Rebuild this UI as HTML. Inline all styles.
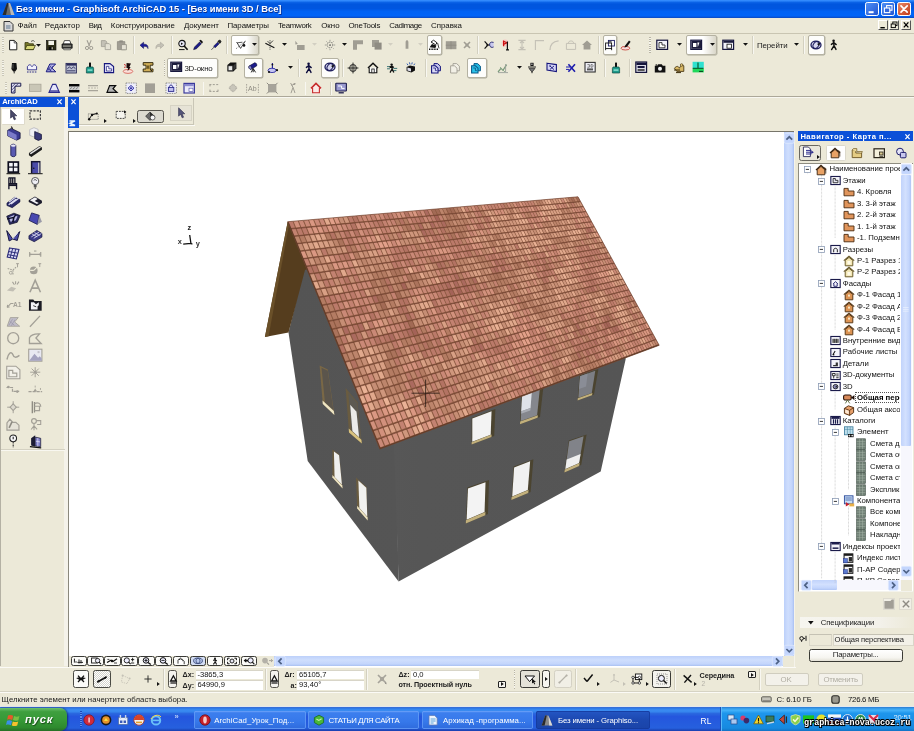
<!DOCTYPE html>
<html lang="ru"><head><meta charset="utf-8"><title>Без имени - Graphisoft ArchiCAD 15</title>
<style>
html,body{margin:0;padding:0;background:#ece9d8;overflow:hidden}
#w{position:absolute;left:0;top:0;width:914px;height:731px;overflow:hidden}
#s{position:absolute;left:-4px;top:-4px;width:922px;height:739px;overflow:hidden;background:#ece9d8;font-family:"Liberation Sans",sans-serif;filter:blur(0.45px)}
#o{position:absolute;left:4px;top:4px;width:914px;height:731px}
#o div,#o span,#o svg{position:absolute;box-sizing:border-box}
#o span{white-space:nowrap}
#o svg{overflow:visible}
#s>i{position:absolute;display:block}
</style></head><body><div id="w"><div id="s"><i style="left:0;top:0;width:922px;height:24px;background:#0a5ae6"></i><i style="left:0;top:708px;width:922px;height:31px;background:#1c4cc0"></i><i style="left:725px;top:708px;width:197px;height:31px;background:#1480d8"></i><i style="left:0;top:708px;width:60px;height:31px;background:#2a7a2a"></i><div id="o">
<div style="left:0px;top:0px;width:914px;height:18.8px;background:linear-gradient(#3a90ff 0%,#2a84fa 5%,#0a62e6 13%,#0056de 22%,#0056e0 45%,#0062f4 60%,#0064f8 84%,#0a4cc8 93%,#0a3ea8 100%)"></div>
<div style="left:0px;top:18.8px;width:914px;height:1.1px;background:#f3f5f0"></div>
<svg style="left:2px;top:2px" width="13" height="14" viewBox="0 0 13 14" ><path d="M0.5 13 L5 1 L8 1 L12.5 13 Z" fill="#6c6c6c"/><path d="M5 1 L6.5 1 L4 13 L0.5 13Z" fill="#2b2b2b"/><path d="M6.5 1 L8 1 L12.5 13 L9 13Z" fill="#b9b9b9"/></svg>
<span class="t" style="left:16px;top:3.2px;font-size:9.4px;line-height:11.4px;font-weight:bold;letter-spacing:-0.02px;color:#fff;text-shadow:0.6px 0.6px 0 #0a2a8a;">Без имени - Graphisoft ArchiCAD 15 - [Без имени 3D / Все]</span>
<div style="left:864.5px;top:2.2px;width:14.2px;height:14px;border-radius:2.2px;border:0.8px solid #fff;background:linear-gradient(135deg,#4f8ff5,#2256d2)"></div>
<svg style="left:864.5px;top:2.2px" width="14.2" height="14" viewBox="0 0 14.2 14" ><rect x="3.6" y="9.2" width="5" height="2" fill="#fff"/></svg>
<div style="left:880.8px;top:2.2px;width:14.2px;height:14px;border-radius:2.2px;border:0.8px solid #fff;background:linear-gradient(135deg,#4f8ff5,#2256d2)"></div>
<svg style="left:880.8px;top:2.2px" width="14.2" height="14" viewBox="0 0 14.2 14" ><rect x="5.6" y="3.6" width="5.4" height="4.6" fill="none" stroke="#fff" stroke-width="1.1"/><rect x="3.4" y="6" width="5.4" height="4.6" fill="#3268dc" stroke="#fff" stroke-width="1.1"/></svg>
<div style="left:897.2px;top:2.2px;width:14.2px;height:14px;border-radius:2.2px;border:0.8px solid #fff;background:linear-gradient(135deg,#e88a68,#c03a18)"></div>
<svg style="left:897.2px;top:2.2px" width="14.2" height="14" viewBox="0 0 14.2 14" ><path d="M4 3.8 L10.2 10.2 M10.2 3.8 L4 10.2" stroke="#fff" stroke-width="1.7" stroke-linecap="round"/></svg>
<div style="left:0px;top:18.3px;width:914px;height:15px;background:#ece9d8"></div>
<div style="left:0px;top:32.6px;width:914px;height:0.9px;background:#c9c5b2"></div>
<div style="left:0px;top:33.5px;width:914px;height:0.7px;background:#fbfaf5"></div>
<svg style="left:2.5px;top:19.5px" width="11" height="12" viewBox="0 0 11 12" ><path d="M1 1.5 L7 1.5 L10 4.5 L10 11 L1 11Z" fill="#d8d8d8" stroke="#333" stroke-width="1"/><path d="M3 5 L7.5 5 L7.5 9 L3 9Z" fill="#9aa7b5"/></svg>
<span class="t" style="left:17.6px;top:21px;font-size:7.9px;line-height:9.9px;letter-spacing:-0.01px;color:#111;">Файл</span>
<span class="t" style="left:44.8px;top:21px;font-size:7.9px;line-height:9.9px;letter-spacing:0.17px;color:#111;">Редактор</span>
<span class="t" style="left:88.7px;top:21px;font-size:7.9px;line-height:9.9px;letter-spacing:-0.5px;color:#111;">Вид</span>
<span class="t" style="left:110.8px;top:21px;font-size:7.9px;line-height:9.9px;letter-spacing:0.01px;color:#111;">Конструирование</span>
<span class="t" style="left:183.9px;top:21px;font-size:7.9px;line-height:9.9px;letter-spacing:0.01px;color:#111;">Документ</span>
<span class="t" style="left:227.4px;top:21px;font-size:7.9px;line-height:9.9px;letter-spacing:-0.06px;color:#111;">Параметры</span>
<span class="t" style="left:277.9px;top:21px;font-size:7.9px;line-height:9.9px;letter-spacing:-0.29px;color:#111;">Teamwork</span>
<span class="t" style="left:321.2px;top:21px;font-size:7.9px;line-height:9.9px;letter-spacing:0.01px;color:#111;">Окно</span>
<span class="t" style="left:348.4px;top:21px;font-size:7.9px;line-height:9.9px;letter-spacing:-0.2px;color:#111;">OneTools</span>
<span class="t" style="left:389.2px;top:21px;font-size:7.9px;line-height:9.9px;letter-spacing:-0.43px;color:#111;">Cadimage</span>
<span class="t" style="left:431px;top:21px;font-size:7.9px;line-height:9.9px;letter-spacing:0px;color:#111;">Справка</span>
<div style="left:877.6px;top:20.3px;width:10.4px;height:10px;background:#ece9d8;border-top:0.7px solid #fff;border-left:0.7px solid #fff;border-right:0.8px solid #555;border-bottom:0.8px solid #555"></div>
<svg style="left:877.6px;top:20.3px" width="10.4" height="10" viewBox="0 0 10.4 10" ><rect x="2.4" y="7" width="4.4" height="1.4" fill="#000"/></svg>
<div style="left:888.6px;top:20.3px;width:10.4px;height:10px;background:#ece9d8;border-top:0.7px solid #fff;border-left:0.7px solid #fff;border-right:0.8px solid #555;border-bottom:0.8px solid #555"></div>
<svg style="left:888.6px;top:20.3px" width="10.4" height="10" viewBox="0 0 10.4 10" ><rect x="3.8" y="2" width="4.2" height="3.6" fill="none" stroke="#000" stroke-width="0.9"/><rect x="2.2" y="4" width="4.2" height="3.6" fill="#ece9d8" stroke="#000" stroke-width="0.9"/></svg>
<div style="left:901px;top:20.3px;width:10.4px;height:10px;background:#ece9d8;border-top:0.7px solid #fff;border-left:0.7px solid #fff;border-right:0.8px solid #555;border-bottom:0.8px solid #555"></div>
<svg style="left:901px;top:20.3px" width="10.4" height="10" viewBox="0 0 10.4 10" ><path d="M2.8 2.4 L7.4 7.4 M7.4 2.4 L2.8 7.4" stroke="#000" stroke-width="1.3"/></svg>
<div style="left:67.9px;top:130.9px;width:726px;height:535.9px;background:#fff;border-top:1.1px solid #77756a;border-left:1.1px solid #8a887d"></div>
<div style="left:784px;top:132px;width:9.9px;height:523.6px;background:linear-gradient(90deg,#bcd0fa,#cfdefd 40%,#c3d5fc 80%,#a9c0f2)"></div>
<div style="left:793.9px;top:130.9px;width:4.3px;height:536px;background:#f5f3ea"></div>
<svg style="left:783.6px;top:132.8px" width="10.6" height="10.6" viewBox="0 0 10.6 10.6" ><rect x="0.3" y="0.3" width="10" height="10" rx="1.4" fill="#c3d5fd" stroke="#e6eefe" stroke-width="0.6"/><path d="M2.4 6.6 L5.3 3.8 L8.2 6.6" fill="none" stroke="#4d6185" stroke-width="1.7"/></svg>
<svg style="left:783.6px;top:644.6px" width="10.6" height="10.6" viewBox="0 0 10.6 10.6" ><rect x="0.3" y="0.3" width="10" height="10" rx="1.4" fill="#c3d5fd" stroke="#e6eefe" stroke-width="0.6"/><path d="M2.4 4 L5.3 6.8 L8.2 4" fill="none" stroke="#4d6185" stroke-width="1.7"/></svg>
<div style="left:273.6px;top:656.2px;width:509.4px;height:10.2px;background:linear-gradient(#bdd0fa,#cfdefd 40%,#c3d5fc 80%,#a9c0f2)"></div>
<svg style="left:274.6px;top:656px" width="10.6" height="10.6" viewBox="0 0 10.6 10.6" ><rect x="0.3" y="0.3" width="10" height="10" rx="1.4" fill="#c3d5fd" stroke="#e6eefe" stroke-width="0.6"/><path d="M6.6 2.4 L3.8 5.3 L6.6 8.2" fill="none" stroke="#4d6185" stroke-width="1.7"/></svg>
<svg style="left:771.8px;top:656px" width="10.6" height="10.6" viewBox="0 0 10.6 10.6" ><rect x="0.3" y="0.3" width="10" height="10" rx="1.4" fill="#c3d5fd" stroke="#e6eefe" stroke-width="0.6"/><path d="M4 2.4 L6.8 5.3 L4 8.2" fill="none" stroke="#4d6185" stroke-width="1.7"/></svg>
<div style="left:783px;top:655.8px;width:11px;height:11px;background:#ece9d8"></div>
<div style="left:68.6px;top:655.6px;width:205px;height:11.2px;background:#ece9d8"></div>
<svg style="left:0px;top:0px" width="914" height="731" viewBox="0 0 914 731" ><defs><linearGradient id="gw" x1="0" y1="0" x2="1" y2="0"><stop offset="0" stop-color="#545454"/><stop offset="1" stop-color="#555555"/></linearGradient><linearGradient id="fw" x1="0" y1="0" x2="1" y2="0"><stop offset="0" stop-color="#575757"/><stop offset="0.12" stop-color="#565656"/><stop offset="1" stop-color="#555"/></linearGradient></defs><polygon points="305,264 288.5,332.4 307.7,461 398.6,581.5 396,455 395,436 340,330" fill="url(#gw)"/><polygon points="393,436 625.8,350 625.6,359.5 600.7,471.5 398.6,581.5 394.4,455" fill="url(#fw)"/><polygon points="287.7,221.7 264.9,337 288.5,332.4 305,270 310,268 295,224" fill="#553d1e"/><polygon points="287.7,221.7 264.9,337 268.6,336.2 288.8,226" fill="#6a5029"/><polygon points="471.6,418 495.4,409 494.2,436 471.6,444.6" fill="#4b4430"/><polygon points="472.31,418.53 491.56,411.25 490.68,434.68 472.28,441.68" fill="#f3f3f3"/><polygon points="471.6,442.21 491.58,434.61 491.49,437.03 471.6,444.6" fill="#c2b07c"/><polygon points="521.5,394.5 543.4,387 540,417 520,424.2" fill="#4b4430"/><polygon points="522.11,395.17 539.8,389.1 537.11,415.16 520.76,421.01" fill="#85878d"/><polygon points="522.11,395.17 531.84,391.83 530.54,407.93 521.27,411.19" fill="#dfe2e8"/><polygon points="521.27,411.19 530.54,407.93 530.34,410.52 521.13,413.78" fill="#a9acb3"/><polygon points="520.13,421.53 537.89,415.17 537.6,417.86 520,424.2" fill="#c2b07c"/><polygon points="579.6,375.6 598.4,369 594,394.6 577.6,400.4" fill="#4b4430"/><polygon points="580.1,376.15 595.27,370.82 591.78,392.98 578.3,397.74" fill="#7c7e84"/><polygon points="580.1,376.15 587.69,373.48 586.1,386.61 579.02,389.1" fill="#8a8d96"/><polygon points="577.78,398.17 592.4,393 592.03,395.3 577.6,400.4" fill="#c2b07c"/><polygon points="467.4,487.6 489,480 488,514 465.8,523.6" fill="#4b4430"/><polygon points="468,488.45 485.51,482.25 484.56,512.1 466.62,519.72" fill="#f3f3f3"/><polygon points="465.94,520.36 485.43,512.07 485.34,515.15 465.8,523.6" fill="#c2b07c"/><polygon points="513.6,466.6 533.4,459.2 530.6,492 511.4,500" fill="#4b4430"/><polygon points="514.13,467.38 530.15,461.37 527.8,489.99 512.2,496.42" fill="#f1f1f1"/><polygon points="511.6,496.99 528.54,490 528.3,492.96 511.4,500" fill="#c2b07c"/><polygon points="568.8,440.6 586.6,434.4 581.2,465 564.4,472.4" fill="#4b4430"/><polygon points="569.2,441.37 583.59,436.32 579.04,463.1 565.35,469" fill="#818389"/><polygon points="566.66,459.61 580.59,454 579.04,463.1 565.35,469" fill="#efefef"/><polygon points="564.8,469.54 579.66,463.12 579.18,465.89 564.4,472.4" fill="#c2b07c"/><polygon points="319.6,365.6 327.8,369.4 334.4,415 322.8,404" fill="#7a6846"/><polygon points="321.52,367.64 327.75,370.65 333.4,410.13 324.96,402.42" fill="#5b554c"/><polygon points="322.51,400.54 333.81,410.9 334.4,415 322.8,404" fill="#efe6c4"/><polygon points="345.6,388 357.4,402.2 361.8,443.4 349,432.4" fill="#6a5c40"/><polygon points="348.3,392.43 357.18,403.01 360.98,438.94 351.45,430.45" fill="#5d5a52"/><polygon points="350.16,404.83 356.5,411.8 359.07,437.24 352.41,431.3" fill="#ebebe8"/><polygon points="348.69,428.4 361.4,439.69 361.8,443.4 349,432.4" fill="#d8c27e"/><polygon points="332.4,449.6 339.2,454.3 342.6,488.6 332.4,477.6" fill="#6a5c40"/><polygon points="333.92,451.52 339.09,455.18 341.96,484.86 334.57,477.08" fill="#f0f0ee"/><polygon points="332.4,475.08 342.29,485.51 342.6,488.6 332.4,477.6" fill="#efe6c4"/><polygon points="356,477.6 366.6,487 367.7,520.4 357.2,508.4" fill="#6a5c40"/><polygon points="358.37,480.61 366.32,487.72 367.27,516.71 359.39,507.9" fill="#f1f1ef"/><polygon points="357.09,505.63 367.6,517.39 367.7,520.4 357.2,508.4" fill="#efe6c4"/><defs><filter id="bl" x="-5%" y="-5%" width="110%" height="110%"><feGaussianBlur stdDeviation="0.45"/></filter><clipPath id="rc"><polygon points="287.7,221.7 578,196.8 659.2,345.3 379.8,449"/></clipPath></defs><polygon points="287.7,221.7 578,196.8 659.2,345.3 379.8,449" fill="#8a5840"/><g clip-path="url(#rc)"><g filter="url(#bl)"><path d="M288.2 221.7L292.5 221.3 295 227.6 290.8 228ZM347.8 216.5L351.5 216.2 354 222.1 350.3 222.4ZM383.3 213.5L386.7 213.2 389.3 218.8 385.9 219.1ZM387.6 213.1L390.9 212.8 393.5 218.4 390.1 218.8ZM416 210.7L419.2 210.4 421.7 215.8 418.6 216.1ZM474.3 205.7L476.9 205.5 479.4 210.5 476.7 210.7ZM500.2 203.5L502.7 203.3 505.2 208.1 502.7 208.3ZM515.6 202.2L518 202 520.4 206.6 518 206.9ZM296.5 228.5L300.7 228.1 303.3 234.4 299.1 234.9ZM301.7 228L305.8 227.6 308.4 233.9 304.3 234.3ZM373.3 221.3L376.8 221 379.4 226.7 375.9 227.1ZM411.1 217.7L414.3 217.4 416.8 222.9 413.6 223.2ZM415 217.4L418.2 217.1 420.8 222.5 417.6 222.8ZM430.6 215.9L433.6 215.6 436.2 221 433.1 221.3ZM477.1 211.5L479.8 211.3 482.3 216.3 479.6 216.5ZM533 206.3L535.3 206 537.7 210.7 535.5 210.9ZM570.9 202.7L573 202.5 575.3 206.8 573.3 207.1ZM433.5 222.1L436.6 221.8 439.1 227.2 436.1 227.5ZM486.7 216.7L489.3 216.4 491.8 221.4 489.2 221.7ZM396.5 232.9L399.9 232.5 402.5 238.2 399.1 238.6ZM479.6 223.6L482.3 223.3 484.8 228.4 482.1 228.7ZM321 248.9L325.1 248.4 327.7 254.8 323.7 255.3ZM424 236.6L427.1 236.2 429.7 241.8 426.6 242.2ZM435.7 235.2L438.7 234.8 441.3 240.3 438.3 240.7ZM586.7 217.1L588.7 216.8 591.1 221.2 589.1 221.4ZM339 254.4L342.9 253.9 345.6 260.1 341.7 260.7ZM394.1 247.3L397.5 246.9 400.1 252.7 396.7 253.2ZM398.3 246.8L401.7 246.3 404.3 252.1 401 252.6ZM427 243.1L430.2 242.7 432.8 248.2 429.6 248.7ZM450 240.1L453 239.7 455.6 245.1 452.6 245.5ZM453.7 239.6L456.7 239.3 459.2 244.6 456.3 245ZM457.4 239.2L460.3 238.8 462.9 244.1 460 244.5ZM392.8 254.7L396.3 254.2 398.9 260.1 395.5 260.6ZM397.1 254.1L400.5 253.6 403.2 259.5 399.8 260ZM405.6 252.9L409 252.5 411.6 258.3 408.3 258.8ZM456.7 245.9L459.7 245.5 462.3 250.9 459.3 251.4ZM464 244.9L466.9 244.5 469.5 249.9 466.6 250.3ZM467.6 244.4L470.5 244 473 249.4 470.2 249.8ZM314.8 273.5L319 272.9 321.7 279.4 317.5 280.1ZM335.3 270.5L339.3 269.9 342 276.3 338 276.9ZM391.5 262.2L395 261.7 397.7 267.7 394.2 268.2ZM395.9 261.6L399.4 261.1 402 267 398.6 267.6ZM404.5 260.3L407.9 259.9 410.5 265.7 407.1 266.2ZM408.7 259.7L412 259.2 414.7 265.1 411.4 265.6ZM440.9 255L444 254.6 446.6 260.1 443.5 260.6ZM452.3 253.3L455.3 252.9 457.9 258.4 455 258.9ZM456.1 252.8L459 252.3 461.6 257.8 458.7 258.3ZM463.4 251.7L466.3 251.3 468.9 256.7 466 257.1ZM474.2 250.1L477 249.7 479.6 255 476.8 255.5ZM514.3 244.2L516.8 243.9 519.3 248.9 516.8 249.3ZM323.2 280.4L327.3 279.7 330 286.3 325.9 287ZM353.2 275.7L357.1 275.1 359.8 281.4 355.9 282ZM447.8 260.9L450.9 260.5 453.5 266.1 450.5 266.6ZM487.6 254.7L490.4 254.3 493 259.6 490.2 260ZM497.8 253.2L500.4 252.7 503 257.9 500.4 258.4ZM544.5 245.9L546.8 245.5 549.3 250.4 547 250.7ZM443.2 268.7L446.3 268.2 449 273.9 445.9 274.5ZM497.4 259.8L500.1 259.3 502.7 264.6 500.1 265.1ZM577.8 246.5L579.9 246.2 582.4 250.8 580.3 251.2ZM580.5 246.1L582.6 245.7 585 250.3 582.9 250.7ZM324.3 296.7L328.5 296 331.2 302.7 327.1 303.4ZM329.5 295.8L333.6 295.1 336.4 301.7 332.3 302.5ZM339.8 294L343.8 293.3 346.5 299.9 342.5 300.6ZM349.8 292.2L353.7 291.6 356.5 298.1 352.5 298.8ZM359.6 290.5L363.4 289.9 366.1 296.3 362.3 297ZM450.2 274.7L453.2 274.2 455.9 279.9 452.8 280.4ZM507.1 264.8L509.8 264.3 512.4 269.6 509.7 270ZM532.5 260.3L534.9 259.9 537.5 265 535.1 265.4ZM535.5 259.8L538 259.4 540.5 264.4 538.1 264.8ZM547.4 257.7L549.8 257.3 552.3 262.2 550 262.7ZM578.1 252.4L580.2 252 582.7 256.7 580.6 257.1ZM588.5 250.6L590.6 250.2 593.1 254.8 591 255.2ZM591.1 250.1L593.1 249.8 595.6 254.3 593.6 254.7ZM593.6 249.7L595.6 249.3 598.1 253.9 596.1 254.2ZM596.1 249.2L598.1 248.9 600.6 253.4 598.6 253.8ZM332.7 303.6L336.8 302.8 339.6 309.5 335.5 310.3ZM433.5 285L436.8 284.4 439.5 290.3 436.3 290.9ZM457.1 280.7L460.1 280.1 462.8 285.8 459.8 286.4ZM464.7 279.3L467.6 278.7 470.3 284.4 467.3 284.9ZM535.5 266.2L537.9 265.8 540.5 270.8 538.1 271.3ZM547.5 264L549.8 263.6 552.4 268.6 550.1 269ZM361.1 306.5L365 305.8 367.8 312.3 363.9 313.1ZM436.7 291.9L439.9 291.3 442.7 297.2 439.4 297.8ZM440.7 291.1L443.9 290.5 446.6 296.4 443.5 297ZM452.6 288.8L455.7 288.2 458.4 294 455.3 294.6ZM460.2 287.3L463.3 286.7 466 292.5 463 293.1ZM471.5 285.1L474.4 284.6 477.1 290.2 474.2 290.8ZM482.4 283L485.2 282.5 487.9 288 485.1 288.6ZM535.5 272.7L537.9 272.3 540.5 277.4 538.1 277.9ZM544.6 271L546.9 270.5 549.5 275.5 547.2 276ZM547.5 270.4L549.9 269.9 552.5 275 550.1 275.4ZM581.3 263.8L583.4 263.4 585.9 268.2 583.8 268.6ZM596.9 260.8L598.9 260.4 601.4 265.1 599.4 265.5ZM609.3 258.4L611.2 258 613.7 262.6 611.8 263ZM443.9 298L447.1 297.3 449.8 303.3 446.7 303.9ZM478.3 291L481.2 290.4 483.9 296 481 296.6ZM506.3 285.3L509 284.7 511.7 290.1 509 290.7ZM544.6 277.5L547 277 549.6 282.1 547.2 282.6ZM586.9 268.9L589 268.4 591.5 273.2 589.4 273.6ZM612.2 263.7L614.1 263.3 616.6 267.8 614.7 268.3ZM367.6 321.9L371.5 321.1 374.3 327.7 370.4 328.6ZM409.3 313L412.8 312.2 415.6 318.5 412.1 319.3ZM434.9 307.5L438.2 306.8 441 312.9 437.7 313.6ZM587.2 275L589.3 274.5 591.8 279.3 589.7 279.8ZM589.8 274.4L591.9 273.9 594.5 278.7 592.4 279.2ZM340.5 336.5L344.7 335.5 347.6 342.5 343.4 343.4ZM366 330.8L369.9 329.9 372.7 336.6 368.8 337.5ZM462.1 309.2L465.2 308.5 468 314.4 464.9 315.2ZM473.5 306.7L476.5 306 479.3 311.8 476.3 312.5ZM515.9 297.2L518.6 296.6 521.3 302 518.6 302.6ZM587.5 281.2L589.6 280.7 592.2 285.5 590.1 286ZM592.8 280L594.9 279.5 597.4 284.3 595.4 284.8ZM379 336.3L382.9 335.4 385.7 342.1 381.9 343.1ZM397.9 331.9L401.5 331.1 404.4 337.6 400.7 338.5ZM415.9 327.7L419.4 326.9 422.2 333.3 418.7 334.1ZM453.6 318.9L456.7 318.1 459.5 324.2 456.4 325ZM461.4 317L464.6 316.3 467.3 322.3 464.2 323ZM391.9 341.8L395.6 340.9 398.5 347.6 394.7 348.5ZM423.5 334.1L427 333.2 429.8 339.6 426.4 340.5ZM432.1 332L435.5 331.2 438.3 337.5 435 338.3ZM606.5 289.3L608.5 288.8 611.1 293.6 609.1 294.1ZM409.1 346.1L412.7 345.1 415.6 351.7 412 352.7ZM413.6 344.9L417.2 344 420 350.5 416.5 351.5ZM443.8 337.2L447.1 336.4 450 342.6 446.7 343.5ZM574.5 303.8L576.8 303.2 579.5 308.4 577.2 309ZM626.8 290.5L628.7 290 631.2 294.7 629.3 295.2ZM393.8 358.7L397.6 357.7 400.5 364.5 396.8 365.5ZM430.2 349L433.6 348.1 436.5 354.6 433.1 355.5ZM434.5 347.9L437.9 347 440.8 353.4 437.4 354.3ZM455.4 342.3L458.6 341.5 461.4 347.7 458.2 348.6ZM610 301.2L612 300.6 614.6 305.5 612.6 306.1ZM624.9 297.2L626.9 296.7 629.4 301.4 627.5 301.9ZM489.8 341L492.7 340.2 495.6 346.2 492.6 347ZM493.5 340L496.4 339.2 499.2 345.1 496.3 345.9ZM577.9 316.6L580.2 315.9 582.9 321.1 580.6 321.8ZM580.7 315.8L583 315.2 585.7 320.3 583.4 321ZM589.1 313.5L591.3 312.9 594 317.9 591.8 318.6ZM405.4 373.3L409.1 372.2 412.1 379 408.3 380.1ZM414.6 370.6L418.3 369.5 421.2 376.3 417.6 377.4ZM485.6 350.1L488.6 349.3 491.5 355.4 488.4 356.3ZM507.6 343.8L510.5 343 513.3 348.9 510.5 349.7ZM538.3 334.9L540.9 334.2 543.7 339.8 541.1 340.6ZM503.7 352.8L506.6 351.9 509.5 357.9 506.6 358.8ZM563.6 334.9L566 334.2 568.8 339.6 566.4 340.4ZM589.8 327L592.1 326.4 594.8 331.6 592.5 332.2ZM600.8 323.7L603 323.1 605.7 328.2 603.5 328.9ZM631.5 314.5L633.5 314 636.1 318.8 634.2 319.4ZM638.7 312.4L640.6 311.8 643.2 316.6 641.3 317.2ZM541.6 349.1L544.2 348.3 547 354 544.4 354.8ZM544.8 348.1L547.4 347.3 550.2 352.9 547.7 353.8ZM551.3 346.1L553.8 345.3 556.6 350.9 554.1 351.7ZM575.8 338.5L578.1 337.7 580.9 343.1 578.5 343.9ZM593 333.1L595.2 332.4 597.9 337.6 595.7 338.3ZM601.2 330.5L603.4 329.9 606.1 335 604 335.7ZM438.5 390.1L442 388.9 445 395.7 441.5 396.9ZM451.5 385.9L454.9 384.8 457.9 391.4 454.5 392.5ZM534.9 359L537.6 358.1 540.5 363.9 537.8 364.8ZM579 344.7L581.3 344 584.1 349.4 581.8 350.2ZM581.9 343.8L584.2 343 587 348.4 584.7 349.2ZM584.8 342.9L587.1 342.1 589.9 347.5 587.6 348.2ZM590.5 341L592.8 340.3 595.6 345.6 593.3 346.3ZM604.4 336.5L606.6 335.8 609.3 341 607.1 341.7ZM620.2 331.4L622.3 330.8 624.9 335.8 622.9 336.5ZM446.3 396.5L449.8 395.3 452.8 402.1 449.3 403.3ZM487.5 382.7L490.6 381.7 493.6 388 490.5 389.1ZM528 369.2L530.8 368.3 533.6 374.2 530.9 375.2ZM538.2 365.8L540.9 364.9 543.8 370.7 541.1 371.7ZM554.6 360.3L557.2 359.4 560 365.1 557.5 366ZM604.9 343.5L607 342.8 609.8 348 607.6 348.7ZM607.6 342.6L609.7 341.9 612.5 347.1 610.3 347.8ZM630.9 334.8L632.9 334.1 635.6 339.1 633.6 339.8ZM647.9 329.1L649.7 328.5 652.4 333.3 650.5 333.9ZM520.8 379.8L523.7 378.8 526.6 384.9 523.7 385.9ZM531.4 376.2L534.1 375.2 537 381.2 534.3 382.2ZM573.5 361.5L576 360.7 578.8 366.3 576.4 367.2ZM605.3 350.5L607.5 349.8 610.3 355.1 608.1 355.8ZM616.1 346.8L618.2 346.1 620.9 351.3 618.8 352ZM648.6 335.5L650.5 334.9 653.1 339.8 651.2 340.4ZM482.6 401.9L485.8 400.7 488.8 407.3 485.6 408.5ZM486.6 400.4L489.8 399.3 492.8 405.8 489.6 407ZM498.3 396.2L501.4 395.1 504.4 401.5 501.3 402.7ZM517 389.5L519.9 388.5 522.9 394.7 520 395.8Z" fill="#bb7a6a"/><path d="M293.5 221.2L297.7 220.8 300.2 227.1 296.1 227.5ZM374.7 214.2L378.2 213.9 380.7 219.6 377.3 219.9ZM395.9 212.4L399.2 212.1 401.7 217.7 398.5 218ZM400 212.1L403.3 211.8 405.8 217.3 402.6 217.6ZM408.1 211.4L411.3 211.1 413.8 216.5 410.7 216.8ZM470.9 206L473.6 205.8 476.1 210.8 473.4 211ZM512.6 202.4L515 202.2 517.4 206.9 515 207.1ZM306.9 227.5L310.9 227.2 313.5 233.4 309.4 233.8ZM336.6 224.7L340.4 224.4 343 230.4 339.2 230.8ZM355.4 223L359 222.6 361.6 228.5 357.9 228.9ZM364.4 222.1L368 221.8 370.6 227.6 367 228ZM496.8 209.7L499.3 209.4 501.8 214.3 499.2 214.6ZM500 209.4L502.5 209.1 504.9 214 502.4 214.2ZM518.4 207.6L520.8 207.4 523.2 212.1 520.8 212.4ZM527.3 206.8L529.6 206.6 532 211.2 529.7 211.5ZM535.9 206L538.2 205.8 540.6 210.4 538.3 210.6ZM358.3 229.8L362 229.5 364.6 235.4 360.9 235.8ZM376.3 228L379.8 227.6 382.4 233.4 378.9 233.8ZM571.1 208L573.2 207.8 575.5 212.2 573.5 212.4ZM370.4 235.8L374 235.4 376.6 241.2 373 241.7ZM472.7 224.4L475.5 224.1 478 229.2 475.3 229.5ZM530 218L532.3 217.8 534.8 222.5 532.5 222.8ZM535.8 217.4L538.1 217.1 540.6 221.8 538.3 222.1ZM538.7 217.1L541 216.8 543.4 221.5 541.1 221.7ZM571.3 213.4L573.4 213.2 575.8 217.6 573.7 217.9ZM576.4 212.9L578.5 212.6 580.8 217 578.8 217.3ZM579 212.6L581 212.4 583.3 216.7 581.3 217ZM584 212L585.9 211.8 588.3 216.1 586.3 216.4ZM373.5 242.6L377 242.2 379.7 248.1 376.1 248.6ZM427.9 236.1L431 235.7 433.6 241.3 430.5 241.7ZM472.2 230.8L475 230.5 477.5 235.7 474.8 236ZM538.7 222.8L541 222.6 543.4 227.3 541.1 227.6ZM579.2 218L581.2 217.7 583.6 222.1 581.6 222.4ZM584.2 217.4L586.2 217.1 588.6 221.5 586.6 221.8ZM329.1 255.7L333.1 255.1 335.8 261.5 331.8 262ZM348.7 253.1L352.5 252.6 355.2 258.8 351.4 259.3ZM376.5 249.6L380.1 249.1 382.7 255.1 379.2 255.6ZM385.4 248.4L388.9 248 391.5 253.9 388 254.3ZM423 243.6L426.2 243.2 428.8 248.8 425.7 249.2ZM430.9 242.6L434.1 242.2 436.7 247.7 433.6 248.1ZM584.5 222.8L586.5 222.5 588.9 227 586.9 227.2ZM587 222.5L589 222.2 591.4 226.6 589.4 226.9ZM337.2 262.4L341.2 261.8 343.8 268.1 339.9 268.7ZM445.5 247.5L448.5 247 451.2 252.5 448.1 253ZM474.7 243.4L477.5 243.1 480.1 248.3 477.3 248.7ZM478.2 243L480.9 242.6 483.5 247.8 480.8 248.2ZM448.6 253.9L451.6 253.4 454.2 259 451.2 259.4ZM477.7 249.6L480.5 249.2 483.1 254.5 480.3 254.9ZM526.7 242.4L529.1 242.1 531.6 247 529.2 247.4ZM411.8 266.6L415.1 266 417.8 271.9 414.5 272.5ZM351.5 283.9L355.4 283.2 358.1 289.7 354.2 290.3ZM550.3 251.1L552.6 250.7 555.1 255.5 552.8 255.9ZM556 250.1L558.2 249.7 560.8 254.5 558.5 254.9ZM590.8 244.4L592.8 244 595.2 248.6 593.2 248.9ZM430.4 278.2L433.6 277.6 436.3 283.5 433.1 284ZM343 301.7L347 300.9 349.8 307.6 345.7 308.3ZM353 299.8L356.9 299.1 359.7 305.7 355.7 306.4ZM412.7 288.8L416.1 288.2 418.9 294.3 415.5 294.9ZM417 288.1L420.3 287.4 423.1 293.5 419.7 294.1ZM529.3 267.4L531.8 266.9 534.4 272 532 272.5ZM570.2 259.8L572.4 259.4 574.9 264.2 572.8 264.6ZM601.5 254.1L603.5 253.7 605.9 258.2 604 258.6ZM424.4 294.3L427.7 293.6 430.4 299.7 427.1 300.3ZM578.6 264.4L580.7 264 583.3 268.7 581.1 269.2ZM599.4 260.3L601.4 259.9 603.9 264.5 601.9 265ZM364.3 314.2L368.2 313.4 371 320 367.1 320.8ZM470.9 292.5L473.9 291.9 476.6 297.6 473.6 298.2ZM481.9 290.2L484.8 289.6 487.5 295.3 484.6 295.9ZM485.5 289.5L488.4 288.9 491.1 294.5 488.2 295.1ZM489.1 288.8L491.9 288.2 494.6 293.8 491.8 294.4ZM526 281.3L528.5 280.7 531.2 286 528.6 286.5ZM532.3 280L534.8 279.5 537.4 284.7 534.9 285.2ZM578.8 270.5L581 270 583.6 274.9 581.4 275.3ZM594.7 267.3L596.7 266.8 599.2 271.5 597.2 272ZM599.8 266.2L601.8 265.8 604.3 270.5 602.3 270.9ZM607.3 264.7L609.2 264.3 611.7 268.9 609.8 269.3ZM451.1 304.1L454.2 303.4 457 309.3 453.8 310ZM576.4 277.3L578.6 276.8 581.1 281.7 579 282.2ZM385.3 326.4L389 325.6 391.8 332.2 388.1 333ZM434 315.5L437.3 314.8 440.1 320.9 436.8 321.7ZM442.2 313.7L445.5 313 448.3 319 445 319.8ZM450.3 311.9L453.5 311.2 456.3 317.2 453.1 317.9ZM582.1 282.4L584.3 281.9 586.9 286.8 584.7 287.3ZM605.6 277.1L607.6 276.6 610.2 281.3 608.2 281.8ZM465.3 316.1L468.4 315.4 471.2 321.3 468.1 322.1ZM515.7 304.3L518.4 303.7 521.1 309.2 518.5 309.8ZM601 284.4L603 283.9 605.6 288.7 603.5 289.2ZM440.5 329.9L443.8 329.1 446.7 335.3 443.4 336.2ZM456.8 325.9L460 325.2 462.8 331.2 459.6 332ZM565.7 299.3L568 298.7 570.7 303.9 568.4 304.4ZM579.9 295.8L582.1 295.3 584.8 300.3 582.5 300.8ZM611.6 288.1L613.6 287.6 616.1 292.3 614.1 292.8ZM623.8 285.1L625.7 284.6 628.3 289.2 626.4 289.7ZM464 332L467.2 331.2 470 337.3 466.9 338.1ZM479.5 328.1L482.5 327.3 485.3 333.3 482.3 334.1ZM515.3 318.9L518 318.2 520.8 323.9 518.1 324.6ZM571.7 304.6L574 304 576.6 309.1 574.3 309.7ZM583 301.7L585.2 301.1 587.8 306.1 585.6 306.7ZM585.7 301L587.9 300.4 590.6 305.4 588.4 306ZM617 293L619 292.5 621.6 297.2 619.6 297.7ZM451.3 343.4L454.5 342.5 457.4 348.8 454.1 349.7ZM482.7 335L485.7 334.2 488.6 340.2 485.6 341ZM531.9 322L534.5 321.3 537.3 326.8 534.7 327.5ZM569 312.1L571.3 311.5 574 316.7 571.7 317.3ZM583.3 308.3L585.5 307.7 588.2 312.8 585.9 313.4ZM586 307.5L588.3 307 590.9 312 588.7 312.6ZM402 365.3L405.7 364.3 408.6 371.1 404.9 372.1ZM406.6 364L410.3 363 413.2 369.7 409.6 370.8ZM411.2 362.8L414.9 361.7 417.8 368.4 414.2 369.5ZM437.8 355.4L441.3 354.4 444.2 360.9 440.7 361.9ZM466.7 347.4L469.9 346.5 472.7 352.7 469.6 353.6ZM511.4 335L514.2 334.2 517 340 514.2 340.8ZM583.6 315L585.8 314.4 588.5 319.5 586.3 320.2ZM610.5 307.6L612.5 307 615.1 311.9 613.1 312.5ZM613 306.8L615 306.3 617.7 311.2 615.6 311.7ZM453.8 359.3L457.1 358.3 460 364.7 456.8 365.7ZM477.9 352.4L481 351.5 483.9 357.6 480.8 358.5ZM583.9 321.8L586.1 321.2 588.8 326.4 586.6 327ZM444.6 370.5L448 369.5 451 376 447.6 377.1ZM496.4 355L499.4 354.1 502.2 360.2 499.3 361.1ZM507.4 351.7L510.2 350.9 513.1 356.8 510.2 357.7ZM510.9 350.7L513.8 349.8 516.6 355.7 513.8 356.6ZM514.5 349.6L517.3 348.8 520.1 354.6 517.3 355.5ZM521.5 347.5L524.2 346.7 527.1 352.5 524.3 353.4ZM524.9 346.5L527.6 345.7 530.5 351.5 527.7 352.3ZM538.3 342.5L540.9 341.7 543.7 347.3 541.1 348.2ZM544.8 340.5L547.4 339.7 550.2 345.4 547.6 346.1ZM554.3 337.7L556.8 336.9 559.6 342.4 557.1 343.2ZM587 327.9L589.3 327.2 592 332.4 589.7 333.1ZM378.1 399.9L382.1 398.7 385.1 405.9 381.1 407.2ZM503.4 360.9L506.4 360 509.2 366.1 506.3 367ZM560.7 343.1L563.1 342.4 565.9 347.9 563.5 348.7ZM595.8 332.2L598 331.6 600.7 336.7 598.5 337.5ZM606.6 328.9L608.8 328.2 611.4 333.3 609.3 334ZM619.7 324.8L621.7 324.2 624.4 329.1 622.3 329.8ZM637 319.4L638.9 318.8 641.5 323.6 639.6 324.3ZM506.8 368L509.7 367.1 512.6 373.2 509.7 374.2ZM517.6 364.5L520.4 363.6 523.3 369.6 520.5 370.6ZM521.1 363.4L523.9 362.5 526.8 368.5 524 369.4ZM524.6 362.3L527.4 361.4 530.3 367.3 527.5 368.2ZM528.1 361.2L530.8 360.3 533.7 366.2 531 367.1ZM538.3 357.9L540.9 357 543.8 362.8 541.1 363.7ZM612.4 334L614.5 333.3 617.2 338.4 615.1 339.1ZM622.8 330.6L624.8 330 627.5 335 625.5 335.6ZM637.6 325.8L639.6 325.2 642.2 330.1 640.3 330.7ZM369.5 422.2L373.7 420.8 376.8 428.3 372.6 429.8ZM380 418.7L384.1 417.3 387.1 424.7 383 426.2ZM400.1 412L404 410.7 407 417.9 403.1 419.2ZM521 371.5L523.8 370.6 526.7 376.6 523.9 377.6ZM524.5 370.4L527.3 369.4 530.2 375.4 527.4 376.4ZM534.9 366.9L537.6 366 540.4 371.9 537.7 372.8ZM615.6 339.9L617.7 339.2 620.4 344.3 618.3 345.1ZM620.8 338.2L622.8 337.5 625.5 342.6 623.5 343.3ZM640.7 331.5L642.6 330.9 645.3 335.7 643.4 336.4ZM378.4 429.2L382.5 427.7 385.6 435.3 381.4 436.7ZM466.9 398.5L470.2 397.4 473.2 404 469.9 405.2ZM471 397.1L474.3 395.9 477.3 402.5 474 403.7ZM498.7 387.5L501.7 386.4 504.7 392.8 501.6 393.8ZM561.1 365.8L563.7 365 566.5 370.7 564 371.6ZM623.9 344.1L626 343.4 628.7 348.5 626.6 349.2ZM629 342.3L631 341.6 633.7 346.7 631.7 347.4ZM643.8 337.2L645.7 336.5 648.4 341.4 646.5 342.1ZM392.2 434.3L396.3 432.8 399.4 440.3 395.4 441.8ZM421.6 423.7L425.4 422.4 428.5 429.6 424.7 431ZM509.7 392.2L512.6 391.1 515.6 397.4 512.6 398.5ZM534.7 383.2L537.5 382.2 540.4 388.2 537.7 389.2ZM605.8 357.7L608 356.9 610.8 362.2 608.6 363ZM632.2 348.2L634.2 347.5 636.9 352.6 634.9 353.3Z" fill="#d2917d"/><path d="M298.7 220.8L302.8 220.4 305.4 226.6 301.3 227ZM303.9 220.3L308 220 310.5 226.1 306.4 226.5ZM314 219.4L318 219.1 320.6 225.2 316.6 225.6ZM319 219L322.9 218.7 325.5 224.8 321.6 225.1ZM361.4 215.4L365 215.1 367.6 220.8 364 221.2ZM365.9 215L369.5 214.7 372 220.4 368.5 220.8ZM379 213.9L382.5 213.6 385 219.2 381.6 219.5ZM391.8 212.8L395.1 212.5 397.6 218.1 394.3 218.4ZM420 210.4L423.1 210.1 425.6 215.5 422.5 215.7ZM484.2 204.8L486.8 204.6 489.3 209.5 486.7 209.8ZM497.1 203.7L499.6 203.5 502.1 208.3 499.5 208.6ZM506.5 202.9L508.9 202.7 511.3 207.5 508.9 207.7ZM521.5 201.6L523.9 201.4 526.3 206.1 523.9 206.3ZM560.4 198.3L562.5 198.1 564.9 202.5 562.8 202.7ZM322 226.1L325.9 225.7 328.5 231.9 324.6 232.3ZM341.4 224.3L345.1 223.9 347.7 229.9 343.9 230.3ZM359.9 222.5L363.5 222.2 366.1 228.1 362.5 228.4ZM386.3 220.1L389.7 219.7 392.2 225.4 388.9 225.7ZM407 218.1L410.3 217.8 412.8 223.3 409.6 223.6ZM422.9 216.6L426 216.3 428.5 221.7 425.4 222ZM521.4 207.4L523.7 207.1 526.2 211.8 523.8 212.1ZM560.5 203.7L562.6 203.5 565 207.9 562.9 208.1ZM349.1 230.8L352.8 230.4 355.4 236.4 351.7 236.8ZM397.7 225.8L401 225.5 403.6 231.1 400.3 231.5ZM469.8 218.4L472.6 218.1 475.1 223.2 472.3 223.5ZM521.2 213.1L523.6 212.9 526.1 217.6 523.7 217.9ZM573.7 207.8L575.7 207.6 578.1 211.9 576 212.1ZM576.2 207.5L578.2 207.3 580.6 211.6 578.6 211.9ZM578.7 207.2L580.7 207 583.1 211.4 581.1 211.6ZM352.1 237.8L355.8 237.4 358.4 243.4 354.7 243.8ZM356.8 237.3L360.4 236.9 363.1 242.9 359.4 243.3ZM379.3 234.8L382.8 234.4 385.4 240.2 381.9 240.6ZM544.4 216.4L546.6 216.2 549 220.8 546.8 221.1ZM581.5 212.3L583.5 212.1 585.8 216.4 583.8 216.7ZM355.1 244.8L358.9 244.4 361.5 250.4 357.8 250.9ZM391 240.5L394.4 240.1 397.1 245.9 393.6 246.4ZM485.9 229.2L488.6 228.8 491.1 233.9 488.4 234.3ZM581.7 217.7L583.7 217.4 586.1 221.8 584.1 222.1ZM434.8 242.1L437.9 241.7 440.5 247.2 437.4 247.6ZM442.5 241.1L445.5 240.7 448.1 246.1 445.1 246.6ZM464.6 238.2L467.5 237.9 470 243.2 467.2 243.6ZM347 261L350.9 260.5 353.5 266.7 349.7 267.3ZM388.5 255.3L391.9 254.8 394.6 260.8 391.1 261.3ZM409.8 252.4L413.1 251.9 415.7 257.7 412.4 258.2ZM422.1 250.7L425.3 250.2 427.9 255.9 424.7 256.4ZM426.1 250.1L429.3 249.7 431.9 255.3 428.7 255.8ZM430 249.6L433.2 249.2 435.8 254.8 432.7 255.2ZM453 246.4L456 246 458.6 251.5 455.6 251.9ZM460.4 245.4L463.3 245 465.9 250.4 463 250.8ZM345.2 269L349.1 268.5 351.8 274.8 347.9 275.4ZM350.1 268.3L354 267.8 356.6 274 352.8 274.6ZM400.2 261L403.6 260.5 406.3 266.4 402.9 266.9ZM417 258.5L420.3 258 422.9 263.8 419.7 264.3ZM421.1 257.9L424.3 257.4 427 263.2 423.7 263.7ZM444.8 254.4L447.8 254 450.4 259.6 447.4 260ZM459.8 252.2L462.7 251.8 465.3 257.3 462.4 257.7ZM403.3 267.9L406.7 267.3 409.4 273.3 406 273.8ZM420.1 265.3L423.4 264.7 426 270.6 422.8 271.1ZM494.4 253.7L497.1 253.3 499.7 258.5 497 258.9ZM504.4 252.1L507 251.7 509.6 256.9 507 257.3ZM550.2 245L552.5 244.6 555 249.4 552.7 249.8ZM580.2 240.3L582.3 240 584.7 244.6 582.7 244.9ZM341.6 285.5L345.6 284.9 348.3 291.4 344.4 292ZM361.2 282.3L365 281.7 367.7 288 363.9 288.7ZM365.9 281.5L369.7 280.9 372.4 287.2 368.7 287.8ZM402.1 275.5L405.6 275 408.3 281 404.8 281.6ZM435.3 270L438.5 269.5 441.2 275.3 438 275.8ZM447.1 268.1L450.1 267.6 452.8 273.3 449.7 273.8ZM490.7 260.9L493.4 260.5 496 265.8 493.3 266.2ZM547.4 251.5L549.7 251.2 552.3 256 549.9 256.4ZM575.2 246.9L577.3 246.6 579.8 251.3 577.7 251.6ZM583.1 245.6L585.1 245.3 587.6 249.9 585.5 250.3ZM344.8 293.1L348.8 292.4 351.5 299 347.5 299.7ZM354.7 291.4L358.6 290.7 361.3 297.2 357.4 297.9ZM465.3 272.1L468.2 271.6 470.9 277.1 467.9 277.7ZM529.4 260.9L531.9 260.4 534.5 265.5 532 266ZM538.6 259.3L541 258.9 543.5 263.9 541.1 264.3ZM553.2 256.7L555.5 256.3 558.1 261.2 555.8 261.6ZM362.7 298L366.6 297.3 369.3 303.8 365.5 304.5ZM421.2 287.3L424.5 286.7 427.2 292.7 423.9 293.3ZM425.3 286.5L428.6 285.9 431.4 291.9 428.1 292.5ZM538.5 265.7L541 265.2 543.5 270.3 541.1 270.7ZM550.4 263.5L552.7 263 555.3 268 553 268.4ZM599 254.5L601 254.2 603.5 258.7 601.5 259.1ZM341.1 310.4L345.2 309.6 348 316.3 343.9 317.2ZM351.2 308.5L355.2 307.7 358 314.3 354 315.1ZM366 305.6L369.8 304.9 372.6 311.4 368.7 312.1ZM407.3 297.6L410.8 296.9 413.5 303.1 410 303.8ZM428.5 293.5L431.8 292.8 434.6 298.8 431.3 299.5ZM432.6 292.7L435.9 292 438.6 298 435.4 298.7ZM478.8 283.7L481.7 283.2 484.4 288.7 481.5 289.3ZM538.5 272.1L541 271.7 543.6 276.8 541.1 277.2ZM586.6 262.8L588.6 262.4 591.2 267.1 589.1 267.5ZM589.2 262.3L591.2 261.9 593.8 266.6 591.7 267ZM594.3 261.3L596.4 260.9 598.9 265.6 596.8 266ZM604.4 259.4L606.3 259 608.8 263.5 606.9 263.9ZM344.3 318.3L348.4 317.4 351.2 324.2 347.1 325.1ZM354.4 316.2L358.4 315.4 361.2 322.1 357.3 322.9ZM359.4 315.2L363.4 314.4 366.2 321 362.2 321.9ZM435.8 299.6L439.1 299 441.8 305 438.6 305.7ZM459.6 294.8L462.6 294.2 465.4 300 462.3 300.6ZM513 283.9L515.7 283.4 518.3 288.7 515.7 289.3ZM570.6 272.2L572.8 271.7 575.4 276.6 573.2 277.1ZM581.5 269.9L583.7 269.5 586.2 274.3 584.1 274.7ZM602.3 265.7L604.3 265.3 606.8 269.9 604.8 270.3ZM604.8 265.2L606.8 264.8 609.3 269.4 607.3 269.8ZM609.7 264.2L611.7 263.8 614.2 268.4 612.2 268.8ZM426.6 309.3L429.9 308.6 432.7 314.7 429.4 315.5ZM443.1 305.8L446.3 305.1 449.1 311.1 445.9 311.8ZM525.9 288.1L528.4 287.5 531.1 292.8 528.6 293.4ZM592.4 273.8L594.5 273.4 597.1 278.1 595 278.6ZM612.6 269.5L614.6 269.1 617.1 273.7 615.1 274.1ZM370.9 329.7L374.8 328.8 377.6 335.5 373.7 336.4ZM389.9 325.4L393.6 324.6 396.5 331.1 392.8 331.9ZM446.3 312.8L449.5 312.1 452.3 318.1 449.1 318.8ZM458.2 310.1L461.3 309.4 464.1 315.3 461 316.1ZM509.2 298.7L511.9 298.1 514.6 303.6 511.9 304.2ZM595.4 279.4L597.5 278.9 600 283.7 598 284.2ZM598 278.8L600.1 278.3 602.6 283.1 600.6 283.6ZM600.6 278.2L602.6 277.8 605.2 282.5 603.1 283ZM359.3 341L363.3 340 366.2 346.9 362.1 347.9ZM364.3 339.8L368.3 338.9 371.1 345.7 367.2 346.6ZM437.3 322.7L440.6 321.9 443.4 328.1 440.1 328.9ZM445.5 320.8L448.7 320 451.5 326.1 448.3 326.9ZM484.2 311.7L487.1 311 489.8 316.8 486.9 317.5ZM579.6 289.4L581.8 288.8 584.4 293.8 582.3 294.3ZM608.6 282.6L610.6 282.1 613.1 286.8 611.1 287.3ZM396.5 340.7L400.3 339.8 403.1 346.4 399.4 347.3ZM436.3 331L439.7 330.1 442.5 336.4 439.2 337.2ZM476.2 321.2L479.2 320.5 482 326.4 479 327.1ZM480 320.3L482.9 319.5 485.7 325.4 482.8 326.2ZM512.1 312.4L514.9 311.7 517.6 317.3 514.9 318ZM515.5 311.6L518.2 310.9 521 316.5 518.3 317.2ZM522.2 309.9L524.9 309.3 527.6 314.8 525 315.5ZM525.5 309.1L528.1 308.5 530.9 314 528.3 314.6ZM604 289.9L606 289.4 608.6 294.2 606.5 294.8ZM609.1 288.7L611.1 288.2 613.6 293 611.6 293.5ZM621.4 285.7L623.3 285.2 625.9 289.8 624 290.3ZM471.8 330L474.9 329.3 477.7 335.3 474.7 336.1ZM518.7 318.1L521.4 317.4 524.2 323 521.5 323.7ZM557 308.3L559.4 307.7 562.1 313 559.7 313.6ZM621.9 291.7L623.9 291.2 626.4 295.9 624.5 296.4ZM624.4 291.1L626.3 290.6 628.9 295.3 626.9 295.8ZM443 345.6L446.3 344.7 449.2 351.1 445.8 352ZM515.1 326.4L517.9 325.7 520.6 331.4 517.9 332.1ZM518.5 325.5L521.3 324.8 524 330.4 521.3 331.2ZM525.3 323.7L527.9 323 530.7 328.6 528.1 329.3ZM563.1 313.7L565.5 313 568.2 318.3 565.8 318.9ZM566.1 312.9L568.4 312.2 571.1 317.5 568.8 318.1ZM588.8 306.8L591 306.2 593.6 311.3 591.5 311.9ZM622.5 297.9L624.4 297.3 627 302.1 625.1 302.6ZM629.7 295.9L631.7 295.4 634.2 300.1 632.3 300.6ZM367.7 374.8L371.8 373.7 374.7 380.8 370.6 382ZM429.2 357.8L432.7 356.8 435.6 363.4 432.1 364.3ZM482.2 343.1L485.3 342.2 488.1 348.3 485.1 349.2ZM541.6 326.6L544.1 325.9 546.9 331.4 544.3 332.2ZM572.1 318.2L574.4 317.5 577.2 322.8 574.8 323.4ZM625.5 303.4L627.4 302.8 630 307.6 628.1 308.2ZM481.7 351.2L484.8 350.4 487.7 356.5 484.6 357.4ZM518.2 340.7L520.9 340 523.8 345.7 521 346.6ZM528.4 337.8L531.1 337 533.9 342.7 531.2 343.5ZM531.7 336.8L534.4 336.1 537.2 341.7 534.5 342.5ZM592.2 319.4L594.4 318.8 597.1 323.9 594.9 324.5ZM595 318.6L597.2 318 599.8 323.1 597.7 323.7ZM610.9 314L613 313.4 615.6 318.4 613.6 319ZM404.1 382.7L407.9 381.5 410.8 388.5 407.1 389.6ZM440.3 371.8L443.8 370.8 446.7 377.4 443.3 378.4ZM488.9 357.3L491.9 356.4 494.8 362.5 491.8 363.4ZM492.7 356.1L495.7 355.2 498.5 361.3 495.6 362.3ZM535 343.5L537.7 342.7 540.5 348.4 537.8 349.2ZM541.6 341.5L544.2 340.7 547 346.3 544.4 347.1ZM551.2 338.6L553.7 337.9 556.5 343.4 554 344.2ZM584.2 328.7L586.5 328 589.2 333.3 586.9 334ZM616.6 319L618.6 318.4 621.3 323.4 619.2 324ZM443.7 379.5L447.2 378.4 450.1 385.1 446.7 386.2ZM510.7 358.7L513.6 357.8 516.4 363.8 513.6 364.7ZM514.3 357.6L517.1 356.7 520 362.7 517.1 363.6ZM517.8 356.5L520.6 355.6 523.5 361.5 520.7 362.4ZM531.6 352.2L534.3 351.4 537.1 357.1 534.4 358ZM548.1 347.1L550.6 346.3 553.4 351.9 550.9 352.7ZM572.8 339.4L575.2 338.6 578 344 575.6 344.8ZM590.2 334L592.4 333.3 595.2 338.5 592.9 339.2ZM598.5 331.4L600.7 330.7 603.4 335.9 601.2 336.6ZM617.1 325.6L619.2 325 621.8 330 619.8 330.6ZM376.4 410.1L380.5 408.8 383.6 416.1 379.5 417.5ZM429.5 393L433.1 391.8 436.1 398.6 432.5 399.8ZM531.5 360.1L534.2 359.2 537.1 365 534.4 365.9ZM544.9 355.7L547.5 354.9 550.3 360.6 547.7 361.5ZM596.2 339.2L598.4 338.5 601.1 343.7 598.9 344.5ZM598.9 338.3L601.1 337.6 603.9 342.8 601.7 343.5ZM615 333.1L617.1 332.4 619.8 337.5 617.7 338.2ZM617.6 332.3L619.7 331.6 622.4 336.7 620.3 337.3ZM385.1 417L389.2 415.6 392.2 423 388.2 424.4ZM441.9 398L445.5 396.8 448.5 403.6 445 404.8ZM502.8 377.6L505.8 376.6 508.7 382.8 505.7 383.9ZM557.8 359.2L560.4 358.4 563.2 364 560.7 364.9ZM596.6 346.3L598.8 345.5 601.6 350.8 599.3 351.6ZM625.9 336.5L627.9 335.8 630.6 340.8 628.6 341.5ZM628.4 335.6L630.4 334.9 633.1 339.9 631.1 340.6ZM638.3 332.3L640.2 331.7 642.9 336.6 641 337.2ZM436.5 409L440.1 407.8 443.2 414.7 439.6 416ZM475.1 395.7L478.3 394.5 481.3 401.1 478.1 402.3ZM483.1 392.9L486.3 391.8 489.3 398.3 486.1 399.4ZM487.1 391.5L490.2 390.4 493.2 396.9 490.1 398ZM491 390.2L494.1 389.1 497.1 395.5 494 396.6ZM513.6 382.3L516.5 381.3 519.4 387.5 516.5 388.5ZM517.2 381.1L520.1 380.1 523 386.2 520.2 387.2ZM527.9 377.4L530.7 376.4 533.6 382.4 530.8 383.4ZM570.5 362.6L572.9 361.8 575.8 367.4 573.3 368.2ZM626.5 343.2L628.5 342.5 631.2 347.6 629.2 348.3ZM646.2 336.4L648.1 335.7 650.8 340.6 648.9 341.3ZM376.7 439.9L380.9 438.4 384 446 379.8 447.5ZM382 438L386.1 436.5 389.2 444.1 385.1 445.6ZM407.2 428.9L411.1 427.5 414.2 434.8 410.3 436.3ZM435.6 418.8L439.2 417.5 442.3 424.5 438.6 425.8ZM440.1 417.1L443.7 415.8 446.7 422.8 443.2 424.2ZM494.5 397.6L497.5 396.5 500.5 403 497.4 404.1ZM513.4 390.8L516.3 389.8 519.2 396 516.3 397.1ZM520.6 388.2L523.5 387.2 526.5 393.4 523.6 394.4ZM538.2 381.9L540.9 381 543.8 387 541.1 388ZM603 358.7L605.2 357.9 608 363.3 605.8 364.1ZM619.3 352.8L621.4 352.1 624.1 357.3 622 358.1ZM644.5 343.8L646.4 343.1 649.1 348.1 647.2 348.8ZM646.9 342.9L648.8 342.2 651.5 347.2 649.6 347.9Z" fill="#ca8977"/><path d="M309 219.9L313 219.5 315.6 225.7 311.5 226.1ZM333.6 217.8L337.4 217.4 340 223.4 336.2 223.8ZM412.1 211L415.3 210.8 417.8 216.2 414.6 216.5ZM480.9 205.1L483.6 204.9 486 209.8 483.4 210.1ZM518.6 201.9L520.9 201.7 523.3 206.4 521 206.6ZM312 227.1L316 226.7 318.6 232.9 314.5 233.3ZM317 226.6L321 226.2 323.6 232.4 319.6 232.8ZM326.9 225.7L330.8 225.3 333.4 231.4 329.5 231.8ZM493.6 210L496.1 209.7 498.6 214.6 496.1 214.9ZM530.2 206.5L532.5 206.3 534.9 210.9 532.6 211.2ZM557.9 203.9L560 203.7 562.4 208.2 560.3 208.4ZM581.2 207L583.2 206.8 585.6 211.1 583.6 211.3ZM365.9 236.3L369.5 235.9 372.1 241.8 368.5 242.2ZM300.3 251.4L304.5 250.9 307.2 257.4 302.9 257.9ZM310.8 250.1L314.9 249.7 317.6 256 313.4 256.6ZM386.7 241L390.2 240.6 392.8 246.5 389.3 246.9ZM395.3 240L398.7 239.6 401.3 245.4 397.9 245.8ZM479.1 230L481.8 229.6 484.4 234.8 481.7 235.1ZM468.2 237.8L471 237.4 473.6 242.7 470.7 243.1ZM332.2 263L336.2 262.5 338.9 268.9 334.9 269.4ZM342.1 261.7L346 261.1 348.7 267.4 344.8 268ZM434 249L437.1 248.6 439.7 254.2 436.6 254.7ZM437.9 248.5L440.9 248.1 443.6 253.6 440.5 254.1ZM441.7 248L444.8 247.6 447.4 253.1 444.3 253.5ZM471.2 243.9L474 243.5 476.6 248.8 473.7 249.3ZM595.1 232.4L597 232.1 599.5 236.5 597.5 236.8ZM564.7 260.8L566.9 260.4 569.4 265.3 567.2 265.7ZM415.9 295.9L419.3 295.3 422.1 301.3 418.7 302ZM372.4 320.9L376.3 320 379.1 326.6 375.3 327.5ZM377.2 319.8L381 319 383.9 325.6 380.1 326.4ZM430.8 308.4L434.1 307.7 436.9 313.8 433.5 314.5ZM462.8 301.6L465.8 300.9 468.6 306.7 465.5 307.4ZM602.7 271.6L604.7 271.2 607.2 275.9 605.2 276.3ZM603.1 277.7L605.1 277.2 607.7 281.9 605.7 282.4ZM611.1 282L613.1 281.5 615.6 286.2 613.6 286.7ZM448.8 327.9L452 327.1 454.8 333.3 451.6 334.1ZM571.5 297.9L573.7 297.3 576.4 302.4 574.1 303ZM582.7 295.1L584.9 294.6 587.5 299.6 585.3 300.1ZM460.1 333L463.3 332.2 466.1 338.4 462.9 339.2ZM522.1 317.2L524.7 316.5 527.5 322.1 524.8 322.8ZM565.9 306L568.2 305.4 570.9 310.6 568.6 311.2ZM619.5 292.3L621.5 291.8 624 296.6 622.1 297.1ZM535.1 328.4L537.7 327.7 540.5 333.3 537.9 334ZM511.2 342.8L514 342 516.8 347.8 514 348.6ZM514.7 341.7L517.5 340.9 520.3 346.8 517.5 347.6ZM535.1 335.9L537.7 335.1 540.5 340.8 537.9 341.5ZM554.2 330.4L556.7 329.6 559.5 335.1 557 335.8ZM557.3 329.5L559.8 328.8 562.5 334.2 560.1 334.9ZM589.5 320.2L591.7 319.6 594.4 324.7 592.2 325.4ZM528.3 345.5L531 344.7 533.8 350.4 531.1 351.2ZM531.7 344.5L534.3 343.7 537.2 349.4 534.5 350.2ZM528.2 353.2L530.9 352.4 533.8 358.2 531.1 359.1ZM538.3 350.1L540.9 349.3 543.8 355 541.1 355.9ZM639.4 318.7L641.3 318.1 643.9 322.9 642 323.5ZM371.3 411.8L375.4 410.4 378.4 417.8 374.3 419.2ZM381.6 408.4L385.6 407.1 388.7 414.4 384.6 415.8ZM396.6 403.6L400.5 402.3 403.5 409.5 399.6 410.8ZM607.1 335.7L609.2 335 611.9 340.1 609.8 340.8ZM609.8 334.8L611.9 334.1 614.6 339.2 612.5 340ZM625.3 329.8L627.3 329.1 630 334.1 628 334.8ZM390.2 415.3L394.2 414 397.2 421.3 393.2 422.7ZM409.8 408.7L413.6 407.5 416.6 414.6 412.8 415.9ZM517.4 372.7L520.3 371.8 523.2 377.8 520.3 378.8ZM612.9 340.8L615 340.1 617.8 345.2 615.6 346ZM635.9 333.1L637.8 332.5 640.5 337.4 638.5 338.1ZM643.1 330.7L645 330.1 647.7 334.9 645.8 335.6ZM645.5 329.9L647.4 329.3 650 334.1 648.1 334.8ZM602.6 351.5L604.8 350.7 607.5 356 605.3 356.8ZM387.1 436.1L391.2 434.7 394.3 442.2 390.2 443.7ZM397.3 432.5L401.3 431 404.4 438.5 400.4 439.9ZM608.5 356.7L610.7 355.9 613.5 361.2 611.3 362ZM627.1 350L629.1 349.3 631.9 354.4 629.8 355.2ZM629.6 349.1L631.7 348.4 634.4 353.5 632.4 354.3ZM637.2 346.4L639.2 345.7 641.9 350.8 639.9 351.5ZM642.1 344.7L644 344 646.7 349 644.8 349.7Z" fill="#da9883"/><path d="M323.9 218.6L327.8 218.3 330.4 224.3 326.5 224.7ZM460.5 206.9L463.3 206.6 465.8 211.7 463 212ZM544.3 199.7L546.5 199.5 548.9 204 546.7 204.2ZM557.8 198.5L559.9 198.4 562.3 202.8 560.2 202.9ZM563 198.1L565.1 197.9 567.5 202.3 565.4 202.5ZM487.1 210.6L489.7 210.3 492.2 215.3 489.6 215.5ZM541.5 205.5L543.8 205.2 546.2 209.8 543.9 210ZM547.1 204.9L549.3 204.7 551.7 209.2 549.5 209.5ZM549.8 204.7L552 204.5 554.4 209 552.2 209.2ZM552.5 204.4L554.7 204.2 557.1 208.7 554.9 208.9ZM315 234.3L319 233.9 321.6 240.1 317.6 240.6ZM499.7 215.4L502.2 215.1 504.7 220 502.1 220.3ZM502.8 215L505.3 214.8 507.8 219.6 505.3 219.9ZM547.1 210.5L549.3 210.3 551.7 214.8 549.5 215.1ZM312.9 242.2L317 241.7 319.6 248 315.5 248.5ZM374.9 235.3L378.4 234.9 381 240.7 377.5 241.1ZM492.9 222.1L495.5 221.9 498 226.8 495.4 227.2ZM518.1 219.3L520.5 219.1 523 223.9 520.5 224.2ZM524.1 218.7L526.5 218.4 528.9 223.2 526.6 223.5ZM541.5 216.7L543.8 216.5 546.2 221.1 544 221.4ZM532.9 223.5L535.2 223.3 537.7 228 535.3 228.3ZM566.3 219.5L568.4 219.3 570.8 223.8 568.7 224.1ZM576.7 218.3L578.7 218 581.1 222.5 579.1 222.7ZM324.1 256.3L328.1 255.8 330.8 262.1 326.8 262.7ZM475.2 236.9L478 236.5 480.5 241.7 477.8 242.1ZM538.7 228.7L541 228.4 543.4 233.2 541.1 233.5ZM544.4 228L546.7 227.7 549.1 232.4 546.9 232.7ZM552.8 226.9L555 226.6 557.5 231.2 555.3 231.5ZM351.8 260.4L355.6 259.8 358.3 266 354.5 266.6ZM504.9 239.3L507.5 238.9 510 244 507.5 244.4ZM529.8 235.9L532.2 235.5 534.7 240.4 532.3 240.7ZM532.8 235.5L535.1 235.1 537.6 240 535.3 240.3ZM538.6 234.6L541 234.3 543.5 239.1 541.1 239.5ZM566.6 230.8L568.7 230.5 571.2 235.1 569 235.4ZM574.5 229.7L576.6 229.4 579 234 577 234.3ZM340.3 269.8L344.3 269.2 347 275.5 343 276.2ZM517.4 243.8L519.9 243.4 522.4 248.4 519.9 248.8ZM544.4 239.8L546.7 239.5 549.2 244.3 547 244.6ZM547.3 239.4L549.6 239.1 552.1 243.8 549.8 244.2ZM569.4 236.2L571.6 235.8 574 240.5 571.9 240.8ZM572.1 235.8L574.2 235.5 576.7 240 574.6 240.4ZM592.6 232.8L594.6 232.5 597 236.9 595 237.2ZM312.7 282L316.9 281.3 319.6 288 315.4 288.7ZM510.9 251.1L513.4 250.7 516 255.8 513.4 256.2ZM523.5 249.1L525.9 248.8 528.5 253.8 526 254.2ZM526.6 248.7L529 248.3 531.5 253.3 529.1 253.7ZM597.9 237.6L599.9 237.2 602.3 241.7 600.3 242ZM419.1 272.7L422.4 272.2 425.1 278.1 421.8 278.6ZM544.5 252L546.8 251.6 549.4 256.5 547 256.9ZM558.8 249.7L561 249.3 563.6 254.1 561.3 254.5ZM561.6 249.2L563.8 248.8 566.3 253.6 564.1 254ZM434.4 277.5L437.6 276.9 440.3 282.7 437.1 283.3ZM570 253.8L572.2 253.4 574.7 258.2 572.5 258.6ZM529.3 273.9L531.8 273.4 534.4 278.6 531.9 279.1ZM553.4 269.3L555.7 268.8 558.3 273.8 556 274.2ZM556.3 268.7L558.6 268.2 561.2 273.2 558.9 273.7ZM567.6 266.5L569.9 266.1 572.4 270.9 570.2 271.4ZM575.9 264.9L578.1 264.5 580.6 269.3 578.4 269.7ZM419.1 303L422.5 302.3 425.3 308.5 421.9 309.2ZM423.4 302.2L426.7 301.5 429.5 307.6 426.1 308.3ZM559.4 280.9L561.7 280.4 564.4 285.4 562 285.9ZM565.2 279.7L567.5 279.2 570 284.2 567.8 284.7ZM573.6 277.9L575.8 277.4 578.4 282.3 576.2 282.8ZM488.2 303.4L491.1 302.7 493.8 308.4 491 309.1ZM498.9 301L501.7 300.4 504.4 306 501.6 306.6ZM553.7 288.7L556 288.2 558.7 293.3 556.3 293.9ZM565.4 286.1L567.6 285.6 570.3 290.6 568 291.2ZM610.6 276L612.6 275.5 615.1 280.2 613.2 280.6ZM495 309.2L497.8 308.5 500.6 314.2 497.8 314.9ZM505.5 306.7L508.3 306.1 511 311.7 508.3 312.3ZM571.2 291.3L573.5 290.8 576.1 295.8 573.9 296.4ZM357.5 350.2L361.6 349.2 364.5 356.2 360.4 357.2ZM367.6 347.8L371.6 346.8 374.5 353.7 370.5 354.7ZM501.7 315L504.5 314.3 507.3 319.9 504.5 320.7ZM508.7 313.2L511.5 312.6 514.2 318.2 511.5 318.9ZM559.8 300.7L562.2 300.2 564.9 305.3 562.5 305.9ZM562.8 300L565.1 299.4 567.8 304.6 565.4 305.2ZM598.8 291.2L600.9 290.7 603.4 295.5 601.4 296.1ZM452 335.1L455.3 334.3 458.1 340.5 454.9 341.3ZM490.6 325.3L493.5 324.5 496.3 330.4 493.4 331.1ZM497.9 323.4L500.7 322.7 503.5 328.5 500.6 329.2ZM508.4 320.7L511.2 320 514 325.7 511.2 326.4ZM511.9 319.8L514.6 319.1 517.4 324.8 514.7 325.5ZM596.5 298.2L598.6 297.7 601.3 302.6 599.1 303.1ZM601.8 296.9L603.9 296.3 606.5 301.2 604.4 301.8ZM407.9 355L411.5 354 414.4 360.7 410.8 361.7ZM504.7 329.2L507.5 328.5 510.3 334.2 507.5 335ZM547.9 317.7L550.4 317 553.1 322.4 550.6 323.1ZM596.9 304.7L599 304.1 601.7 309.1 599.6 309.6ZM377.8 372L381.7 370.9 384.7 377.9 380.7 379.1ZM544.8 325.8L547.3 325.1 550 330.5 547.5 331.3ZM594.6 311.9L596.8 311.3 599.4 316.4 597.3 317ZM366 384.6L370.1 383.4 373.1 390.6 369 391.9ZM616.1 312.5L618.1 312 620.7 316.9 618.7 317.5ZM618.6 311.8L620.6 311.2 623.2 316.1 621.2 316.7ZM621.1 311.1L623.1 310.5 625.7 315.4 623.7 316ZM359 396.2L363.2 394.9 366.2 402.3 362 403.6ZM369.4 393L373.6 391.8 376.5 399.1 372.4 400.3ZM481.2 359.6L484.3 358.6 487.2 364.8 484.1 365.8ZM619.1 318.3L621.1 317.7 623.8 322.6 621.8 323.2ZM367.7 403.1L371.9 401.9 374.9 409.2 370.8 410.5ZM496 363.3L499 362.3 501.9 368.5 498.9 369.4ZM415.7 397.4L419.5 396.2 422.5 403.2 418.8 404.4ZM484.1 375.3L487.2 374.3 490.2 380.7 487.1 381.7ZM510.4 366.9L513.3 365.9 516.2 372 513.3 372.9ZM632.8 327.4L634.7 326.8 637.4 331.7 635.4 332.3ZM405 410.3L408.8 409.1 411.9 416.2 408 417.6ZM483.6 384L486.8 383 489.7 389.4 486.6 390.5ZM561 358.2L563.5 357.3 566.3 363 563.8 363.8ZM564.1 357.1L566.6 356.3 569.4 361.9 566.9 362.8ZM413.3 417.1L417.1 415.7 420.2 422.9 416.4 424.3ZM418.1 415.4L421.8 414.1 424.9 421.2 421.1 422.6ZM641.4 338L643.3 337.4 646 342.3 644.1 343ZM412.1 427.2L415.9 425.8 419 433.1 415.2 434.5ZM462 409.3L465.3 408.1 468.4 414.8 465 416.1ZM573.8 369.2L576.2 368.3 579.1 373.9 576.7 374.8ZM621.9 351.9L624 351.2 626.7 356.3 624.7 357.1ZM624.5 351L626.6 350.2 629.3 355.4 627.3 356.1Z" fill="#e1a98d"/><path d="M328.8 218.2L332.7 217.8 335.2 223.9 331.4 224.2ZM538.7 211.3L541 211.1 543.4 215.7 541.1 216ZM377.9 242.1L381.5 241.7 384.1 247.6 380.5 248ZM382.3 241.6L385.8 241.2 388.5 247 385 247.5ZM573.2 265.4L575.3 265 577.9 269.8 575.7 270.3ZM597.6 272.7L599.7 272.3 602.2 277 600.2 277.5ZM600.2 272.2L602.2 271.8 604.7 276.4 602.7 276.9ZM605.2 271.1L607.2 270.7 609.7 275.3 607.7 275.8ZM486.9 326.2L489.9 325.4 492.7 331.3 489.7 332.1ZM511.7 327.3L514.4 326.6 517.2 332.3 514.5 333.1ZM521.9 324.6L524.6 323.9 527.4 329.5 524.7 330.3ZM518.4 333.1L521.1 332.3 523.9 338 521.2 338.8ZM521.8 332.1L524.5 331.4 527.3 337.1 524.6 337.8ZM525.2 331.2L527.8 330.4 530.6 336.1 528 336.9ZM521.6 339.8L524.4 339 527.2 344.7 524.4 345.5ZM525 338.8L527.7 338 530.5 343.7 527.8 344.5ZM364.2 394.6L368.4 393.3 371.4 400.7 367.2 401.9ZM362.5 404.8L366.7 403.5 369.7 410.9 365.5 412.2ZM624.7 323.2L626.7 322.6 629.4 327.5 627.4 328.2ZM366 413.5L370.2 412.1 373.2 419.6 369 421ZM386.6 406.8L390.6 405.5 393.7 412.8 389.7 414.1ZM644.8 323.5L646.7 322.9 649.3 327.7 647.4 328.3ZM395.2 413.6L399.1 412.3 402.2 419.6 398.2 420.9ZM403.6 420.4L407.5 419.1 410.6 426.3 406.7 427.7ZM426.3 422.1L430.1 420.7 433.1 427.9 429.4 429.2Z" fill="#e2a08a"/><path d="M338.4 217.4L342.2 217 344.7 223 340.9 223.3ZM467.5 206.3L470.2 206 472.7 211.1 469.9 211.3ZM533.1 200.7L535.4 200.5 537.8 205 535.5 205.2ZM549.8 199.2L551.9 199 554.3 203.5 552.1 203.7ZM565.6 197.9L567.7 197.7 570 202 568 202.2ZM456.4 213.5L459.2 213.2 461.7 218.4 458.9 218.6ZM506.2 208.8L508.7 208.5 511.1 213.4 508.7 213.6ZM515.4 207.9L517.8 207.7 520.2 212.4 517.8 212.7ZM304.7 235.4L308.8 234.9 311.4 241.2 307.3 241.7ZM393.5 226.2L396.9 225.9 399.4 231.6 396.1 231.9ZM422 223.3L425.1 223 427.6 228.5 424.5 228.8ZM425.9 222.9L428.9 222.6 431.5 228 428.4 228.4ZM452.1 220.2L455 219.9 457.5 225.2 454.7 225.5ZM466.3 218.8L469.1 218.5 471.6 223.6 468.9 223.9ZM473.3 218.1L476 217.8 478.5 222.9 475.8 223.2ZM480 217.4L482.7 217.1 485.2 222.1 482.5 222.4ZM535.9 211.6L538.1 211.4 540.6 216 538.3 216.3ZM563.3 208.8L565.4 208.6 567.8 213.1 565.7 213.3ZM568.5 208.3L570.6 208.1 573 212.5 570.9 212.7ZM297.2 243.9L301.5 243.4 304.1 249.8 299.9 250.4ZM392.3 233.3L395.7 233 398.3 238.7 394.9 239.1ZM400.7 232.4L404 232 406.6 237.7 403.3 238.1ZM417 230.6L420.2 230.2 422.8 235.8 419.6 236.1ZM502.5 221.1L505.1 220.8 507.6 225.7 505 226ZM549.9 215.8L552.1 215.6 554.6 220.1 552.4 220.4ZM566.1 214L568.2 213.8 570.6 218.2 568.5 218.5ZM336 247.1L339.9 246.7 342.5 252.9 338.6 253.4ZM369 243.2L372.6 242.7 375.2 248.7 371.6 249.2ZM399.5 239.5L402.9 239.1 405.5 244.8 402.1 245.3ZM403.7 239L407 238.6 409.6 244.3 406.3 244.7ZM407.9 238.5L411.1 238.1 413.7 243.8 410.5 244.2ZM482.5 229.6L485.2 229.2 487.8 234.4 485.1 234.7ZM505.4 226.8L508 226.5 510.5 231.5 508 231.8ZM527 224.2L529.3 224 531.8 228.7 529.4 229ZM558.2 220.5L560.4 220.2 562.8 224.8 560.7 225.1ZM563.6 219.9L565.7 219.6 568.1 224.1 566 224.4ZM319 257L323.1 256.4 325.7 262.8 321.7 263.4ZM362.9 251.3L366.5 250.8 369.2 256.9 365.5 257.4ZM478.6 236.4L481.4 236.1 484 241.3 481.2 241.6ZM498.7 233.8L501.3 233.5 503.9 238.6 501.3 238.9ZM505.2 233L507.7 232.7 510.3 237.7 507.7 238ZM526.9 230.2L529.3 229.9 531.8 234.7 529.4 235.1ZM532.8 229.5L535.2 229.2 537.6 233.9 535.3 234.3ZM541.5 228.3L543.8 228 546.3 232.8 544 233.1ZM547.2 227.6L549.5 227.3 552 232 549.7 232.3ZM558.3 226.2L560.5 225.9 563 230.5 560.8 230.8ZM356.6 259.7L360.3 259.2 363 265.4 359.2 265.9ZM365.9 258.4L369.6 257.9 372.3 264 368.6 264.5ZM370.5 257.8L374.2 257.3 376.8 263.3 373.2 263.9ZM375.1 257.1L378.7 256.7 381.4 262.7 377.7 263.2ZM379.6 256.5L383.2 256 385.8 262 382.3 262.6ZM384 255.9L387.6 255.4 390.2 261.4 386.7 261.9ZM481.6 242.5L484.4 242.1 486.9 247.3 484.2 247.7ZM501.7 239.7L504.3 239.4 506.8 244.4 504.2 244.8ZM514.5 238L517 237.6 519.5 242.6 517 243ZM541.5 234.2L543.8 233.9 546.3 238.7 544 239ZM544.4 233.9L546.7 233.5 549.2 238.3 546.9 238.6ZM563.9 231.2L566.1 230.9 568.5 235.5 566.4 235.8ZM579.7 229L581.7 228.7 584.2 233.2 582.1 233.5ZM378.2 264.2L381.8 263.7 384.5 269.7 380.9 270.3ZM387.1 262.9L390.7 262.4 393.3 268.4 389.8 268.9ZM412.9 259.1L416.2 258.6 418.8 264.4 415.5 264.9ZM484.6 248.6L487.4 248.2 489.9 253.4 487.2 253.9ZM498.1 246.6L500.7 246.2 503.3 251.4 500.7 251.8ZM507.9 245.2L510.4 244.8 513 249.9 510.4 250.3ZM535.7 241.1L538 240.8 540.5 245.6 538.2 246ZM550.2 239L552.4 238.7 554.9 243.4 552.7 243.8ZM566.8 236.5L568.9 236.2 571.4 240.9 569.2 241.2ZM580 234.6L582 234.3 584.5 238.8 582.4 239.2ZM590.1 233.1L592.1 232.8 594.5 237.3 592.5 237.6ZM333.4 278.8L337.5 278.1 340.2 284.6 336.1 285.3ZM348.4 276.4L352.3 275.8 355 282.2 351.1 282.8ZM358 274.9L361.9 274.3 364.6 280.6 360.7 281.3ZM362.8 274.2L366.6 273.6 369.3 279.9 365.5 280.5ZM367.5 273.5L371.2 272.9 373.9 279.1 370.2 279.7ZM385.8 270.6L389.4 270 392.1 276.1 388.5 276.7ZM507.6 251.6L510.2 251.2 512.8 256.3 510.2 256.8ZM520.4 249.6L522.9 249.2 525.4 254.3 522.9 254.7ZM538.6 246.8L541 246.4 543.5 251.3 541.1 251.7ZM555.9 244.1L558.1 243.7 560.6 248.5 558.4 248.9ZM575 241.1L577.1 240.8 579.5 245.4 577.4 245.8ZM585.4 239.5L587.4 239.2 589.9 243.7 587.8 244.1ZM595.4 237.9L597.4 237.6 599.8 242.1 597.9 242.4ZM388.9 277.7L392.5 277.1 395.2 283.2 391.6 283.9ZM423.2 272L426.5 271.5 429.1 277.4 425.9 277.9ZM431.3 270.7L434.5 270.2 437.2 276 434 276.5ZM465.9 265L468.8 264.5 471.4 270 468.5 270.5ZM513.9 257.1L516.4 256.7 519 261.8 516.4 262.2ZM572.5 247.4L574.7 247 577.1 251.7 575 252.1ZM598.3 243.1L600.2 242.8 602.7 247.3 600.7 247.6ZM373.8 288L377.5 287.4 380.3 293.7 376.5 294.4ZM422.2 279.6L425.5 279 428.2 284.9 424.9 285.5ZM483.3 268.9L486.1 268.4 488.8 273.9 486 274.4ZM510.4 264.2L513 263.7 515.6 269 513 269.4ZM561.7 255.2L564 254.8 566.5 259.7 564.3 260.1ZM575.4 252.8L577.6 252.5 580.1 257.2 577.9 257.6ZM603.6 247.9L605.5 247.6 608 252.1 606 252.4ZM513.4 270.3L516 269.8 518.7 275 516.1 275.5ZM526.2 267.9L528.7 267.5 531.3 272.6 528.8 273.1ZM532.4 266.8L534.9 266.3 537.5 271.4 535 271.9ZM556.2 262.4L558.5 262 561 266.9 558.8 267.3ZM384.8 301.9L388.5 301.2 391.3 307.6 387.6 308.3ZM394 300.2L397.6 299.5 400.3 305.7 396.7 306.5ZM486 282.3L488.8 281.8 491.5 287.3 488.6 287.9ZM509.9 277.7L512.6 277.2 515.2 282.5 512.6 283ZM519.7 275.8L522.3 275.3 524.9 280.5 522.4 281ZM601.9 259.8L603.9 259.5 606.4 264 604.4 264.4ZM339.2 319.3L343.3 318.5 346.1 325.3 342 326.2ZM392.6 308.4L396.3 307.7 399.1 314 395.4 314.8ZM406.1 305.7L409.6 305 412.4 311.2 408.9 312ZM573.4 271.6L575.6 271.2 578.1 276 576 276.5ZM337.2 328.4L341.4 327.5 344.2 334.4 340.1 335.3ZM395.9 315.9L399.5 315.1 402.3 321.5 398.7 322.3ZM413.7 312L417.2 311.3 420 317.5 416.5 318.3ZM422.3 310.2L425.7 309.5 428.5 315.6 425.1 316.4ZM466.6 300.7L469.6 300.1 472.3 305.9 469.3 306.6ZM474.1 299.1L477 298.5 479.8 304.2 476.8 304.9ZM485.1 296.8L487.9 296.2 490.7 301.8 487.8 302.5ZM495.7 294.5L498.5 293.9 501.2 299.5 498.4 300.1ZM516.1 290.2L518.8 289.6 521.4 295 518.8 295.6ZM535.4 286L537.9 285.5 540.5 290.7 538 291.3ZM547.6 283.4L550 282.9 552.7 288 550.3 288.6ZM553.6 282.1L555.9 281.6 558.6 286.7 556.2 287.2ZM615.1 269L617 268.6 619.5 273.2 617.6 273.6ZM412.6 320.3L416.1 319.5 418.9 325.9 415.4 326.7ZM417 319.3L420.4 318.6 423.2 324.9 419.8 325.7ZM425.6 317.4L429 316.7 431.8 322.9 428.4 323.7ZM477.3 305.8L480.2 305.2 483 310.9 480 311.6ZM484.6 304.2L487.5 303.5 490.3 309.3 487.4 309.9ZM495.4 301.8L498.2 301.2 500.9 306.8 498.1 307.4ZM522.5 295.7L525.1 295.1 527.8 300.5 525.2 301.1ZM568.2 285.5L570.5 285 573.1 290 570.8 290.5ZM571 284.8L573.3 284.3 575.9 289.3 573.6 289.8ZM579.4 283L581.6 282.5 584.1 287.4 582 287.9ZM473 314.3L476 313.6 478.8 319.5 475.8 320.2ZM491.4 310L494.3 309.3 497 315.1 494.2 315.8ZM512.4 305.1L515.1 304.5 517.8 310 515.1 310.7ZM525.7 302L528.2 301.4 531 306.8 528.4 307.4ZM532.1 300.5L534.7 299.9 537.3 305.3 534.8 305.9ZM541.6 298.3L544 297.7 546.7 303 544.2 303.6ZM547.7 296.8L550.2 296.3 552.8 301.5 550.4 302.1ZM550.8 296.1L553.2 295.6 555.8 300.8 553.4 301.3ZM574.1 290.7L576.3 290.1 578.9 295.1 576.7 295.7ZM377.5 345.4L381.4 344.4 384.3 351.2 380.4 352.2ZM487.4 318.5L490.3 317.8 493.1 323.6 490.2 324.3ZM505.2 314.1L508 313.4 510.8 319.1 508 319.8ZM541.6 305.2L544.1 304.6 546.8 309.9 544.3 310.6ZM550.8 302.9L553.3 302.3 555.9 307.6 553.5 308.2ZM568.6 298.6L570.9 298 573.5 303.1 571.2 303.7ZM593.5 292.5L595.6 292 598.2 296.9 596.1 297.4ZM601.4 290.6L603.4 290.1 606 294.9 604 295.4ZM360.9 358.4L365 357.3 367.9 364.3 363.8 365.4ZM371 355.8L375 354.8 377.9 361.7 373.9 362.7ZM501.4 322.5L504.2 321.8 507 327.5 504.2 328.3ZM535.2 313.9L537.8 313.2 540.5 318.7 537.9 319.3ZM547.8 310.6L550.3 310 553 315.4 550.5 316ZM560 307.5L562.3 306.9 565 312.2 562.7 312.8ZM588.5 300.3L590.6 299.7 593.3 304.7 591.1 305.3ZM591.2 299.6L593.3 299 596 304 593.8 304.6ZM604.4 296.2L606.4 295.7 609 300.5 607 301.1ZM609.5 294.9L611.5 294.4 614.1 299.2 612.1 299.7ZM359.1 367.9L363.3 366.8 366.2 373.9 362.1 375.1ZM369.4 365.2L373.4 364.1 376.3 371.2 372.3 372.3ZM398.6 357.4L402.3 356.4 405.2 363.2 401.5 364.2ZM403.2 356.2L406.9 355.2 409.8 361.9 406.2 362.9ZM412.4 353.8L416 352.8 418.9 359.4 415.3 360.4ZM459.4 341.3L462.6 340.4 465.4 346.6 462.2 347.5ZM478.9 336.1L482 335.2 484.8 341.3 481.8 342.1ZM497.5 331.1L500.4 330.3 503.2 336.2 500.3 337ZM535.2 321.1L537.7 320.4 540.5 325.9 537.9 326.6ZM544.7 318.5L547.2 317.9 550 323.3 547.5 324ZM554 316.1L556.5 315.4 559.2 320.8 556.8 321.4ZM594.2 305.4L596.4 304.8 599 309.8 596.9 310.4ZM599.6 303.9L601.7 303.4 604.3 308.3 602.2 308.9ZM617.5 299.2L619.5 298.6 622.1 303.4 620.1 304ZM454.6 350.7L457.9 349.8 460.8 356.1 457.5 357.1ZM497.1 339L500 338.1 502.9 344.1 500 344.9ZM586.4 314.2L588.6 313.6 591.3 318.7 589 319.4ZM597.3 311.2L599.5 310.6 602.1 315.6 600 316.2ZM607.9 308.3L609.9 307.7 612.6 312.6 610.5 313.2ZM371.1 383.1L375.2 382 378.2 389.1 374.1 390.3ZM376.2 381.7L380.2 380.5 383.2 387.6 379.2 388.8ZM386.2 378.8L390.1 377.7 393 384.7 389.1 385.9ZM400.6 374.6L404.4 373.5 407.4 380.4 403.6 381.5ZM423.7 368L427.3 366.9 430.2 373.6 426.6 374.7ZM432.6 365.4L436 364.4 439 371 435.5 372ZM445.5 361.7L448.8 360.7 451.8 367.2 448.4 368.2ZM462 356.9L465.3 356 468.2 362.3 464.9 363.3ZM466.1 355.8L469.3 354.8 472.1 361.1 469 362.1ZM578.2 323.5L580.5 322.8 583.2 328 580.9 328.7ZM586.7 321L588.9 320.4 591.6 325.5 589.4 326.2ZM597.7 317.8L599.9 317.2 602.5 322.3 600.4 322.9ZM427.1 375.8L430.7 374.7 433.6 381.4 430.1 382.5ZM436 373.1L439.5 372.1 442.4 378.7 438.9 379.8ZM465.4 364.3L468.6 363.3 471.5 369.7 468.3 370.7ZM469.4 363.1L472.6 362.1 475.5 368.4 472.3 369.4ZM473.4 361.9L476.6 361 479.5 367.2 476.3 368.2ZM598.1 324.6L600.3 323.9 603 329 600.8 329.7ZM608.8 321.4L610.9 320.7 613.6 325.7 611.5 326.4ZM614 319.8L616.1 319.2 618.7 324.2 616.7 324.8ZM636.4 313.1L638.3 312.5 640.9 317.3 639 317.9ZM388.1 396.8L392.1 395.6 395.1 402.7 391.1 404ZM393.1 395.3L397 394.1 400 401.2 396.1 402.4ZM412.3 389.3L416 388.1 419 395.1 415.3 396.3ZM426.1 385L429.7 383.9 432.6 390.7 429 391.8ZM435 382.2L438.5 381.1 441.5 387.8 438 389ZM448 378.2L451.4 377.1 454.4 383.7 451 384.8ZM464.7 373L468 372 470.9 378.4 467.7 379.4ZM468.8 371.7L472 370.7 475 377.1 471.7 378.1ZM472.8 370.5L476 369.5 478.9 375.8 475.8 376.8ZM492.3 364.4L495.3 363.5 498.2 369.6 495.2 370.6ZM581.6 336.6L583.9 335.9 586.7 341.2 584.4 342ZM634.6 320.2L636.5 319.6 639.1 324.4 637.2 325ZM641.8 317.9L643.6 317.3 646.3 322.1 644.4 322.7ZM472.2 379.2L475.4 378.1 478.4 384.6 475.2 385.6ZM499.4 370.4L502.4 369.5 505.3 375.6 502.3 376.6ZM554.5 352.6L557.1 351.8 559.9 357.5 557.4 358.3ZM560.8 350.6L563.3 349.8 566.1 355.4 563.6 356.2ZM570 347.6L572.5 346.8 575.2 352.3 572.8 353.1ZM601.7 337.4L603.9 336.7 606.6 341.9 604.4 342.6ZM433 401L436.6 399.8 439.6 406.6 436.1 407.9ZM437.5 399.5L441.1 398.3 444.1 405.1 440.5 406.3ZM450.7 395.1L454.1 393.9 457.1 400.6 453.7 401.8ZM459.2 392.2L462.5 391.1 465.5 397.7 462.2 398.9ZM463.4 390.8L466.7 389.7 469.7 396.3 466.4 397.4ZM467.5 389.4L470.8 388.3 473.8 394.9 470.5 396ZM513.8 373.9L516.7 373 519.6 379.1 516.7 380.1ZM531.4 368L534.2 367.1 537.1 373.1 534.3 374ZM449.8 404.4L453.3 403.2 456.3 410 452.9 411.3ZM494.9 388.8L497.9 387.7 500.9 394.1 497.8 395.2ZM502.5 386.2L505.5 385.1 508.4 391.4 505.4 392.5ZM506.2 384.9L509.2 383.8 512.1 390.1 509.2 391.2ZM524.4 378.6L527.2 377.6 530.1 383.7 527.3 384.7ZM591.3 355.4L593.6 354.6 596.4 360 594.1 360.8ZM610.8 348.7L612.9 347.9 615.6 353.1 613.5 353.9ZM621.3 345L623.4 344.3 626.1 349.4 624.1 350.1ZM453.4 412.4L456.8 411.1 459.9 418 456.4 419.3ZM466.2 407.8L469.5 406.6 472.6 413.3 469.2 414.5ZM527.8 385.7L530.6 384.7 533.5 390.8 530.7 391.8ZM545 379.5L547.6 378.6 550.5 384.5 547.9 385.5ZM579.9 367L582.3 366.1 585.1 371.7 582.7 372.6ZM651.7 341.2L653.5 340.6 656.2 345.4 654.3 346.1Z" fill="#c68e75"/><path d="M343.1 216.9L346.8 216.6 349.4 222.5 345.7 222.9ZM541.5 199.9L543.7 199.7 546.1 204.2 543.9 204.5ZM555.1 198.8L557.3 198.6 559.6 203 557.5 203.2ZM470.3 212.2L473.1 211.9 475.6 217 472.8 217.2ZM483.8 210.9L486.4 210.6 488.9 215.6 486.3 215.9ZM490.4 210.3L492.9 210 495.4 214.9 492.8 215.2ZM503.1 209.1L505.6 208.8 508 213.7 505.6 213.9ZM538.7 205.7L541 205.5 543.4 210.1 541.1 210.3ZM576 202.2L578 202 580.3 206.3 578.3 206.5ZM578.5 202L580.5 201.8 582.8 206.1 580.8 206.3ZM371.9 228.5L375.4 228.1 378 233.9 374.5 234.3ZM389.3 226.7L392.7 226.3 395.2 232 391.9 232.4ZM493.2 216L495.8 215.7 498.3 220.7 495.7 221ZM496.5 215.7L499 215.4 501.5 220.3 498.9 220.6ZM506 214.7L508.4 214.5 510.9 219.3 508.4 219.6ZM544.3 210.8L546.6 210.5 549 215.1 546.8 215.4ZM328 240.5L332 240 334.6 246.2 330.6 246.7ZM408.9 231.5L412.2 231.1 414.8 236.7 411.5 237.1ZM413 231L416.2 230.7 418.8 236.2 415.6 236.6ZM469.3 224.8L472.1 224.5 474.6 229.6 471.8 230ZM483 223.2L485.6 223 488.1 228 485.5 228.3ZM489.6 222.5L492.2 222.2 494.7 227.2 492.1 227.5ZM496.1 221.8L498.7 221.5 501.2 226.5 498.6 226.8ZM499.4 221.4L501.9 221.1 504.4 226.1 501.9 226.4ZM505.7 220.7L508.2 220.4 510.7 225.3 508.2 225.6ZM508.8 220.4L511.3 220.1 513.8 225 511.3 225.3ZM511.9 220L514.4 219.8 516.9 224.6 514.4 224.9ZM552.7 215.5L554.9 215.3 557.3 219.8 555.1 220.1ZM563.5 214.3L565.6 214.1 568 218.5 565.9 218.8ZM305.6 250.8L309.7 250.3 312.4 256.7 308.2 257.2ZM315.9 249.5L320 249 322.7 255.4 318.6 255.9ZM331.1 247.7L335 247.2 337.6 253.5 333.7 254ZM340.9 246.5L344.7 246.1 347.3 252.3 343.5 252.7ZM416 237.5L419.2 237.2 421.8 242.8 418.6 243.2ZM465.2 231.6L468 231.3 470.6 236.5 467.8 236.9ZM475.7 230.4L478.4 230.1 481 235.2 478.2 235.6ZM492.5 228.4L495.1 228.1 497.7 233.1 495.1 233.4ZM495.8 228L498.4 227.7 500.9 232.7 498.3 233ZM499 227.6L501.6 227.3 504.1 232.3 501.6 232.6ZM511.7 226.1L514.2 225.8 516.7 230.7 514.2 231ZM517.9 225.3L520.3 225 522.8 229.9 520.4 230.2ZM521 225L523.4 224.7 525.9 229.5 523.4 229.8ZM524 224.6L526.4 224.3 528.9 229.1 526.5 229.4ZM550 221.5L552.2 221.2 554.6 225.8 552.4 226.1ZM568.9 219.2L571 219 573.4 223.5 571.3 223.7ZM571.5 218.9L573.6 218.7 576 223.1 573.9 223.4ZM308.6 258.3L312.8 257.8 315.5 264.2 311.3 264.8ZM358.2 251.9L361.9 251.4 364.6 257.5 360.8 258ZM488.8 235.1L491.5 234.8 494 239.9 491.4 240.3ZM511.5 232.2L514 231.9 516.5 236.8 514 237.2ZM529.9 229.8L532.2 229.5 534.7 234.3 532.3 234.7ZM569.1 224.8L571.2 224.5 573.6 229 571.5 229.3ZM579.4 223.5L581.5 223.2 583.9 227.6 581.9 227.9ZM582 223.1L584 222.9 586.4 227.3 584.4 227.6ZM316.9 265.1L321.1 264.6 323.7 271.1 319.6 271.7ZM322.1 264.4L326.2 263.9 328.9 270.3 324.8 270.9ZM485.1 242L487.8 241.6 490.3 246.8 487.6 247.2ZM508.1 238.8L510.7 238.5 513.2 243.5 510.7 243.9ZM526.8 236.3L529.2 235.9 531.7 240.8 529.3 241.2ZM535.7 235L538.1 234.7 540.6 239.5 538.2 239.9ZM550.1 233.1L552.4 232.8 554.8 237.5 552.6 237.8ZM555.7 232.3L557.9 232 560.4 236.7 558.2 237ZM561.2 231.5L563.4 231.2 565.8 235.9 563.6 236.2ZM569.3 230.4L571.4 230.1 573.8 234.7 571.7 235ZM582.3 228.6L584.3 228.4 586.7 232.8 584.7 233.1ZM309.6 274.3L313.8 273.6 316.5 280.3 312.3 280.9ZM354.9 267.6L358.7 267.1 361.4 273.3 357.6 273.9ZM359.7 266.9L363.4 266.4 366.1 272.6 362.4 273.2ZM369 265.5L372.7 265 375.4 271.1 371.7 271.7ZM382.7 263.5L386.3 263 388.9 269.1 385.4 269.6ZM511.1 244.7L513.6 244.3 516.2 249.4 513.6 249.8ZM520.5 243.3L523 243 525.5 248 523.1 248.3ZM529.7 242L532.1 241.6 534.6 246.5 532.2 246.9ZM541.5 240.2L543.9 239.9 546.4 244.7 544.1 245.1ZM574.7 235.4L576.8 235.1 579.3 239.6 577.2 240ZM587.6 233.5L589.6 233.2 592 237.7 590 238ZM318 281.2L322.1 280.5 324.9 287.1 320.7 287.8ZM428.2 264L431.4 263.5 434.1 269.2 430.9 269.8ZM466.5 258L469.3 257.6 472 263 469.1 263.5ZM470.1 257.5L472.9 257 475.6 262.4 472.7 262.9ZM514.1 250.6L516.6 250.2 519.2 255.3 516.6 255.7ZM517.2 250.1L519.7 249.7 522.3 254.8 519.8 255.2ZM532.6 247.7L535 247.3 537.6 252.3 535.2 252.7ZM547.4 245.4L549.7 245.1 552.2 249.9 549.9 250.3ZM558.7 243.7L560.9 243.3 563.4 248.1 561.2 248.4ZM566.9 242.4L569.1 242 571.6 246.7 569.4 247.1ZM587.9 239.1L589.9 238.8 592.4 243.3 590.4 243.6ZM427.3 271.4L430.5 270.8 433.2 276.7 430 277.2ZM454.7 266.8L457.7 266.3 460.4 271.9 457.4 272.5ZM462.2 265.6L465.1 265.1 467.8 270.7 464.8 271.2ZM473.1 263.8L476 263.3 478.6 268.8 475.8 269.3ZM476.7 263.2L479.5 262.7 482.2 268.2 479.3 268.7ZM507.4 258.1L510 257.7 512.6 262.9 510 263.3ZM564.4 248.7L566.6 248.4 569.1 253.1 566.9 253.5ZM569.8 247.8L572 247.5 574.5 252.2 572.3 252.5ZM588.2 244.8L590.3 244.5 592.7 249 590.7 249.4ZM426.3 278.9L429.6 278.3 432.3 284.2 429 284.8ZM468.9 271.4L471.9 270.9 474.5 276.5 471.6 277ZM486.8 268.3L489.6 267.8 492.2 273.2 489.4 273.7ZM520.1 262.5L522.6 262.1 525.2 267.2 522.7 267.7ZM550.4 257.2L552.7 256.8 555.2 261.7 552.9 262.1ZM567.3 254.3L569.5 253.9 572 258.6 569.8 259ZM598.6 248.8L600.6 248.4 603.1 253 601.1 253.3ZM601.1 248.4L603.1 248 605.5 252.5 603.6 252.9ZM482.8 275.9L485.7 275.4 488.3 280.9 485.5 281.4ZM503.5 272.1L506.2 271.6 508.8 276.9 506.2 277.5ZM516.7 269.7L519.3 269.2 521.9 274.4 519.3 274.9ZM519.9 269.1L522.4 268.6 525.1 273.8 522.5 274.3ZM561.9 261.4L564.1 261 566.7 265.8 564.4 266.2ZM572.9 259.3L575.1 258.9 577.6 263.7 575.5 264.1ZM606.4 253.2L608.4 252.8 610.8 257.3 608.9 257.7ZM370.8 304.7L374.6 303.9 377.3 310.4 373.5 311.2ZM411.6 296.7L415.1 296.1 417.8 302.2 414.4 302.9ZM516.5 276.4L519.1 275.9 521.7 281.2 519.1 281.7ZM526.1 274.5L528.6 274.1 531.3 279.2 528.7 279.8ZM532.4 273.3L534.8 272.8 537.5 278 535 278.5ZM564.8 267L567.1 266.6 569.6 271.5 567.4 271.9ZM570.4 266L572.6 265.5 575.2 270.4 573 270.8ZM583.9 263.3L586 262.9 588.6 267.7 586.5 268.1ZM414.8 303.9L418.3 303.2 421 309.4 417.6 310.1ZM503 285.9L505.7 285.4 508.3 290.8 505.6 291.4ZM522.8 281.9L525.4 281.4 528 286.7 525.5 287.2ZM535.4 279.3L537.9 278.8 540.5 284 538.1 284.5ZM547.6 276.9L550 276.4 552.6 281.4 550.2 281.9ZM556.4 275.1L558.7 274.6 561.3 279.6 559 280.1ZM567.8 272.7L570.1 272.3 572.6 277.2 570.4 277.7ZM382 318.8L385.7 318 388.5 324.5 384.8 325.4ZM481.4 297.6L484.3 296.9 487.1 302.6 484.2 303.3ZM506.1 292.3L508.8 291.7 511.5 297.2 508.8 297.8ZM519.4 289.4L522 288.9 524.7 294.2 522.1 294.8ZM529.1 287.4L531.6 286.8 534.3 292.1 531.7 292.7ZM538.5 285.4L540.9 284.8 543.6 290 541.1 290.6ZM550.6 282.8L553 282.3 555.6 287.4 553.2 287.9ZM556.5 281.5L558.9 281 561.5 286.1 559.1 286.6ZM562.3 280.3L564.6 279.8 567.2 284.8 564.9 285.3ZM345.7 335.3L349.9 334.4 352.7 341.3 348.6 342.2ZM361 331.9L365 331 367.8 337.8 363.8 338.7ZM375.7 328.6L379.6 327.7 382.4 334.4 378.6 335.3ZM380.5 327.5L384.3 326.7 387.1 333.3 383.4 334.1ZM421.3 318.4L424.7 317.6 427.5 323.9 424.1 324.7ZM466 308.4L469 307.7 471.8 313.6 468.7 314.3ZM491.8 302.6L494.7 301.9 497.4 307.6 494.6 308.3ZM502.4 300.2L505.1 299.6 507.8 305.2 505.1 305.8ZM512.6 297.9L515.3 297.3 518 302.8 515.3 303.4ZM535.3 292.8L537.8 292.3 540.5 297.6 538 298.1ZM538.5 292.1L540.9 291.6 543.6 296.8 541.1 297.4ZM547.7 290.1L550.1 289.5 552.7 294.7 550.3 295.3ZM556.6 288.1L559 287.5 561.6 292.6 559.3 293.2ZM573.8 284.2L576.1 283.7 578.7 288.7 576.4 289.2ZM343.8 344.6L348 343.6 350.9 350.6 346.7 351.6ZM354.2 342.2L358.3 341.2 361.1 348.1 357.1 349.1ZM428.8 324.7L432.2 323.9 435 330.1 431.7 331ZM476.7 313.5L479.7 312.8 482.5 318.6 479.5 319.3ZM487.8 310.9L490.7 310.2 493.5 315.9 490.6 316.6ZM535.3 299.7L537.8 299.2 540.5 304.5 538 305.1ZM544.7 297.5L547.1 297 549.8 302.2 547.3 302.8ZM553.8 295.4L556.2 294.9 558.8 300 556.4 300.6ZM559.7 294L562 293.5 564.7 298.6 562.3 299.2ZM562.6 293.3L564.9 292.8 567.6 297.9 565.3 298.5ZM565.5 292.7L567.8 292.1 570.5 297.2 568.2 297.8ZM568.4 292L570.7 291.5 573.3 296.5 571 297.1ZM576.9 290L579.1 289.5 581.7 294.5 579.5 295ZM616 280.8L618 280.4 620.5 285 618.6 285.5ZM362.6 349L366.6 348 369.5 354.9 365.5 355.9ZM372.6 346.6L376.5 345.6 379.4 352.4 375.5 353.4ZM452.8 326.9L456 326.1 458.8 332.3 455.6 333.1ZM472.4 322.1L475.5 321.4 478.3 327.3 475.2 328.1ZM494.6 316.7L497.5 316 500.3 321.7 497.4 322.5ZM518.9 310.8L521.6 310.1 524.3 315.6 521.6 316.3ZM528.8 308.3L531.4 307.7 534.1 313.1 531.5 313.8ZM547.8 303.7L550.2 303.1 552.9 308.4 550.5 309ZM556.9 301.5L559.2 300.9 561.9 306.1 559.5 306.7ZM585.4 294.5L587.6 293.9 590.2 298.9 588 299.5ZM345.3 362.4L349.5 361.3 352.4 368.4 348.2 369.5ZM380.9 353.3L384.7 352.3 387.6 359.1 383.7 360.1ZM404.5 347.2L408.2 346.3 411 352.9 407.4 353.9ZM439.7 338.3L443 337.4 445.8 343.7 442.5 344.6ZM456.1 334.1L459.3 333.2 462.1 339.4 458.9 340.2ZM483.2 327.1L486.2 326.4 489 332.3 486 333.1ZM528.7 315.5L531.3 314.9 534.1 320.4 531.4 321.1ZM550.9 309.9L553.3 309.2 556 314.5 553.6 315.2ZM562.9 306.8L565.3 306.2 568 311.4 565.6 312ZM348.7 370.7L352.9 369.6 355.8 376.8 351.6 378ZM416.9 352.6L420.5 351.6 423.4 358.2 419.8 359.2ZM463.4 340.2L466.6 339.3 469.4 345.5 466.2 346.4ZM490.2 333.1L493.1 332.3 495.9 338.2 493 339ZM508.2 328.3L511 327.5 513.8 333.3 511 334ZM541.6 319.4L544.1 318.7 546.8 324.2 544.3 324.9ZM551 316.9L553.4 316.2 556.2 321.6 553.7 322.3ZM591.5 306.1L593.7 305.5 596.3 310.5 594.2 311.1ZM620 298.5L622 298 624.6 302.7 622.6 303.3ZM372.8 373.4L376.8 372.3 379.7 379.4 375.7 380.5ZM424.8 359L428.3 358 431.2 364.6 427.7 365.6ZM458.7 349.6L461.9 348.7 464.8 355 461.6 355.9ZM554.1 323.2L556.6 322.5 559.3 327.9 556.9 328.6ZM560.2 321.5L562.7 320.8 565.4 326.1 563 326.8ZM600 310.5L602.1 309.9 604.8 314.9 602.6 315.5ZM630.3 302L632.2 301.5 634.8 306.2 632.9 306.8ZM355.5 387.6L359.7 386.4 362.7 393.7 358.5 395ZM548 332.2L550.5 331.4 553.3 337 550.7 337.7ZM551.1 331.3L553.6 330.5 556.4 336 553.9 336.8ZM566.4 326.8L568.8 326.2 571.5 331.5 569.2 332.2ZM633.3 307.6L635.2 307 637.8 311.8 635.9 312.3ZM635.7 306.9L637.6 306.3 640.2 311.1 638.3 311.6ZM379.6 390L383.7 388.8 386.6 395.9 382.6 397.2ZM448.9 369.3L452.2 368.2 455.2 374.7 451.8 375.8ZM560.5 335.8L563 335.1 565.8 340.5 563.3 341.3ZM566.6 334L569 333.3 571.8 338.7 569.4 339.4ZM629.1 315.3L631.1 314.7 633.7 319.5 631.7 320.1ZM372.9 401.5L377 400.3 380.1 407.6 375.9 408.9ZM398 393.7L401.8 392.5 404.8 399.6 401 400.9ZM421.5 386.4L425.2 385.3 428.1 392.1 424.5 393.3ZM476.8 369.2L479.9 368.3 482.9 374.6 479.7 375.6ZM480.7 368L483.8 367 486.8 373.3 483.6 374.3ZM484.6 366.8L487.7 365.8 490.6 372.1 487.5 373.1ZM499.8 362.1L502.7 361.2 505.6 367.3 502.6 368.2ZM557.6 344.1L560.1 343.3 562.9 348.9 560.4 349.7ZM629.7 321.7L631.7 321.1 634.3 326 632.3 326.6ZM455.7 384.5L459.1 383.4 462.1 390 458.7 391.1ZM459.9 383.2L463.2 382.1 466.2 388.6 462.9 389.7ZM476.2 377.9L479.4 376.9 482.4 383.3 479.2 384.3ZM480.2 376.6L483.3 375.6 486.3 381.9 483.1 383ZM491.8 372.9L494.9 371.9 497.8 378.1 494.8 379.1ZM495.6 371.6L498.7 370.7 501.6 376.9 498.6 377.9ZM563.9 349.6L566.4 348.8 569.2 354.4 566.7 355.2ZM567 348.6L569.4 347.8 572.2 353.3 569.8 354.2ZM630.3 328.2L632.3 327.5 634.9 332.5 633 333.1ZM419.3 405.6L423 404.3 426 411.3 422.3 412.6ZM471.6 388.1L474.9 387 477.8 393.5 474.6 394.6ZM479.7 385.4L482.8 384.3 485.8 390.7 482.6 391.8ZM544.9 363.5L547.5 362.7 550.4 368.5 547.8 369.4ZM567.2 356.1L569.7 355.3 572.5 360.8 570 361.7ZM599.4 345.3L601.6 344.6 604.3 349.9 602.1 350.6ZM618.2 339L620.3 338.3 623 343.4 620.9 344.2ZM633.4 333.9L635.4 333.3 638 338.2 636.1 338.9ZM393.7 423.9L397.7 422.5 400.8 429.8 396.8 431.3ZM454.2 402.9L457.6 401.7 460.6 408.5 457.2 409.7ZM458.4 401.4L461.8 400.3 464.8 407 461.5 408.2ZM548.2 370.3L550.9 369.4 553.7 375.2 551.1 376.2ZM558 366.9L560.5 366.1 563.4 371.8 560.8 372.7ZM599.8 352.5L602 351.7 604.8 357 602.6 357.8ZM402.3 430.7L406.2 429.3 409.3 436.6 405.4 438.1ZM444.6 415.5L448.1 414.3 451.2 421.2 447.6 422.5ZM457.7 410.8L461.1 409.6 464.1 416.4 460.7 417.7ZM474.5 404.8L477.8 403.6 480.8 410.3 477.5 411.5ZM505.9 393.5L508.9 392.4 511.9 398.8 508.9 399.9ZM548.3 378.3L550.9 377.4 553.8 383.3 551.2 384.2ZM561.3 373.6L563.8 372.7 566.7 378.5 564.2 379.4ZM600.2 359.7L602.5 358.9 605.3 364.3 603 365.1ZM611.3 355.7L613.4 355 616.2 360.2 614 361ZM616.6 353.8L618.8 353 621.5 358.3 619.4 359.1Z" fill="#cf977d"/><path d="M352.4 216.2L356 215.8 358.6 221.7 354.9 222ZM404.1 211.7L407.3 211.4 409.8 216.9 406.6 217.2ZM350.7 223.4L354.4 223.1 357 229 353.3 229.4ZM377.7 220.9L381.1 220.6 383.7 226.3 380.3 226.6ZM398.9 218.9L402.2 218.6 404.7 224.1 401.4 224.5ZM419 217L422.1 216.7 424.7 222.1 421.5 222.4ZM329.9 232.8L333.8 232.4 336.4 238.5 332.5 238.9ZM344.4 231.3L348.1 230.9 350.7 236.9 347 237.3ZM353.7 230.3L357.4 229.9 360 235.9 356.3 236.3ZM437.3 221.7L440.3 221.4 442.9 226.8 439.9 227.1ZM483.4 217L486 216.8 488.5 221.8 485.9 222.1ZM347.4 238.3L351.2 237.9 353.8 244 350 244.4ZM424.9 229.7L428.1 229.4 430.6 234.8 427.5 235.2ZM428.8 229.3L431.9 228.9 434.5 234.4 431.4 234.7ZM440.3 228L443.3 227.7 445.9 233 442.9 233.4ZM476.2 224L478.9 223.7 481.4 228.8 478.7 229.1ZM345.7 246L349.5 245.5 352.1 251.6 348.3 252.1ZM431.8 235.6L434.9 235.3 437.5 240.8 434.4 241.2ZM447 233.8L450 233.5 452.6 238.8 449.6 239.2ZM343.9 253.8L347.8 253.3 350.4 259.5 346.6 260ZM402.6 246.2L405.9 245.8 408.5 251.5 405.2 252ZM438.7 241.6L441.7 241.2 444.3 246.7 441.3 247.1ZM306.5 266.6L310.7 266 313.4 272.6 309.1 273.2ZM311.7 265.9L315.9 265.3 318.6 271.8 314.4 272.4ZM584.8 228.3L586.8 228 589.2 232.5 587.2 232.8ZM429.1 256.7L432.3 256.3 435 261.9 431.8 262.4ZM467 251.2L469.9 250.8 472.5 256.1 469.6 256.6ZM343.4 277.2L347.4 276.6 350.1 283 346.2 283.6ZM440.1 262.1L443.2 261.7 445.9 267.3 442.8 267.8ZM451.6 260.3L454.6 259.9 457.3 265.4 454.3 265.9ZM491 254.2L493.8 253.8 496.4 259 493.6 259.5ZM384.4 278.4L388 277.9 390.7 284 387.1 284.6ZM500.8 259.2L503.4 258.8 506 264 503.4 264.5ZM541.5 252.5L543.9 252.1 546.4 257 544.1 257.4ZM585.7 245.2L587.7 244.9 590.2 249.5 588.1 249.8ZM387.6 285.6L391.2 285 393.9 291.2 390.3 291.9ZM490.3 267.7L493 267.2 495.7 272.6 492.9 273.1ZM541.6 258.8L543.9 258.3 546.5 263.3 544.1 263.7ZM429.5 285.8L432.7 285.2 435.4 291.1 432.2 291.7ZM437.6 284.3L440.8 283.7 443.5 289.5 440.3 290.1ZM441.6 283.5L444.7 282.9 447.4 288.8 444.3 289.4ZM541.6 265.1L543.9 264.7 546.5 269.7 544.1 270.1ZM586.3 256.9L588.3 256.5 590.8 261.2 588.8 261.6ZM588.8 256.4L590.9 256 593.4 260.7 591.3 261.1ZM604 253.6L605.9 253.3 608.4 257.8 606.4 258.2ZM356.2 307.5L360.1 306.7 362.9 313.3 359 314.1ZM398.4 299.3L402 298.6 404.8 304.8 401.2 305.6ZM402.9 298.4L406.4 297.8 409.2 304 405.6 304.7ZM444.7 290.3L447.9 289.7 450.6 295.6 447.4 296.2ZM467.8 285.9L470.7 285.3 473.4 290.9 470.5 291.5ZM541.6 271.5L544 271.1 546.6 276.2 544.2 276.6ZM369.2 313.2L373 312.4 375.8 319 372 319.8ZM397.2 307.5L400.8 306.8 403.6 313.1 400 313.9ZM401.7 306.6L405.2 305.9 408 312.1 404.4 312.9ZM431.7 300.5L435 299.8 437.8 305.8 434.5 306.5ZM541.6 278.1L544 277.6 546.6 282.7 544.2 283.2ZM584.2 269.4L586.3 269 588.9 273.7 586.8 274.2ZM352.7 325.1L356.7 324.2 359.5 331 355.5 331.9ZM356 333L360 332.1 362.8 338.9 358.8 339.9ZM403.7 322.3L407.3 321.5 410.1 327.9 406.5 328.8ZM590.2 280.6L592.3 280.1 594.8 284.9 592.7 285.4ZM338.6 345.8L342.8 344.8 345.7 351.9 341.4 352.9ZM374.2 337.5L378.1 336.6 380.9 343.3 377 344.2ZM383.8 335.2L387.6 334.3 390.5 341 386.7 341.9ZM402.4 330.9L406.1 330 408.9 336.5 405.3 337.4ZM585.1 288.1L587.3 287.6 589.9 292.5 587.7 293ZM587.8 287.4L590 286.9 592.5 291.8 590.4 292.3ZM350.5 361L354.7 360 357.6 367 353.5 368.2ZM395.2 349.6L399 348.7 401.8 355.4 398.1 356.3ZM422.5 342.7L426 341.8 428.8 348.2 425.3 349.1ZM435.4 339.3L438.8 338.5 441.7 344.8 438.3 345.7ZM475.7 329.1L478.7 328.3 481.5 334.3 478.5 335.1ZM421.4 351.4L424.9 350.4 427.8 357 424.3 357.9ZM471.2 338.1L474.3 337.3 477.2 343.4 474.1 344.2ZM560.1 314.5L562.5 313.8 565.2 319.1 562.8 319.8ZM470.7 346.3L473.8 345.4 476.6 351.6 473.5 352.5ZM474.6 345.2L477.7 344.4 480.5 350.5 477.4 351.4ZM507.9 336L510.7 335.2 513.5 341 510.7 341.8ZM627.9 302.7L629.9 302.2 632.4 306.9 630.5 307.5ZM493.1 348L496 347.1 498.9 353.1 495.9 354ZM496.8 346.9L499.7 346.1 502.6 352.1 499.6 352.9ZM603.1 316.3L605.2 315.7 607.8 320.7 605.7 321.3ZM572.6 332.2L574.9 331.5 577.7 336.8 575.3 337.6ZM581.3 329.6L583.6 328.9 586.3 334.2 584.1 334.9ZM592.6 326.2L594.8 325.5 597.5 330.7 595.3 331.4ZM439.4 380.9L442.9 379.8 445.8 386.4 442.4 387.6ZM569.8 340.3L572.2 339.6 575 345 572.6 345.8ZM603.9 329.7L606.1 329 608.8 334.1 606.7 334.8ZM609.3 328L611.4 327.4 614.1 332.4 612 333.1ZM425 394.4L428.6 393.2 431.6 400.1 428 401.3ZM442.9 388.7L446.3 387.5 449.3 394.3 445.8 395.4ZM576 345.7L578.4 344.9 581.2 350.4 578.8 351.2ZM587.7 341.9L590 341.2 592.7 346.5 590.5 347.3ZM590.9 348.2L593.2 347.4 596 352.7 593.7 353.5ZM602.1 344.4L604.3 343.7 607.1 348.9 604.9 349.7ZM585.5 357.4L587.8 356.6 590.6 362.1 588.3 362.9ZM594.1 354.4L596.4 353.6 599.2 359 596.9 359.8ZM650.9 334.7L652.8 334.1 655.4 338.9 653.6 339.6ZM478.6 403.3L481.8 402.2 484.8 408.8 481.6 410ZM490.5 399L493.7 397.9 496.7 404.4 493.5 405.5ZM531.3 384.4L534.1 383.4 537 389.5 534.2 390.5Z" fill="#b37364"/><path d="M356.9 215.8L360.6 215.5 363.1 221.3 359.5 221.6ZM370.3 214.6L373.8 214.3 376.4 220 372.9 220.4ZM427.7 209.7L430.7 209.4 433.2 214.7 430.2 215ZM464 206.6L466.8 206.3 469.3 211.4 466.5 211.7ZM487.5 204.6L490.1 204.3 492.5 209.2 489.9 209.5ZM490.7 204.3L493.3 204.1 495.7 208.9 493.2 209.2ZM493.9 204L496.5 203.8 498.9 208.6 496.4 208.9ZM524.4 201.4L526.8 201.2 529.2 205.8 526.9 206ZM527.4 201.1L529.7 200.9 532.1 205.6 529.8 205.8ZM530.2 200.9L532.5 200.7 534.9 205.3 532.6 205.5ZM291.2 229L295.4 228.6 298 235 293.8 235.4ZM331.8 225.2L335.6 224.8 338.2 230.9 334.4 231.3ZM346.1 223.9L349.8 223.5 352.4 229.4 348.7 229.8ZM368.9 221.7L372.4 221.4 375 227.2 371.5 227.5ZM382 220.5L385.4 220.1 388 225.8 384.6 226.2ZM390.5 219.7L393.9 219.4 396.4 225 393.1 225.3ZM426.8 216.3L429.8 216 432.4 221.3 429.3 221.6ZM438.1 215.2L441.1 214.9 443.6 220.2 440.7 220.5ZM473.8 211.8L476.5 211.6 479 216.6 476.3 216.9ZM524.3 207.1L526.7 206.9 529.1 211.5 526.8 211.8ZM555.2 204.2L557.4 204 559.7 208.4 557.6 208.6ZM563.2 203.4L565.3 203.2 567.6 207.6 565.5 207.8ZM339.6 231.8L343.4 231.4 346 237.4 342.2 237.9ZM362.9 229.4L366.5 229 369.1 234.9 365.5 235.3ZM367.4 228.9L371 228.6 373.6 234.4 370 234.8ZM380.7 227.6L384.1 227.2 386.7 233 383.3 233.3ZM385 227.1L388.4 226.8 391 232.5 387.6 232.9ZM410 224.6L413.2 224.2 415.8 229.8 412.6 230.1ZM476.7 217.7L479.4 217.4 481.9 222.5 479.2 222.8ZM530.1 212.2L532.4 212 534.8 216.7 532.5 216.9ZM533 211.9L535.3 211.7 537.7 216.4 535.4 216.6ZM342.6 238.8L346.4 238.4 349.1 244.5 345.2 245ZM361.4 236.8L365 236.4 367.6 242.3 364 242.7ZM383.7 234.3L387.1 233.9 389.7 239.7 386.3 240.1ZM436.5 228.4L439.5 228.1 442.1 233.5 439.1 233.8ZM465.8 225.2L468.6 224.8 471.1 230 468.3 230.4ZM486.3 222.9L488.9 222.6 491.5 227.6 488.8 227.9ZM527.1 218.3L529.4 218.1 531.9 222.8 529.5 223.1ZM532.9 217.7L535.2 217.4 537.7 222.1 535.4 222.4ZM364.4 243.7L368.1 243.3 370.7 249.3 367 249.7ZM439.5 234.7L442.5 234.4 445.1 239.8 442.1 240.2ZM454.4 232.9L457.3 232.6 459.9 237.9 457 238.3ZM468.7 231.2L471.5 230.9 474.1 236.1 471.3 236.5ZM529.9 223.9L532.3 223.6 534.8 228.4 532.4 228.7ZM535.8 223.2L538.1 222.9 540.6 227.6 538.3 227.9ZM574.1 218.6L576.1 218.3 578.5 222.8 576.5 223.1ZM303.4 259L307.6 258.4 310.2 264.9 306 265.5ZM334.1 255L338.1 254.5 340.7 260.8 336.8 261.3ZM389.7 247.9L393.2 247.4 395.8 253.3 392.4 253.7ZM406.7 245.7L410.1 245.2 412.7 251 409.4 251.4ZM410.9 245.1L414.2 244.7 416.8 250.4 413.5 250.9ZM419 244.1L422.2 243.7 424.9 249.3 421.6 249.8ZM446.3 240.6L449.3 240.2 451.9 245.6 448.9 246ZM574.3 224.1L576.4 223.8 578.8 228.3 576.7 228.6ZM576.9 223.8L578.9 223.5 581.4 228 579.3 228.3ZM589.5 222.2L591.5 221.9 593.9 226.3 591.9 226.6ZM401.4 253.5L404.8 253.1 407.4 258.9 404 259.4ZM413.9 251.8L417.2 251.4 419.8 257.1 416.6 257.6ZM418 251.2L421.3 250.8 423.9 256.5 420.7 257ZM449.3 246.9L452.3 246.5 454.9 252 451.9 252.4ZM589.8 227.6L591.8 227.3 594.2 231.7 592.2 232ZM330.3 271.2L334.3 270.6 337 277.1 333 277.7ZM433.1 256.1L436.2 255.7 438.9 261.3 435.7 261.8ZM437 255.6L440.1 255.1 442.8 260.7 439.7 261.2ZM491.4 247.6L494.1 247.2 496.7 252.4 494 252.8ZM585.1 233.9L587.1 233.6 589.5 238.1 587.5 238.4ZM328.3 279.6L332.4 278.9 335.1 285.4 331.1 286.1ZM338.5 278L342.5 277.4 345.2 283.8 341.2 284.5ZM416 265.9L419.3 265.4 421.9 271.2 418.6 271.8ZM484.2 255.3L486.9 254.8 489.6 260.2 486.8 260.6ZM529.6 248.2L532 247.8 534.6 252.8 532.2 253.2ZM553.1 244.5L555.3 244.2 557.8 249 555.6 249.3ZM592.9 238.3L594.9 238 597.4 242.5 595.4 242.8ZM346.6 284.7L350.5 284 353.3 290.5 349.3 291.2ZM356.4 283.1L360.2 282.4 363 288.8 359.1 289.5ZM450.9 267.5L453.9 267 456.6 272.6 453.6 273.1ZM523.3 255.5L525.8 255.1 528.4 260.2 525.9 260.6ZM535.6 253.5L538 253.1 540.5 258.1 538.1 258.5ZM538.6 253L541 252.6 543.5 257.5 541.1 258ZM553.2 250.6L555.4 250.2 558 255 555.7 255.4ZM334.7 294.9L338.8 294.2 341.5 300.8 337.4 301.5ZM438.4 276.8L441.6 276.2 444.3 282 441.1 282.6ZM442.4 276.1L445.5 275.5 448.2 281.3 445.1 281.9ZM446.3 275.4L449.4 274.9 452.1 280.6 449 281.1ZM461.5 272.7L464.5 272.2 467.2 277.8 464.2 278.4ZM497.1 266.5L499.8 266 502.4 271.4 499.7 271.9ZM503.8 265.3L506.5 264.9 509.1 270.1 506.4 270.6ZM526.3 261.4L528.8 261 531.4 266.1 528.9 266.5ZM580.7 251.9L582.8 251.6 585.3 256.2 583.2 256.6ZM583.4 251.5L585.4 251.1 587.9 255.7 585.8 256.1ZM586 251L588 250.6 590.5 255.3 588.4 255.6ZM337.9 302.6L341.9 301.9 344.7 308.5 340.6 309.3ZM348 300.8L352 300 354.7 306.6 350.8 307.4ZM357.9 298.9L361.8 298.2 364.5 304.7 360.6 305.5ZM367.5 297.2L371.3 296.5 374.1 302.9 370.3 303.6ZM390.8 292.9L394.4 292.2 397.1 298.5 393.5 299.1ZM408.4 289.6L411.9 289 414.6 295.1 411.2 295.7ZM449.4 282.1L452.5 281.5 455.2 287.3 452.1 287.9ZM559.1 261.9L561.3 261.5 563.9 266.3 561.6 266.8ZM578.3 258.3L580.5 257.9 583 262.7 580.9 263.1ZM581 257.8L583.1 257.5 585.6 262.2 583.5 262.6ZM583.6 257.4L585.7 257 588.2 261.7 586.1 262.1ZM591.4 255.9L593.5 255.5 596 260.2 593.9 260.6ZM596.5 255L598.5 254.6 601 259.2 599 259.6ZM346.2 309.4L350.2 308.7 353 315.3 349 316.1ZM493 281L495.7 280.4 498.4 285.9 495.6 286.5ZM550.5 269.8L552.8 269.4 555.4 274.4 553.1 274.8ZM591.8 261.8L593.8 261.4 596.3 266.1 594.3 266.5ZM606.8 258.9L608.8 258.5 611.3 263.1 609.3 263.4ZM349.4 317.2L353.4 316.4 356.3 323.1 352.2 324ZM374 312.2L377.8 311.5 380.6 318 376.8 318.8ZM439.9 298.8L443.1 298.1 445.9 304.1 442.6 304.8ZM447.9 297.2L451 296.5 453.8 302.4 450.6 303.1ZM451.8 296.4L454.9 295.7 457.7 301.6 454.6 302.3ZM455.7 295.6L458.8 294.9 461.5 300.8 458.5 301.4ZM463.4 294L466.4 293.4 469.2 299.2 466.1 299.8ZM467.2 293.2L470.2 292.6 472.9 298.4 469.9 299ZM553.5 275.7L555.8 275.2 558.4 280.2 556.1 280.7ZM576.1 271L578.3 270.6 580.9 275.4 578.7 275.9ZM589.5 268.3L591.6 267.9 594.1 272.6 592 273.1ZM592.1 267.8L594.2 267.4 596.7 272.1 594.6 272.5ZM597.2 266.7L599.3 266.3 601.8 271 599.8 271.4ZM347.6 326.2L351.7 325.3 354.5 332.1 350.4 333ZM386.7 317.8L390.4 317 393.2 323.5 389.5 324.3ZM439 306.6L442.3 305.9 445 312 441.8 312.7ZM447.1 304.9L450.3 304.2 453 310.2 449.9 310.9ZM455 303.2L458.1 302.5 460.9 308.4 457.8 309.1ZM470.3 299.9L473.3 299.3 476.1 305.1 473.1 305.7ZM477.8 298.3L480.7 297.7 483.4 303.4 480.5 304.1ZM579.1 276.7L581.3 276.2 583.8 281.1 581.7 281.6ZM581.8 276.1L584 275.6 586.5 280.5 584.4 281ZM584.5 275.5L586.6 275.1 589.2 279.9 587.1 280.4ZM595 273.3L597.1 272.8 599.6 277.6 597.6 278ZM394.6 324.4L398.2 323.5 401.1 330 397.4 330.9ZM399.2 323.3L402.8 322.5 405.6 329 402 329.8ZM429.8 316.5L433.2 315.7 436 321.9 432.6 322.7ZM438.1 314.6L441.4 313.9 444.2 320 440.9 320.7ZM454.3 311L457.4 310.3 460.2 316.2 457.1 317ZM584.8 281.8L587 281.3 589.5 286.1 587.4 286.6ZM369.3 338.6L373.2 337.7 376.1 344.5 372.1 345.4ZM393.2 333L396.9 332.2 399.8 338.7 396.1 339.6ZM424.6 325.7L428 324.9 430.8 331.2 427.4 332ZM433.1 323.7L436.4 322.9 439.2 329.1 435.9 329.9ZM449.5 319.8L452.8 319.1 455.6 325.1 452.3 325.9ZM457.5 318L460.7 317.2 463.5 323.2 460.3 324ZM469.2 315.2L472.2 314.5 475 320.4 472 321.2ZM480.5 312.6L483.4 311.9 486.2 317.7 483.2 318.4ZM593.1 286.2L595.2 285.7 597.8 290.5 595.7 291.1ZM598.4 285L600.5 284.5 603 289.3 601 289.8ZM603.5 283.8L605.6 283.3 608.1 288 606.1 288.5ZM606.1 283.2L608.1 282.7 610.6 287.4 608.6 287.9ZM410.3 337.3L413.8 336.5 416.7 342.9 413.1 343.9ZM419.2 335.2L422.7 334.3 425.5 340.7 422 341.6ZM427.8 333L431.3 332.2 434.1 338.5 430.7 339.4ZM614.1 287.5L616 287 618.6 291.7 616.6 292.2ZM616.5 286.9L618.5 286.4 621 291.1 619.1 291.6ZM619 286.3L620.9 285.8 623.5 290.5 621.5 291ZM431.2 340.4L434.6 339.6 437.4 345.9 434 346.8ZM448 336.1L451.2 335.3 454.1 341.5 450.8 342.4ZM525.4 316.4L528 315.7 530.8 321.2 528.2 321.9ZM580.2 302.4L582.4 301.8 585.1 306.9 582.8 307.5ZM612 294.2L614 293.7 616.6 298.5 614.6 299ZM614.5 293.6L616.5 293.1 619.1 297.9 617.1 298.4ZM425.8 350.2L429.3 349.3 432.2 355.8 428.7 356.7ZM493.9 332.1L496.8 331.3 499.6 337.2 496.7 338ZM528.6 322.8L531.2 322.1 534 327.7 531.4 328.4ZM571.9 311.3L574.2 310.7 576.9 315.9 574.6 316.5ZM574.8 310.5L577.1 309.9 579.7 315.1 577.5 315.7ZM577.6 309.8L579.9 309.2 582.6 314.3 580.3 314.9ZM580.5 309L582.7 308.4 585.4 313.5 583.1 314.2ZM607.4 301.9L609.5 301.3 612.1 306.2 610 306.8ZM612.5 300.5L614.5 300 617.1 304.8 615.1 305.4ZM415.8 361.5L419.4 360.5 422.3 367.1 418.7 368.2ZM486 342L489 341.2 491.9 347.2 488.9 348.1ZM504.4 337L507.2 336.2 510 342 507.2 342.8ZM514.9 334L517.7 333.3 520.5 339 517.7 339.8ZM528.5 330.3L531.2 329.5 533.9 335.2 531.3 335.9ZM531.8 329.3L534.4 328.6 537.2 334.2 534.6 335ZM538.4 327.5L540.9 326.8 543.7 332.4 541.1 333.1ZM591.9 312.7L594.1 312.1 596.7 317.2 594.6 317.8ZM470 354.6L473.2 353.7 476.1 359.9 472.9 360.9ZM489.3 349.1L492.3 348.2 495.2 354.3 492.2 355.1ZM500.4 345.9L503.3 345 506.2 351 503.3 351.8ZM504.1 344.8L506.9 344 509.8 349.9 506.9 350.8ZM541.6 334L544.1 333.3 546.9 338.8 544.4 339.6ZM563.4 327.7L565.8 327 568.6 332.4 566.2 333.1ZM600.4 317.1L602.5 316.4 605.2 321.5 603.1 322.1ZM628.5 309L630.4 308.4 633 313.2 631.1 313.8ZM413.5 379.9L417.2 378.8 420.1 385.6 416.4 386.7ZM418.1 378.5L421.7 377.4 424.7 384.2 421 385.3ZM431.6 374.4L435.1 373.4 438 380 434.5 381.1ZM485.1 358.4L488.1 357.5 491 363.7 488 364.6ZM500.1 353.9L503 353 505.9 359.1 503 360ZM634 313.8L635.9 313.2 638.5 318 636.6 318.6ZM402.8 392.2L406.6 391.1 409.6 398.1 405.8 399.3ZM407.5 390.8L411.3 389.6 414.3 396.6 410.5 397.8ZM430.6 383.6L434.1 382.5 437.1 389.3 433.5 390.4ZM452.3 376.9L455.6 375.8 458.6 382.4 455.2 383.4ZM488.5 365.6L491.5 364.7 494.4 370.9 491.4 371.8ZM524.8 354.3L527.5 353.5 530.4 359.3 527.6 360.2ZM535 351.1L537.6 350.3 540.5 356.1 537.8 356.9ZM578.7 337.5L581 336.8 583.8 342.2 581.5 342.9ZM587.4 334.9L589.6 334.1 592.4 339.4 590.1 340.1ZM411 398.9L414.8 397.7 417.8 404.7 414.1 406ZM447.2 387.3L450.6 386.1 453.6 392.8 450.2 394ZM514 365.7L516.9 364.8 519.8 370.8 516.9 371.7ZM541.6 356.8L544.2 356 547.1 361.7 544.4 362.6ZM548.1 354.7L550.7 353.9 553.5 359.6 551 360.4ZM573.1 346.7L575.4 345.9 578.2 351.3 575.8 352.1ZM627.8 329L629.8 328.3 632.5 333.3 630.5 334ZM640 325L642 324.4 644.6 329.3 642.7 329.9ZM642.4 324.3L644.3 323.7 647 328.5 645.1 329.1ZM374.8 420.4L378.9 419 382 426.5 377.9 427.9ZM414.5 407.1L418.3 405.9 421.4 413 417.6 414.3ZM551.4 361.4L554 360.5 556.9 366.2 554.3 367.1ZM582.2 351.1L584.6 350.3 587.4 355.7 585 356.5ZM588 349.1L590.3 348.3 593.1 353.7 590.8 354.5ZM593.8 347.2L596 346.4 598.8 351.8 596.5 352.6ZM610.3 341.7L612.4 341 615.1 346.1 613 346.9ZM398.7 422.1L402.7 420.8 405.7 428.1 401.8 429.5ZM408.5 418.7L412.4 417.4 415.4 424.6 411.6 426ZM422.8 413.8L426.5 412.5 429.6 419.6 425.8 420.9ZM432 410.6L435.6 409.3 438.7 416.3 435.1 417.6ZM509.9 383.6L512.9 382.6 515.8 388.8 512.9 389.8ZM597 353.4L599.2 352.6 602 358 599.8 358.8ZM608 349.6L610.2 348.8 613 354.1 610.8 354.9ZM631.5 341.4L633.5 340.8 636.2 345.8 634.2 346.5ZM634 340.6L636 339.9 638.7 344.9 636.7 345.6ZM636.5 339.7L638.5 339 641.2 344 639.2 344.7ZM431 420.4L434.6 419.1 437.7 426.2 434.1 427.5ZM449 413.9L452.5 412.7 455.5 419.6 452 420.9ZM470.4 406.3L473.7 405.1 476.7 411.8 473.4 413ZM570.7 370.3L573.2 369.4 576 375.1 573.6 376ZM634.7 347.3L636.7 346.6 639.4 351.7 637.4 352.4ZM639.6 345.5L641.6 344.8 644.3 349.8 642.4 350.6Z" fill="#c38271"/><path d="M423.8 210L426.9 209.8 429.4 215.1 426.4 215.4ZM418 223.7L421.2 223.4 423.7 228.9 420.6 229.2ZM429.7 222.5L432.8 222.2 435.3 227.6 432.3 228ZM441.1 221.4L444.1 221.1 446.6 226.4 443.6 226.7ZM421 230.1L424.1 229.8 426.7 235.3 423.6 235.7ZM587.3 228L589.3 227.7 591.7 232.1 589.7 232.4ZM436.2 262.8L439.3 262.3 442 267.9 438.8 268.5ZM494.1 260.3L496.8 259.9 499.4 265.2 496.7 265.7ZM454 274L457 273.5 459.7 279.2 456.7 279.7ZM493.7 267.1L496.4 266.6 499.1 272 496.3 272.5ZM500.5 265.9L503.2 265.5 505.8 270.8 503.1 271.2ZM372.3 296.3L376.1 295.6 378.8 302 375.1 302.7ZM445.5 282.8L448.6 282.2 451.3 288 448.2 288.6ZM453.3 281.4L456.3 280.8 459 286.5 456 287.1ZM460.9 280L463.9 279.4 466.6 285.1 463.6 285.7ZM472 277.9L475 277.4 477.6 282.9 474.7 283.5ZM464 286.6L467 286 469.7 291.7 466.7 292.3ZM342.4 327.3L346.6 326.4 349.4 333.3 345.3 334.2ZM357.7 324L361.7 323.2 364.5 329.9 360.5 330.8ZM404.9 313.9L408.4 313.2 411.2 319.5 407.7 320.3ZM350.9 334.1L355 333.2 357.8 340.1 353.7 341ZM388.6 334.1L392.3 333.2 395.1 339.8 391.4 340.8ZM407 329.8L410.5 329 413.4 335.4 409.8 336.3ZM590.5 286.8L592.6 286.3 595.2 291.2 593.1 291.7ZM478.4 344.1L481.5 343.3 484.3 349.4 481.3 350.3ZM575.3 324.3L577.6 323.6 580.3 328.9 578 329.6ZM605.7 315.5L607.8 314.9 610.5 319.9 608.4 320.5ZM408.8 381.3L412.5 380.1 415.5 387 411.8 388.2ZM578.4 330.4L580.8 329.8 583.5 335.1 581.2 335.8ZM416.9 387.9L420.6 386.7 423.6 393.6 419.9 394.8ZM611.9 327.2L614 326.6 616.7 331.6 614.6 332.3ZM614.5 326.4L616.6 325.8 619.3 330.8 617.2 331.4ZM593.4 340.1L595.6 339.4 598.4 344.7 596.1 345.4ZM576.3 353L578.7 352.2 581.5 357.7 579.1 358.6ZM585.2 350.1L587.5 349.3 590.3 354.7 587.9 355.5Z" fill="#ab6b5e"/><path d="M431.5 209.4L434.5 209.1 437 214.4 434 214.7ZM435.2 209L438.2 208.8 440.7 214 437.7 214.3ZM446.3 208.1L449.2 207.9 451.7 213 448.8 213.3ZM449.9 207.8L452.7 207.5 455.2 212.7 452.4 213ZM570.7 197.4L572.8 197.3 575.1 201.6 573.1 201.7ZM575.8 197L577.8 196.8 580.1 201.1 578.1 201.3ZM377 295.4L380.7 294.7 383.5 301.1 379.7 301.8ZM395.3 292.1L398.8 291.4 401.6 297.6 398 298.3ZM380.2 302.8L383.9 302.1 386.7 308.5 383 309.3ZM408.2 321.3L411.7 320.5 414.5 326.9 411 327.7Z" fill="#a26a54"/><path d="M438.9 208.7L441.9 208.5 444.4 213.7 441.4 214ZM457 207.2L459.8 206.9 462.3 212 459.5 212.3ZM477.6 205.4L480.3 205.2 482.7 210.1 480.1 210.4ZM509.5 202.7L512 202.5 514.4 207.2 512 207.4ZM573.3 197.2L575.3 197 577.6 201.3 575.6 201.5ZM441.9 214.8L444.8 214.6 447.3 219.8 444.4 220.1ZM459.9 213.1L462.7 212.9 465.2 218 462.4 218.3ZM573.5 202.5L575.5 202.3 577.8 206.6 575.8 206.8ZM294.2 236.4L298.4 236 301 242.4 296.8 242.8ZM334.8 232.3L338.6 231.9 341.2 238 337.4 238.4ZM455.7 219.9L458.6 219.6 461.1 224.8 458.3 225.1ZM459.3 219.5L462.1 219.2 464.7 224.4 461.8 224.7ZM509.1 214.4L511.5 214.1 514 219 511.5 219.2ZM524.2 212.8L526.6 212.6 529 217.3 526.7 217.6ZM332.9 239.9L336.8 239.5 339.5 245.7 335.6 246.1ZM388 233.8L391.4 233.4 394 239.2 390.6 239.6ZM432.7 228.8L435.8 228.5 438.3 233.9 435.3 234.3ZM447.8 227.2L450.7 226.8 453.2 232.2 450.3 232.5ZM560.8 214.6L562.9 214.4 565.3 218.9 563.2 219.1ZM568.7 213.7L570.8 213.5 573.2 217.9 571.1 218.2ZM573.9 213.1L575.9 212.9 578.3 217.3 576.3 217.6ZM326.1 248.3L330.1 247.8 332.7 254.1 328.7 254.6ZM359.8 244.3L363.5 243.8 366.1 249.9 362.4 250.3ZM411.9 238L415.2 237.6 417.8 243.3 414.6 243.7ZM443.3 234.3L446.3 233.9 448.9 239.3 445.9 239.7ZM541.5 222.5L543.8 222.2 546.3 226.9 544 227.2ZM544.4 222.2L546.6 221.9 549.1 226.5 546.8 226.8ZM547.2 221.8L549.4 221.5 551.9 226.2 549.6 226.5ZM552.8 221.2L555 220.9 557.4 225.5 555.2 225.8ZM555.5 220.8L557.7 220.6 560.1 225.1 557.9 225.4ZM313.9 257.6L318 257.1 320.6 263.5 316.5 264.1ZM461 238.7L463.9 238.3 466.5 243.6 463.6 244ZM485.5 235.5L488.2 235.2 490.7 240.3 488 240.7ZM550 227.2L552.3 226.9 554.7 231.6 552.5 231.9ZM563.7 225.5L565.9 225.2 568.3 229.8 566.2 230.1ZM327.2 263.7L331.2 263.2 333.9 269.6 329.9 270.2ZM361.3 259L365 258.5 367.7 264.7 363.9 265.2ZM498.4 240.2L501 239.8 503.6 244.9 501 245.3ZM547.3 233.5L549.5 233.1 552 237.9 549.8 238.2ZM320.1 272.7L324.2 272.1 326.9 278.6 322.7 279.3ZM364.4 266.2L368.1 265.7 370.8 271.9 367.1 272.4ZM373.6 264.9L377.3 264.3 380 270.4 376.3 271ZM425.1 257.3L428.3 256.8 431 262.6 427.8 263.1ZM470.6 250.6L473.5 250.2 476.1 255.6 473.2 256ZM481.2 249.1L483.9 248.7 486.5 254 483.8 254.4ZM553 238.6L555.2 238.2 557.7 243 555.5 243.3ZM561.3 237.3L563.5 237 566 241.7 563.8 242ZM564.1 236.9L566.2 236.6 568.7 241.3 566.5 241.6ZM582.5 234.2L584.6 233.9 587 238.4 585 238.8ZM432.2 263.4L435.4 262.9 438 268.6 434.9 269.1ZM455.4 259.8L458.4 259.3 461 264.8 458 265.3ZM459.1 259.2L462.1 258.7 464.7 264.2 461.7 264.7ZM462.8 258.6L465.7 258.1 468.4 263.6 465.4 264.1ZM473.7 256.9L476.5 256.5 479.1 261.9 476.3 262.3ZM501.1 252.6L503.7 252.2 506.3 257.4 503.7 257.8ZM561.5 243.2L563.7 242.9 566.2 247.6 564 248ZM564.2 242.8L566.4 242.5 568.9 247.2 566.7 247.5ZM577.6 240.7L579.7 240.4 582.2 245 580.1 245.3ZM582.8 239.9L584.9 239.6 587.3 244.1 585.3 244.5ZM590.4 238.7L592.4 238.4 594.9 242.9 592.9 243.2ZM315.8 289.8L320.1 289.1 322.8 295.8 318.6 296.5ZM326.3 288L330.5 287.4 333.2 294 329.1 294.7ZM375.3 280L379 279.4 381.7 285.6 378 286.2ZM397.8 276.2L401.3 275.7 404 281.7 400.5 282.3ZM414.9 273.4L418.2 272.9 420.9 278.8 417.6 279.4ZM469.5 264.4L472.4 263.9 475 269.4 472.2 269.9ZM480.2 262.6L483.1 262.2 485.7 267.6 482.9 268ZM483.8 262L486.5 261.6 489.2 267 486.4 267.4ZM504.1 258.7L506.7 258.3 509.3 263.5 506.7 263.9ZM517 256.5L519.6 256.1 522.2 261.2 519.6 261.7ZM529.5 254.5L532 254.1 534.5 259.1 532.1 259.5ZM532.6 254L535 253.6 537.5 258.6 535.1 259ZM595.8 243.5L597.8 243.2 600.2 247.7 598.2 248.1ZM392.1 284.9L395.6 284.2 398.4 290.4 394.8 291ZM405.3 282.6L408.7 282 411.4 288 408 288.6ZM409.6 281.8L413 281.2 415.7 287.2 412.3 287.8ZM418 280.3L421.4 279.7 424.1 285.7 420.7 286.3ZM479.8 269.5L482.6 269.1 485.2 274.5 482.4 275ZM544.5 258.2L546.9 257.8 549.4 262.8 547.1 263.2ZM556.1 256.2L558.4 255.8 560.9 260.7 558.6 261.1ZM386.2 293.7L389.9 293 392.6 299.3 389 300ZM399.7 291.2L403.2 290.6 406 296.7 402.4 297.4ZM404.1 290.4L407.6 289.8 410.3 295.9 406.8 296.6ZM479.3 276.6L482.1 276.1 484.8 281.6 482 282.1ZM500.2 272.7L502.9 272.2 505.5 277.6 502.8 278.1ZM506.9 271.5L509.5 271 512.2 276.3 509.5 276.8ZM553.3 262.9L555.6 262.5 558.2 267.4 555.9 267.9ZM594 255.5L596 255.1 598.5 259.7 596.5 260.1ZM335.9 311.4L340.1 310.6 342.9 317.4 338.7 318.2ZM489.5 281.6L492.3 281.1 495 286.6 492.2 287.2ZM506.6 278.3L509.3 277.8 511.9 283.2 509.3 283.7ZM513.2 277L515.9 276.5 518.5 281.8 515.9 282.4ZM378.7 311.3L382.5 310.5 385.3 317 381.5 317.8ZM383.4 310.3L387.1 309.5 389.9 316 386.2 316.8ZM496.1 287.4L498.8 286.8 501.5 292.3 498.8 292.9ZM499.5 286.6L502.3 286.1 505 291.6 502.2 292.1ZM529.2 280.6L531.7 280.1 534.3 285.3 531.8 285.9ZM538.5 278.7L540.9 278.2 543.6 283.4 541.1 283.9ZM391.3 316.8L395 316.1 397.8 322.5 394.1 323.3ZM400.4 314.9L404 314.1 406.8 320.5 403.2 321.3ZM499.2 293.8L502 293.2 504.7 298.7 501.9 299.3ZM481 305L483.9 304.4 486.6 310.1 483.7 310.8ZM529 294.3L531.5 293.7 534.2 299 531.7 299.6ZM541.6 291.4L544 290.9 546.7 296.1 544.2 296.7ZM544.6 290.8L547.1 290.2 549.7 295.4 547.3 296ZM550.7 289.4L553.1 288.9 555.7 294 553.3 294.6ZM576.6 283.6L578.8 283.1 581.4 288 579.2 288.5ZM349.1 343.4L353.2 342.4 356 349.4 351.9 350.4ZM347.2 352.8L351.4 351.8 354.2 358.8 350.1 359.9ZM352.4 351.5L356.5 350.5 359.4 357.5 355.3 358.5ZM382.3 344.2L386.2 343.2 389.1 350 385.2 350.9ZM387.1 343L390.9 342.1 393.8 348.8 390 349.7ZM544.7 304.4L547.2 303.8 549.8 309.1 547.4 309.8ZM574.3 297.2L576.6 296.6 579.2 301.7 576.9 302.3ZM577.1 296.5L579.4 296 582 301 579.8 301.6ZM590.8 293.1L593 292.6 595.6 297.5 593.4 298.1ZM596.2 291.8L598.3 291.3 600.8 296.2 598.7 296.7ZM355.8 359.7L359.9 358.6 362.8 365.7 358.7 366.8ZM399.9 348.4L403.6 347.5 406.5 354.1 402.8 355.1ZM544.7 311.4L547.2 310.8 549.9 316.2 547.4 316.8ZM554 309.1L556.4 308.5 559.1 313.7 556.7 314.4ZM577.4 303.1L579.6 302.5 582.3 307.6 580 308.2ZM607 295.5L609 295 611.6 299.9 609.6 300.4ZM353.9 369.3L358.1 368.2 361 375.4 356.9 376.5ZM389.1 360L392.9 359 395.8 365.8 392 366.8ZM486.5 334L489.5 333.3 492.3 339.2 489.3 340ZM501.1 330.2L503.9 329.4 506.7 335.2 503.9 336ZM602.2 303.2L604.3 302.7 606.9 307.6 604.8 308.2ZM615 299.8L617 299.3 619.6 304.1 617.6 304.7ZM352.1 379.1L356.3 378 359.3 385.2 355 386.4ZM362.5 376.2L366.7 375.1 369.6 382.3 365.5 383.4ZM382.7 370.7L386.6 369.6 389.6 376.5 385.7 377.7ZM397.2 366.6L401 365.6 404 372.4 400.2 373.5ZM566.2 319.8L568.6 319.1 571.3 324.4 569 325.1ZM623 304.1L625 303.5 627.6 308.3 625.6 308.9ZM381.2 380.2L385.2 379.1 388.1 386.1 384.2 387.3ZM391 377.4L394.9 376.3 397.9 383.2 394 384.4ZM410 371.9L413.7 370.9 416.7 377.6 413 378.7ZM544.8 333.1L547.3 332.3 550.1 337.9 547.6 338.6ZM560.4 328.6L562.8 327.9 565.6 333.3 563.1 334ZM374.6 391.5L378.6 390.3 381.6 397.5 377.6 398.8ZM389.6 387L393.5 385.8 396.5 392.9 392.6 394.1ZM399.3 384.1L403.1 382.9 406.1 389.9 402.3 391.1ZM461.3 365.5L464.6 364.5 467.5 370.9 464.3 371.9ZM557.5 336.7L559.9 336 562.7 341.5 560.2 342.2ZM456.5 375.5L459.8 374.5 462.8 381 459.4 382.1ZM460.6 374.3L463.9 373.2 466.9 379.7 463.6 380.8ZM554.4 345.1L557 344.3 559.8 349.9 557.2 350.7ZM563.8 342.2L566.2 341.4 569 346.9 566.5 347.7ZM566.8 341.2L569.2 340.5 572 346 569.6 346.7ZM632.1 320.9L634.1 320.3 636.7 325.2 634.8 325.8ZM464.1 381.8L467.3 380.8 470.3 387.3 467 388.4ZM551.3 353.7L553.9 352.8 556.7 358.5 554.2 359.4ZM557.7 351.6L560.2 350.8 563 356.4 560.5 357.2ZM423.9 404L427.6 402.8 430.6 409.8 426.9 411ZM428.5 402.5L432.1 401.3 435.2 408.2 431.5 409.4ZM454.9 393.6L458.3 392.5 461.3 399.2 457.9 400.3ZM491.4 381.4L494.5 380.4 497.4 386.7 494.4 387.8ZM499 378.9L502 377.9 505 384.1 502 385.1ZM506.5 376.4L509.5 375.4 512.4 381.6 509.4 382.6ZM510.2 375.2L513.1 374.2 516 380.3 513.1 381.3ZM548.2 362.4L550.8 361.6 553.6 367.3 551 368.2ZM373.1 431L377.3 429.5 380.4 437.1 376.2 438.6ZM441 407.5L444.6 406.2 447.6 413.1 444.1 414.4ZM445.5 405.9L449 404.7 452 411.6 448.5 412.8ZM479.1 394.3L482.3 393.2 485.3 399.7 482.1 400.8ZM534.8 375L537.5 374 540.4 380 537.7 381ZM538.2 373.8L540.9 372.9 543.8 378.8 541.1 379.7ZM564.3 364.8L566.8 363.9 569.6 369.6 567.1 370.5ZM567.4 363.7L569.9 362.8 572.7 368.5 570.3 369.3ZM582.5 358.4L584.9 357.6 587.7 363.1 585.4 364ZM588.4 356.4L590.7 355.6 593.5 361 591.2 361.9ZM613.4 347.7L615.6 347 618.3 352.2 616.2 352.9ZM618.7 345.9L620.8 345.2 623.5 350.3 621.5 351.1ZM502.1 394.9L505.2 393.8 508.1 400.1 505.1 401.3ZM524.2 386.9L527.1 385.9 530 392.1 527.2 393.1ZM558.1 374.8L560.7 373.9 563.5 379.7 561 380.6ZM564.5 372.5L567 371.6 569.9 377.4 567.3 378.3ZM567.6 371.4L570.1 370.5 573 376.2 570.5 377.1ZM594.5 361.7L596.8 360.9 599.6 366.4 597.3 367.2ZM654 340.4L655.9 339.7 658.5 344.6 656.7 345.3Z" fill="#bd856c"/><path d="M442.6 208.4L445.5 208.2 448 213.4 445.1 213.6ZM453.5 207.5L456.3 207.2 458.8 212.4 456 212.6ZM503.4 203.2L505.8 203 508.3 207.8 505.8 208ZM535.9 200.4L538.2 200.2 540.6 204.8 538.3 205ZM538.7 200.2L541 200 543.4 204.5 541.1 204.7ZM394.7 219.3L398 219 400.6 224.6 397.3 224.9ZM403 218.5L406.2 218.2 408.8 223.7 405.5 224.1ZM449.2 214.1L452.1 213.9 454.6 219.1 451.7 219.4ZM466.9 212.5L469.7 212.2 472.2 217.3 469.4 217.6ZM480.5 211.2L483.1 211 485.6 215.9 483 216.2ZM509.3 208.5L511.7 208.3 514.2 213 511.8 213.3ZM568.4 202.9L570.4 202.7 572.8 207.1 570.7 207.3ZM299.5 235.9L303.7 235.5 306.3 241.8 302.1 242.3ZM325 233.3L328.9 232.9 331.5 239 327.6 239.5ZM401.8 225.4L405.1 225.1 407.7 230.7 404.4 231ZM414 224.1L417.2 223.8 419.8 229.3 416.6 229.7ZM448.5 220.6L451.4 220.3 453.9 225.6 451 225.9ZM462.8 219.1L465.6 218.8 468.2 224 465.4 224.3ZM527.2 212.5L529.5 212.3 531.9 217 529.6 217.2ZM560.7 209.1L562.8 208.9 565.2 213.3 563.1 213.6ZM565.9 208.6L568 208.3 570.4 212.8 568.3 213ZM444 227.6L447 227.2 449.6 232.6 446.6 232.9ZM451.4 226.8L454.3 226.4 456.9 231.7 454 232.1ZM455.1 226.3L458 226 460.5 231.3 457.6 231.6ZM458.7 225.9L461.5 225.6 464.1 230.9 461.2 231.2ZM462.2 225.6L465.1 225.2 467.6 230.5 464.8 230.8ZM350.4 245.4L354.2 244.9 356.8 251 353.1 251.5ZM461.6 232.1L464.5 231.7 467 237 464.2 237.4ZM353.5 252.5L357.3 252 359.9 258.2 356.1 258.7ZM415 244.6L418.2 244.2 420.8 249.9 417.6 250.3ZM492.2 234.7L494.8 234.3 497.4 239.4 494.7 239.8ZM495.5 234.3L498.1 233.9 500.6 239 498 239.3ZM488.4 241.6L491.1 241.2 493.7 246.4 491 246.7ZM491.8 241.1L494.5 240.7 497 245.9 494.4 246.3ZM501.4 246.1L504 245.8 506.6 250.9 504 251.3ZM555.8 238.2L558 237.8 560.5 242.5 558.3 242.9ZM558.6 237.8L560.8 237.4 563.3 242.1 561.1 242.5ZM372.2 272.7L375.8 272.2 378.5 278.3 374.9 278.9ZM376.8 272L380.4 271.4 383.1 277.6 379.4 278.2ZM381.3 271.3L384.9 270.7 387.6 276.9 384 277.4ZM399 268.5L402.5 268 405.1 274 401.7 274.5ZM444 261.5L447.1 261.1 449.7 266.7 446.6 267.2ZM477.2 256.4L480 255.9 482.6 261.3 479.8 261.7ZM480.7 255.8L483.5 255.4 486.1 260.7 483.3 261.2ZM572.3 241.5L574.4 241.2 576.9 245.8 574.8 246.2ZM393.4 277L396.9 276.4 399.6 282.5 396.1 283.1ZM410.7 274.1L414.1 273.6 416.8 279.5 413.4 280.1ZM439.3 269.4L442.4 268.9 445.1 274.6 441.9 275.1ZM458.5 266.2L461.4 265.7 464.1 271.3 461.1 271.8ZM487.2 261.5L490 261 492.6 266.4 489.8 266.8ZM510.6 257.6L513.2 257.2 515.8 262.3 513.2 262.8ZM600.7 242.7L602.7 242.4 605.1 246.9 603.2 247.2ZM319 297.6L323.3 296.9 326 303.6 321.8 304.4ZM369.1 288.9L372.9 288.2 375.6 294.6 371.8 295.2ZM378.5 287.2L382.1 286.6 384.9 292.9 381.2 293.5ZM383 286.4L386.7 285.8 389.4 292 385.8 292.7ZM396.5 284.1L400 283.5 402.8 289.6 399.3 290.2ZM457.8 273.4L460.8 272.9 463.5 278.5 460.5 279ZM513.7 263.6L516.2 263.2 518.8 268.4 516.3 268.8ZM523.2 262L525.7 261.5 528.3 266.6 525.8 267.1ZM322.2 305.5L326.5 304.7 329.2 311.5 325 312.3ZM327.5 304.5L331.7 303.8 334.4 310.5 330.3 311.3ZM486.4 275.3L489.2 274.8 491.8 280.2 489 280.8ZM489.9 274.6L492.7 274.1 495.3 279.5 492.5 280.1ZM510.2 270.9L512.8 270.4 515.4 275.7 512.8 276.2ZM325.4 313.5L329.7 312.6 332.5 319.5 328.2 320.3ZM330.7 312.4L334.9 311.6 337.7 318.4 333.5 319.3ZM375.5 303.7L379.3 303 382 309.4 378.3 310.2ZM389.4 301L393.1 300.3 395.8 306.7 392.2 307.4ZM475.2 284.4L478.1 283.9 480.8 289.5 477.9 290.1ZM496.4 280.3L499.2 279.8 501.8 285.2 499.1 285.8ZM499.9 279.6L502.6 279.1 505.2 284.5 502.5 285.1ZM503.3 279L505.9 278.5 508.6 283.8 505.9 284.4ZM474.6 291.7L477.6 291.1 480.3 296.8 477.3 297.4ZM516.3 283.2L518.9 282.7 521.6 288 519 288.6ZM488.7 296L491.5 295.4 494.2 301 491.4 301.7ZM492.2 295.3L495 294.7 497.7 300.2 494.9 300.9ZM502.7 293L505.4 292.4 508.1 297.9 505.4 298.6ZM509.5 291.6L512.1 291 514.8 296.4 512.1 297ZM512.8 290.9L515.5 290.3 518.1 295.7 515.5 296.3ZM544.6 284.1L547 283.5 549.7 288.7 547.2 289.2ZM519.2 296.4L521.9 295.9 524.6 301.3 521.9 301.9ZM525.8 295L528.3 294.4 531 299.8 528.5 300.4ZM420.2 326.7L423.7 325.9 426.5 332.2 423.1 333.1ZM519.1 303.5L521.7 302.9 524.4 308.4 521.8 309ZM528.9 301.2L531.5 300.6 534.2 306 531.6 306.7ZM538.4 299L540.9 298.4 543.6 303.7 541.1 304.3ZM582.4 288.7L584.6 288.2 587.2 293.1 585 293.7ZM595.8 285.6L597.9 285.1 600.4 289.9 598.4 290.4ZM341.9 354.1L346.1 353 349 360.1 344.8 361.2ZM401.2 339.6L404.8 338.7 407.7 345.2 404 346.2ZM405.7 338.4L409.4 337.6 412.2 344.1 408.6 345ZM444.7 328.9L447.9 328.1 450.8 334.3 447.5 335.1ZM468.6 323.1L471.6 322.3 474.4 328.3 471.4 329.1ZM535.2 306.8L537.8 306.1 540.5 311.5 538 312.2ZM538.4 306L540.9 305.4 543.6 310.7 541.1 311.4ZM418.1 343.8L421.6 342.9 424.5 349.4 420.9 350.3ZM468 331L471.1 330.2 473.9 336.3 470.8 337.1ZM538.4 313.1L540.9 312.4 543.7 317.8 541.1 318.5ZM541.6 312.2L544.1 311.6 546.8 317 544.3 317.7ZM384.2 361.3L388.1 360.2 391 367.1 387.1 368.2ZM438.8 346.7L442.1 345.8 445 352.2 441.6 353.2ZM447.1 344.5L450.5 343.6 453.3 349.9 450 350.8ZM475.1 337.1L478.2 336.3 481 342.3 478 343.1ZM627.3 296.6L629.3 296 631.8 300.7 629.9 301.3ZM387.6 369.3L391.5 368.2 394.4 375.1 390.6 376.3ZM392.5 368L396.3 366.9 399.2 373.8 395.4 374.9ZM442.1 354.2L445.5 353.3 448.4 359.7 445 360.6ZM446.3 353L449.7 352.1 452.5 358.5 449.2 359.4ZM500.8 337.9L503.6 337.1 506.5 343 503.6 343.9ZM563.3 320.6L565.6 320 568.4 325.3 566 326ZM602.6 309.7L604.7 309.1 607.4 314.1 605.3 314.7ZM605.3 309L607.3 308.4 610 313.4 607.9 314ZM395.9 376L399.7 374.9 402.7 381.8 398.8 383ZM419.2 369.3L422.8 368.2 425.7 374.9 422.1 376ZM436.9 364.2L440.4 363.2 443.3 369.7 439.8 370.7ZM581 322.6L583.3 322 586 327.2 583.7 327.9ZM626.1 309.7L628 309.1 630.6 313.9 628.7 314.5ZM384.7 388.5L388.6 387.3 391.6 394.4 387.6 395.6ZM394.5 385.5L398.4 384.4 401.3 391.4 397.5 392.6ZM422.6 377.1L426.2 376 429.2 382.8 425.6 383.9ZM548 339.6L550.6 338.8 553.4 344.4 550.8 345.2ZM575.5 331.3L577.9 330.6 580.6 335.9 578.3 336.7ZM611.4 320.6L613.5 319.9 616.2 324.9 614.1 325.6ZM584.5 335.7L586.8 335 589.5 340.3 587.3 341.1ZM420.4 395.9L424.1 394.7 427.1 401.6 423.4 402.9ZM434 391.5L437.6 390.4 440.6 397.2 437 398.3ZM570.3 355.1L572.7 354.2 575.5 359.8 573.1 360.6ZM573.3 354L575.7 353.2 578.5 358.8 576.1 359.6ZM579.3 352L581.6 351.3 584.4 356.7 582.1 357.5ZM576.6 360.5L579 359.7 581.8 365.2 579.4 366.1ZM551.6 377.1L554.2 376.2 557.1 382.1 554.5 383ZM554.9 376L557.4 375 560.3 380.9 557.8 381.8ZM582.9 365.9L585.2 365.1 588.1 370.6 585.7 371.5ZM585.8 364.9L588.2 364 591 369.5 588.6 370.4ZM588.8 363.8L591.1 363 593.9 368.5 591.6 369.3ZM591.7 362.8L594 361.9 596.8 367.4 594.5 368.3ZM597.4 360.7L599.7 359.9 602.5 365.3 600.2 366.1Z" fill="#b47c64"/><path d="M547 199.5L549.2 199.3 551.6 203.7 549.4 203.9ZM544.3 205.2L546.5 205 548.9 209.5 546.7 209.7ZM490 216.3L492.6 216.1 495.1 221 492.5 221.3ZM515.2 213.8L517.6 213.5 520.1 218.3 517.7 218.6ZM541.5 211.1L543.8 210.8 546.2 215.4 544 215.7ZM521.1 219L523.5 218.7 526 223.5 523.6 223.8ZM547.2 216.1L549.4 215.9 551.8 220.5 549.6 220.7ZM520.8 231L523.2 230.7 525.7 235.6 523.3 235.9ZM520.7 237.1L523.1 236.8 525.6 241.7 523.2 242.1ZM571.9 230.1L574 229.8 576.4 234.3 574.3 234.6ZM577.1 229.4L579.2 229.1 581.6 233.6 579.6 233.9ZM532.7 241.5L535.1 241.2 537.6 246.1 535.2 246.5ZM407.6 267.2L410.9 266.7 413.6 272.6 410.3 273.1ZM535.6 247.3L538 246.9 540.5 251.8 538.2 252.2ZM564.5 254.7L566.7 254.4 569.3 259.2 567 259.6ZM567.5 260.3L569.7 259.9 572.2 264.7 570 265.2ZM559.2 268.1L561.5 267.7 564 272.6 561.8 273.1ZM562.2 273.9L564.4 273.4 567 278.4 564.8 278.9ZM458.9 302.4L462 301.7 464.7 307.6 461.7 308.3ZM568 279.1L570.3 278.6 572.9 283.5 570.6 284ZM607.7 270.6L609.7 270.2 612.2 274.8 610.2 275.2ZM610.2 270L612.1 269.6 614.6 274.2 612.7 274.7ZM618 274.3L619.9 273.9 622.4 278.5 620.5 278.9ZM498.5 308.4L501.4 307.7 504.1 313.3 501.3 314ZM556.7 294.7L559.1 294.2 561.8 299.3 559.4 299.9ZM491 317.6L493.9 316.9 496.7 322.6 493.8 323.4ZM366 357.1L370 356.1 372.9 363 368.9 364.1ZM494.2 324.3L497.1 323.6 499.9 329.4 497 330.2ZM593.9 298.9L596 298.3 598.6 303.3 596.5 303.8ZM615.6 306.1L617.6 305.6 620.2 310.4 618.2 311ZM618.1 305.4L620.1 304.9 622.7 309.7 620.7 310.3ZM360.8 386.1L364.9 384.9 367.9 392.2 363.8 393.4ZM621.7 317.5L623.7 316.9 626.3 321.8 624.3 322.4ZM383.1 398.4L387.1 397.1 390.1 404.3 386.1 405.6ZM401.5 402L405.3 400.8 408.3 407.9 404.5 409.2ZM416.9 425.4L420.7 424.1 423.8 431.3 420 432.7Z" fill="#eab296"/><path d="M552.5 199L554.6 198.8 557 203.2 554.8 203.4ZM463.4 212.8L466.2 212.5 468.7 217.7 465.9 217.9ZM512.4 208.2L514.8 208 517.2 212.7 514.8 213ZM565.8 203.2L567.8 203 570.2 207.4 568.1 207.6ZM309.9 234.8L314 234.4 316.6 240.7 312.5 241.1ZM320 233.8L324 233.4 326.6 239.6 322.6 240ZM512.2 214.1L514.6 213.8 517.1 218.6 514.6 218.9ZM518.2 213.4L520.6 213.2 523.1 218 520.7 218.2ZM549.9 210.2L552.1 210 554.5 214.5 552.3 214.8ZM552.6 209.9L554.8 209.7 557.2 214.2 555 214.5ZM555.3 209.6L557.5 209.4 559.9 213.9 557.7 214.2ZM558 209.4L560.1 209.2 562.5 213.6 560.4 213.9ZM302.5 243.3L306.7 242.8 309.3 249.2 305.1 249.7ZM307.7 242.7L311.9 242.3 314.5 248.6 310.4 249.1ZM318 241.6L322 241.1 324.6 247.4 320.6 247.9ZM323 241L327 240.6 329.6 246.8 325.6 247.3ZM404.8 231.9L408.1 231.6 410.7 237.2 407.4 237.6ZM515 219.7L517.5 219.4 519.9 224.2 517.5 224.5ZM555.4 215.2L557.6 215 560 219.5 557.8 219.8ZM558.1 214.9L560.3 214.7 562.7 219.2 560.5 219.4ZM420 237.1L423.2 236.7 425.8 242.3 422.6 242.7ZM489.2 228.8L491.9 228.4 494.4 233.5 491.8 233.9ZM502.3 227.2L504.8 226.9 507.3 231.9 504.8 232.2ZM508.6 226.4L511.1 226.1 513.6 231.1 511.1 231.4ZM514.8 225.7L517.3 225.4 519.8 230.3 517.3 230.6ZM560.9 220.2L563.1 219.9 565.5 224.5 563.4 224.7ZM367.5 250.7L371.1 250.3 373.8 256.3 370.1 256.8ZM372 250.1L375.6 249.7 378.3 255.7 374.7 256.2ZM381 249L384.5 248.5 387.1 254.5 383.6 254.9ZM471.7 237.3L474.5 237 477.1 242.2 474.3 242.6ZM482.1 236L484.8 235.6 487.3 240.8 484.6 241.2ZM502 233.4L504.5 233.1 507.1 238.1 504.5 238.5ZM508.4 232.6L510.9 232.3 513.4 237.2 510.9 237.6ZM514.6 231.8L517.1 231.5 519.6 236.4 517.2 236.7ZM517.7 231.4L520.2 231.1 522.7 236 520.3 236.3ZM523.9 230.6L526.3 230.3 528.8 235.2 526.4 235.5ZM535.7 229.1L538.1 228.8 540.6 233.5 538.2 233.9ZM555.6 226.5L557.8 226.2 560.2 230.9 558.1 231.2ZM561.1 225.8L563.2 225.5 565.7 230.1 563.5 230.4ZM566.4 225.1L568.5 224.9 571 229.4 568.9 229.7ZM571.7 224.5L573.8 224.2 576.2 228.7 574.1 229ZM495.1 240.6L497.8 240.3 500.3 245.4 497.7 245.8ZM511.3 238.4L513.8 238.1 516.4 243.1 513.8 243.4ZM517.6 237.5L520 237.2 522.6 242.2 520.1 242.5ZM523.7 236.7L526.2 236.4 528.7 241.3 526.2 241.6ZM552.9 232.7L555.1 232.4 557.6 237.1 555.4 237.4ZM558.5 231.9L560.6 231.6 563.1 236.3 560.9 236.6ZM592.3 227.3L594.2 227 596.7 231.4 594.7 231.7ZM325.2 272L329.3 271.4 332 277.9 327.9 278.5ZM488 248.1L490.8 247.7 493.3 252.9 490.6 253.3ZM494.8 247.1L497.4 246.7 500 251.9 497.4 252.3ZM504.7 245.7L507.2 245.3 509.8 250.4 507.2 250.8ZM523.6 242.9L526 242.5 528.6 247.5 526.1 247.9ZM538.6 240.7L541 240.3 543.5 245.2 541.1 245.5ZM577.4 235L579.4 234.7 581.9 239.2 579.8 239.6ZM424.2 264.6L427.4 264.1 430.1 269.9 426.8 270.4ZM541.5 246.3L543.9 246 546.4 250.8 544.1 251.2ZM569.6 242L571.8 241.6 574.3 246.3 572.1 246.6ZM321.1 288.9L325.3 288.2 328 294.9 323.9 295.6ZM331.5 287.2L335.6 286.5 338.3 293.1 334.2 293.8ZM336.6 286.3L340.6 285.7 343.3 292.2 339.3 292.9ZM520.2 256L522.7 255.6 525.3 260.7 522.8 261.1ZM526.4 255L528.9 254.6 531.5 259.6 529 260.1ZM567.1 248.3L569.3 247.9 571.8 252.6 569.6 253ZM593.3 244L595.3 243.6 597.7 248.1 595.7 248.5ZM364.4 289.7L368.2 289 370.9 295.4 367.1 296.1ZM472.6 270.8L475.5 270.3 478.1 275.8 475.2 276.3ZM476.2 270.2L479.1 269.7 481.7 275.2 478.8 275.7ZM558.9 255.7L561.2 255.3 563.7 260.2 561.5 260.6ZM572.7 253.3L574.9 252.9 577.4 257.7 575.2 258.1ZM475.7 277.2L478.6 276.7 481.2 282.3 478.4 282.8ZM523.1 268.5L525.6 268 528.2 273.2 525.7 273.7ZM575.7 258.8L577.8 258.4 580.3 263.2 578.2 263.6ZM420.2 295.1L423.5 294.4 426.3 300.5 422.9 301.2ZM522.9 275.2L525.5 274.7 528.1 279.9 525.6 280.4ZM562 267.6L564.3 267.1 566.8 272 564.6 272.5ZM388.1 309.4L391.7 308.6 394.5 315 390.8 315.8ZM410.5 304.8L414 304.1 416.7 310.3 413.3 311ZM427.6 301.3L430.9 300.6 433.6 306.7 430.3 307.4ZM519.6 282.6L522.2 282 524.8 287.3 522.2 287.9ZM550.6 276.3L552.9 275.8 555.5 280.8 553.2 281.3ZM559.3 274.5L561.6 274 564.2 279 561.9 279.5ZM565 273.3L567.3 272.8 569.8 277.8 567.6 278.3ZM362.7 323L366.6 322.1 369.4 328.8 365.5 329.7ZM418 311.1L421.5 310.4 424.3 316.6 420.8 317.4ZM522.7 288.8L525.2 288.2 527.9 293.5 525.3 294.1ZM532.2 286.7L534.8 286.2 537.4 291.4 534.9 292ZM570.8 278.5L573.1 278 575.6 282.9 573.4 283.4ZM469.8 307.5L472.8 306.8 475.5 312.7 472.5 313.4ZM505.8 299.5L508.5 298.8 511.2 304.4 508.5 305ZM532.2 293.5L534.7 293 537.4 298.3 534.9 298.9ZM559.6 287.4L561.9 286.9 564.5 292 562.2 292.5ZM562.5 286.8L564.8 286.2 567.4 291.3 565.1 291.8ZM608.1 276.5L610.1 276.1 612.7 280.8 610.7 281.2ZM613.1 275.4L615.1 275 617.6 279.6 615.6 280.1ZM615.5 274.9L617.5 274.4 620 279.1 618.1 279.5ZM441.4 321.7L444.7 321 447.5 327.1 444.2 327.9ZM502 307.5L504.8 306.9 507.6 312.5 504.8 313.2ZM509 305.9L511.7 305.3 514.4 310.8 511.7 311.5ZM613.6 281.4L615.5 280.9 618.1 285.6 616.1 286.1ZM618.5 280.3L620.4 279.8 622.9 284.4 621 284.9ZM620.9 279.7L622.8 279.2 625.3 283.9 623.4 284.3ZM460.8 325L463.9 324.2 466.7 330.2 463.6 331ZM464.7 324L467.8 323.3 470.6 329.3 467.5 330.1ZM483.7 319.4L486.6 318.6 489.4 324.5 486.5 325.2ZM498.2 315.8L501 315.1 503.8 320.8 501 321.6ZM553.9 302.2L556.3 301.6 558.9 306.8 556.5 307.5ZM588.1 293.8L590.3 293.3 592.9 298.2 590.8 298.8ZM376 354.5L379.9 353.5 382.8 360.4 378.9 361.4ZM504.9 321.6L507.7 320.9 510.5 326.6 507.7 327.3ZM532 314.7L534.6 314 537.3 319.5 534.7 320.2ZM568.8 305.3L571.1 304.7 573.8 309.9 571.5 310.5ZM599.2 297.5L601.3 297 603.9 301.9 601.8 302.4ZM364.3 366.6L368.3 365.5 371.3 372.5 367.2 373.7ZM374.4 363.9L378.3 362.8 381.3 369.8 377.3 370.9ZM379.3 362.6L383.2 361.5 386.2 368.4 382.2 369.5ZM467.3 339.1L470.5 338.3 473.3 344.4 470.2 345.3ZM538.4 320.2L540.9 319.6 543.7 325 541.1 325.7ZM557.1 315.3L559.5 314.6 562.2 319.9 559.8 320.6ZM604.8 302.6L606.9 302 609.5 306.9 607.4 307.5ZM357.3 377.7L361.5 376.5 364.5 383.7 360.3 384.9ZM420.3 360.2L423.9 359.2 426.8 365.9 423.2 366.9ZM433.5 356.6L437 355.6 439.9 362.1 436.4 363.1ZM450.5 351.9L453.8 351 456.7 357.3 453.4 358.2ZM462.7 348.5L465.9 347.6 468.8 353.8 465.6 354.7ZM547.9 324.9L550.4 324.2 553.2 329.6 550.7 330.4ZM551 324L553.5 323.3 556.3 328.8 553.8 329.5ZM557.2 322.3L559.6 321.6 562.4 327 559.9 327.7ZM620.6 304.8L622.5 304.2 625.1 309 623.2 309.6ZM428.2 366.7L431.7 365.7 434.6 372.3 431.1 373.3ZM441.2 362.9L444.6 361.9 447.5 368.4 444.1 369.5ZM449.7 360.5L453 359.5 455.9 365.9 452.6 366.9ZM458 358.1L461.2 357.2 464.1 363.5 460.9 364.5ZM474 353.5L477.1 352.6 480 358.8 476.9 359.7ZM569.4 326L571.8 325.3 574.5 330.6 572.1 331.3ZM613.5 313.3L615.6 312.7 618.2 317.6 616.1 318.2ZM623.6 310.4L625.6 309.8 628.2 314.6 626.2 315.2ZM630.9 308.3L632.9 307.7 635.5 312.5 633.5 313ZM453.1 368L456.4 367 459.3 373.5 456 374.5ZM457.2 366.7L460.5 365.8 463.4 372.2 460.2 373.2ZM477.3 360.7L480.5 359.8 483.4 366 480.2 367ZM518 348.6L520.8 347.7 523.6 353.6 520.8 354.4ZM569.6 333.1L572 332.4 574.7 337.8 572.4 338.5ZM624.2 316.8L626.1 316.2 628.8 321 626.8 321.7ZM626.6 316L628.6 315.4 631.2 320.3 629.3 320.9ZM507.1 359.8L510 358.9 512.9 364.9 510 365.9ZM521.3 355.4L524.1 354.5 526.9 360.4 524.2 361.3ZM622.2 324L624.2 323.4 626.9 328.3 624.9 329ZM627.2 322.5L629.2 321.8 631.8 326.7 629.9 327.4ZM391.6 405.2L395.6 403.9 398.6 411.1 394.7 412.4ZM406.3 400.5L410.1 399.2 413.1 406.3 409.3 407.6ZM468.2 380.5L471.4 379.4 474.4 385.9 471.1 387ZM488 374.1L491.1 373.1 494 379.4 490.9 380.4ZM503.1 369.2L506.1 368.3 509 374.4 506 375.4ZM635.2 326.6L637.2 326 639.8 330.9 637.9 331.5ZM475.7 386.7L478.9 385.6 481.8 392.1 478.6 393.2ZM495.3 380.1L498.3 379.1 501.2 385.4 498.2 386.5ZM541.6 364.6L544.2 363.8 547.1 369.6 544.5 370.5ZM623.3 337.3L625.4 336.6 628.1 341.7 626 342.4ZM383.5 427.4L387.6 426 390.7 433.4 386.6 434.9ZM388.7 425.6L392.7 424.2 395.8 431.6 391.7 433.1ZM427.4 412.2L431.1 410.9 434.1 417.9 430.5 419.2ZM462.7 400L466 398.8 469 405.5 465.7 406.7ZM541.6 372.6L544.3 371.7 547.2 377.6 544.5 378.5ZM544.9 371.5L547.6 370.5 550.5 376.4 547.8 377.4ZM639 338.9L640.9 338.2 643.6 343.2 641.7 343.9ZM541.6 380.7L544.3 379.8 547.2 385.7 544.5 386.7ZM576.8 368.1L579.3 367.2 582.1 372.8 579.7 373.7ZM614 354.8L616.1 354 618.9 359.2 616.7 360ZM649.3 342.1L651.2 341.4 653.9 346.3 652 347Z" fill="#d8a085"/><path d="M568.2 197.6L570.2 197.5 572.6 201.8 570.5 202ZM445.5 214.5L448.5 214.2 451 219.5 448.1 219.7ZM452.8 213.8L455.7 213.5 458.2 218.7 455.3 219ZM405.9 225L409.2 224.6 411.8 230.2 408.5 230.6ZM444.8 221L447.7 220.7 450.3 226 447.3 226.3ZM337.8 239.4L341.7 239 344.3 245.1 340.4 245.5ZM450.7 233.4L453.7 233 456.2 238.4 453.3 238.8ZM458 232.5L460.9 232.2 463.5 237.5 460.6 237.8ZM390.2 269.9L393.8 269.4 396.5 275.4 392.9 276ZM394.6 269.2L398.1 268.7 400.8 274.7 397.3 275.3ZM370.6 280.7L374.4 280.1 377.1 286.4 373.4 287ZM379.9 279.2L383.5 278.6 386.2 284.8 382.6 285.4ZM406.4 274.8L409.8 274.3 412.5 280.2 409.1 280.8ZM413.8 281.1L417.2 280.5 419.9 286.5 416.5 287.1ZM516.9 263.1L519.4 262.6 522 267.8 519.5 268.3ZM381.6 294.6L385.3 293.9 388.1 300.2 384.4 300.9ZM468.4 278.6L471.3 278 474 283.7 471 284.2ZM493.3 274L496.1 273.5 498.7 278.9 496 279.4ZM496.8 273.4L499.5 272.9 502.1 278.2 499.4 278.8ZM544.5 264.6L546.9 264.1 549.5 269.1 547.1 269.6ZM328.7 321.5L332.9 320.6 335.7 327.5 331.5 328.4ZM334 320.4L338.1 319.5 341 326.4 336.8 327.3ZM492.6 288.1L495.4 287.5 498.1 293 495.3 293.6ZM509.7 284.6L512.4 284 515 289.4 512.4 290ZM332 329.5L336.2 328.6 339 335.6 334.8 336.5ZM541.6 284.7L544 284.2 546.6 289.4 544.2 289.9ZM335.3 337.6L339.5 336.7 342.3 343.7 338.1 344.7ZM522.4 302.8L525 302.2 527.7 307.6 525.1 308.2ZM414.7 336.2L418.3 335.4 421.1 341.8 417.6 342.7ZM532 307.5L534.6 306.9 537.3 312.3 534.8 313ZM385.7 352L389.5 351.1 392.4 357.8 388.6 358.9ZM390.5 350.8L394.3 349.9 397.2 356.6 393.4 357.6ZM426.8 341.5L430.3 340.7 433.2 347.1 429.7 348ZM569.2 319L571.5 318.3 574.3 323.6 571.9 324.3ZM575 317.4L577.3 316.7 580 321.9 577.7 322.6ZM632.7 301.4L634.6 300.9 637.2 305.6 635.3 306.1ZM572.4 325.1L574.7 324.5 577.4 329.8 575.1 330.5ZM608.3 314.8L610.4 314.2 613.1 319.1 611 319.8ZM595.4 325.4L597.6 324.7 600.3 329.9 598.1 330.5ZM551.5 369.2L554.1 368.3 557 374.1 554.4 375ZM554.8 368.1L557.3 367.2 560.2 372.9 557.6 373.9ZM579.6 359.5L581.9 358.6 584.8 364.2 582.4 365Z" fill="#ab735c"/><path d="M434.4 215.5L437.4 215.3 439.9 220.6 436.9 220.9ZM400.9 283.3L404.4 282.7 407.1 288.8 403.6 289.4ZM448.7 289.6L451.8 289 454.5 294.8 451.4 295.4ZM456.4 288.1L459.5 287.5 462.2 293.2 459.1 293.8ZM411.4 328.8L415 327.9 417.8 334.3 414.3 335.2ZM603.5 322.9L605.6 322.3 608.3 327.4 606.2 328ZM606.2 322.1L608.3 321.5 611 326.6 608.8 327.2Z" fill="#a46458"/><path d="M290.68 229.07L580.72 201.77M293.69 236.48L583.45 206.76M296.72 243.95L586.19 211.77M299.76 251.47L588.94 216.81M302.83 259.04L591.71 221.88M305.92 266.67L594.49 226.96M309.03 274.34L597.29 232.07M312.16 282.08L600.1 237.21M315.32 289.86L602.92 242.37M318.5 297.7L605.75 247.55M321.7 305.6L608.6 252.76M324.92 313.56L611.46 257.99M328.16 321.57L614.34 263.25M331.43 329.63L617.23 268.54M334.73 337.76L620.13 273.85M338.04 345.95L623.05 279.19M341.38 354.19L625.98 284.55M344.75 362.5L628.93 289.94M348.14 370.86L631.89 295.35M351.55 379.29L634.86 300.79M354.99 387.78L637.85 306.26M358.46 396.33L640.86 311.75M361.95 404.95L643.88 317.28M365.47 413.62L646.91 322.83M369.01 422.37L649.96 328.4M372.58 431.18L653.02 334.01M376.18 440.06L656.1 339.64" stroke="#5e3022" stroke-opacity="0.5" stroke-width="1" fill="none"/></g></g><polygon points="287.7,221.7 578,196.8 659.2,345.3 379.8,449" fill="none" stroke="#7a4a38" stroke-width="0.7"/><path d="M288.2 222.2L380.2 448.5L658.6 344.8" fill="none" stroke="#5e3a26" stroke-width="1.3" stroke-opacity="0.85"/><path d="M411.5 393.2 L439.5 393.2 M425.6 379.6 L425.6 407" stroke="#2a1a14" stroke-width="0.8"/><path d="M189.7 235 L190.9 243.3 L192.4 244.2 M183.2 244.2 L190.9 243.4" stroke="#111" stroke-width="1.3" fill="none"/></svg>
<span class="t" style="left:187.5px;top:222.8px;font-size:7.4px;line-height:9.4px;font-weight:bold;color:#222;">z</span>
<span class="t" style="left:177.7px;top:236.6px;font-size:7.4px;line-height:9.4px;font-weight:bold;color:#333;">x</span>
<span class="t" style="left:195.8px;top:239.2px;font-size:7.4px;line-height:9.4px;font-weight:bold;color:#333;">y</span>
<div style="left:0px;top:34.2px;width:914px;height:62.4px;background:#ece9d8"></div>
<div style="left:0px;top:96.2px;width:914px;height:0.9px;background:#aca899"></div>
<div style="left:0px;top:97.1px;width:914px;height:0.7px;background:#f8f7f1"></div>
<div style="left:2px;top:37px;width:2.2px;height:16px;background:repeating-linear-gradient(#c9c6b6 0 1px,#f4f3ea 1px 2.2px)"></div>
<div style="left:2px;top:60px;width:2.2px;height:16px;background:repeating-linear-gradient(#c9c6b6 0 1px,#f4f3ea 1px 2.2px)"></div>
<div style="left:5px;top:82px;width:2.2px;height:12px;background:repeating-linear-gradient(#c9c6b6 0 1px,#f4f3ea 1px 2.2px)"></div>
<svg style="left:7px;top:39px" width="12" height="12" viewBox="0 0 12 12" ><path d="M2.6 1.4h4.6l2.6 2.6v6.8h-7.2z" fill="#fff" stroke="#222" stroke-width="1"/><path d="M7.2 1.4v2.6h2.6" fill="none" stroke="#222" stroke-width="0.7"/></svg>
<svg style="left:23.5px;top:39px" width="12" height="12" viewBox="0 0 12 12" ><path d="M1 3.6h3.2l1 1.2h4.2v5.8h-8.4z" fill="#7b7b2c" stroke="#33330c" stroke-width="0.8"/><path d="M2.8 6.4h8.6l-2 4.2h-8.4z" fill="#d8d878" stroke="#33330c" stroke-width="0.8"/><path d="M7 2.6c1.4-1.4 2.8-1.2 3.6 0" fill="none" stroke="#222" stroke-width="0.7"/></svg>
<svg style="left:35.7px;top:44px" width="5" height="3" viewBox="0 0 5 3" ><path d="M0 0h5l-2.5 2.8z" fill="#111"/></svg>
<svg style="left:44.8px;top:39px" width="12" height="12" viewBox="0 0 12 12" ><rect x="1.4" y="1.4" width="9.6" height="9.6" fill="#2e2e17" stroke="#111" stroke-width="0.6"/><rect x="3.4" y="1.8" width="5.6" height="4.2" fill="#f4f4ea"/><rect x="3.8" y="7.8" width="4.6" height="3.2" fill="#0a0a0a"/><rect x="6.6" y="8.2" width="1.2" height="2.2" fill="#cfcfb0"/></svg>
<svg style="left:60.7px;top:39px" width="12" height="12" viewBox="0 0 12 12" ><path d="M3.4 1.6h5.4l1.2 3.4h-7.8z" fill="#fff" stroke="#222" stroke-width="0.8"/><path d="M1 5h10.2v4.2h-10.2z" fill="#3b3b3b" stroke="#111" stroke-width="0.7"/><path d="M2 9.2h8.2l-0.8 1.6h-6.6z" fill="#d6d6d0" stroke="#222" stroke-width="0.6"/><rect x="2" y="6.6" width="8" height="0.9" fill="#bdbdb0"/></svg>
<div style="left:77.8px;top:36px;width:0.8px;height:18px;background:#d3d0c0"></div>
<div style="left:78.6px;top:36px;width:0.7px;height:18px;background:#f8f7f1"></div>
<svg style="left:82.6px;top:39px" width="12" height="12" viewBox="0 0 12 12" ><path d="M4 1.2l2.6 6M8.2 1.2l-2.6 6" stroke="#a09d93" stroke-width="1.1" fill="none"/><circle cx="4" cy="9" r="1.6" fill="none" stroke="#a09d93" stroke-width="1"/><circle cx="8.2" cy="9" r="1.6" fill="none" stroke="#a09d93" stroke-width="1"/></svg>
<svg style="left:99.7px;top:39px" width="12" height="12" viewBox="0 0 12 12" ><path d="M1.4 1.6h4l1.4 1.4v4.6h-5.4z" fill="#c4c1b6" stroke="#a09d93" stroke-width="0.8"/><path d="M5.2 4.6h4l1.4 1.4v4.6h-5.4z" fill="#e4e1d4" stroke="#a09d93" stroke-width="0.8"/></svg>
<svg style="left:116px;top:39px" width="12" height="12" viewBox="0 0 12 12" ><path d="M1.4 2.6h7.4v8h-7.4z" fill="#a09d93" stroke="#8e8b82" stroke-width="0.8"/><rect x="3.4" y="1.4" width="3.4" height="2" fill="#8e8b82"/><path d="M5.4 5.6h5v5.2h-5z" fill="#e4e1d4" stroke="#8e8b82" stroke-width="0.8"/></svg>
<div style="left:133px;top:36px;width:0.8px;height:18px;background:#d3d0c0"></div>
<div style="left:133.8px;top:36px;width:0.7px;height:18px;background:#f8f7f1"></div>
<svg style="left:138.4px;top:39px" width="12" height="12" viewBox="0 0 12 12" ><path d="M2 6.2l3.6-3v2c3.6-.2 4.8 1.8 4.4 4.4c-.6-1.6-1.8-2.4-4.4-2.2v2z" fill="#1c1c9a" stroke="#0c0c50" stroke-width="0.5"/></svg>
<svg style="left:154.4px;top:39px" width="12" height="12" viewBox="0 0 12 12" ><path d="M10 6.2l-3.6-3v2c-3.6-.2-4.8 1.8-4.400 4.400c.6-1.600 1.800-2.400 4.400-2.200v2z" fill="#c4c1b6" stroke="#a09d93" stroke-width="0.5"/></svg>
<div style="left:170.8px;top:36px;width:0.8px;height:18px;background:#d3d0c0"></div>
<div style="left:171.6px;top:36px;width:0.7px;height:18px;background:#f8f7f1"></div>
<svg style="left:176.7px;top:39px" width="12" height="12" viewBox="0 0 12 12" ><circle cx="5" cy="4.6" r="3.2" fill="#e6e6f4" stroke="#111" stroke-width="1.1"/><path d="M7.2 7l3.4 3.8" stroke="#111" stroke-width="1.6"/><path d="M2 10.600h5.600" stroke="#111" stroke-width="1"/><path d="M4 3.600l2 1.200l-2 1.200z" fill="#111"/></svg>
<svg style="left:192.4px;top:39px" width="12" height="12" viewBox="0 0 12 12" ><path d="M1.6 10.600l1-2.600l5-5l1.800 1.800l-5 5z" fill="#1a1a8a" stroke="#0a0a30" stroke-width="0.6"/><path d="M7.200 1.800l1.600-1l2.200 2.200l-1 1.600z" fill="#0a0a0a"/></svg>
<svg style="left:209.7px;top:39px" width="12" height="12" viewBox="0 0 12 12" ><path d="M1.400 10.800l3-3" stroke="#333" stroke-width="0.8"/><path d="M3.600 7.200l4-4l1.600 1.600l-4 4z" fill="#1a1a8a" stroke="#0a0a30" stroke-width="0.5"/><path d="M7.400 2.400l1.400-1.400l2.400 2.400l-1.400 1.400z" fill="#222"/><path d="M9.400 1l1.800 1.800" stroke="#111" stroke-width="1.1"/></svg>
<div style="left:225.9px;top:36px;width:0.8px;height:18px;background:#d3d0c0"></div>
<div style="left:226.7px;top:36px;width:0.7px;height:18px;background:#f8f7f1"></div>
<div style="left:230.7px;top:35px;width:28.5px;height:20.4px;background:linear-gradient(90deg,#fff 0%,#fff 55%,#d9d6c8 100%);border:0.8px solid #b5b2a2;border-radius:2px;box-shadow:0.4px 0.6px 0.6px rgba(90,90,80,.45)"></div>
<svg style="left:235.1px;top:38.5px" width="13" height="13" viewBox="0 0 13 13" ><path d="M1.600 3l4 6.400l4.600-7.200" fill="none" stroke="#111" stroke-width="0.8"/><path d="M2.400 3.800l5 -0.600" stroke="#111" stroke-width="0.7"/><path d="M1 9.800l9.600-8" stroke="#333" stroke-width="0.6" stroke-dasharray="1.4 1"/><circle cx="9" cy="6.400" r="1.300" fill="#111"/></svg>
<svg style="left:252.1px;top:43.4px" width="5" height="3" viewBox="0 0 5 3" ><path d="M0 0h5l-2.5 2.8z" fill="#111"/></svg>
<svg style="left:264.4px;top:39px" width="12" height="12" viewBox="0 0 12 12" ><path d="M1.400 4.200l9 4.600" stroke="#111" stroke-width="1.1"/><path d="M6 1l0 10" stroke="#333" stroke-width="0.7" stroke-dasharray="1.500 0.800"/><path d="M3.600 2.200l2.400 2.400l3-3" stroke="#111" stroke-width="0.8" fill="none"/></svg>
<svg style="left:282.1px;top:43.4px" width="5" height="3" viewBox="0 0 5 3" ><path d="M0 0h5l-2.5 2.8z" fill="#111"/></svg>
<svg style="left:293.6px;top:39.6px" width="12" height="12" viewBox="0 0 12 12" ><rect x="3" y="5" width="7.600" height="5" fill="#a09d93"/><path d="M1.400 0.800l2.400 3.200l-2.400 0.400z" fill="#a09d93"/></svg>
<svg style="left:311.5px;top:43.4px" width="5" height="3" viewBox="0 0 5 3" ><path d="M0 0h5l-2.5 2.8z" fill="#d2cfc2"/></svg>
<svg style="left:324px;top:39px" width="12" height="12" viewBox="0 0 12 12" ><circle cx="6" cy="6" r="2.800" fill="none" stroke="#555" stroke-width="0.8" stroke-dasharray="1.2 0.800"/><path d="M0.800 6h10.400M6 0.800v10.400M2.400 2.400l7.200 7.200M9.600 2.400l-7.200 7.200" stroke="#555" stroke-width="0.5" stroke-dasharray="1.600 3"/></svg>
<svg style="left:342px;top:43.4px" width="5" height="3" viewBox="0 0 5 3" ><path d="M0 0h5l-2.5 2.8z" fill="#111"/></svg>
<svg style="left:352px;top:39px" width="12" height="12" viewBox="0 0 12 12" ><path d="M1 1.200h10v4h-6v5.600h-4z" fill="#a09d93"/></svg>
<svg style="left:371px;top:39px" width="12" height="12" viewBox="0 0 12 12" ><rect x="1" y="1" width="7" height="7" fill="#a09d93"/><rect x="3.600" y="3.600" width="7" height="7" fill="#8f8c83"/></svg>
<svg style="left:387.9px;top:43.4px" width="5" height="3" viewBox="0 0 5 3" ><path d="M0 0h5l-2.5 2.8z" fill="#d2cfc2"/></svg>
<svg style="left:401px;top:39px" width="12" height="12" viewBox="0 0 12 12" ><path d="M4.600 2.800l0.800-1.600h1.200l0.800 1.600v7h-2.800z" fill="#a09d93"/></svg>
<svg style="left:418.1px;top:43.4px" width="5" height="3" viewBox="0 0 5 3" ><path d="M0 0h5l-2.5 2.8z" fill="#d2cfc2"/></svg>
<div style="left:426.6px;top:35px;width:15.8px;height:20.4px;background:#fdfdfb;border:0.8px solid #b5b2a2;border-radius:2px;box-shadow:0.4px 0.6px 0.6px rgba(90,90,80,.45)"></div>
<svg style="left:427.9px;top:38.5px" width="13" height="13" viewBox="0 0 13 13" ><path d="M1 10.200h9.600" stroke="#111" stroke-width="1.500" stroke-dasharray="1 0.600"/><path d="M1.600 8.200l2.400-3.200l4.400 1.600l-1 2.400z" fill="#111"/><path d="M3 3l2.600-1.800l3.400 2.600l-1.400 2z" fill="#fff" stroke="#111" stroke-width="0.900"/><path d="M9.600 4l1.400 5.400" stroke="#111" stroke-width="0.800"/></svg>
<svg style="left:444.6px;top:39px" width="12" height="12" viewBox="0 0 12 12" ><rect x="0.800" y="2.200" width="10.600" height="8" fill="#a09d93"/><path d="M6 2.200v8M0.800 6.200h10.600" stroke="#8b887f" stroke-width="0.700"/></svg>
<svg style="left:461px;top:39px" width="12" height="12" viewBox="0 0 12 12" ><path d="M3 3l6 6M9 3l-6 6" stroke="#a09d93" stroke-width="1.600"/><circle cx="6" cy="6" r="1.600" fill="#a09d93"/></svg>
<div style="left:477.1px;top:36px;width:0.8px;height:18px;background:#d3d0c0"></div>
<div style="left:477.9px;top:36px;width:0.7px;height:18px;background:#f8f7f1"></div>
<svg style="left:483.4px;top:39px" width="12" height="12" viewBox="0 0 12 12" ><path d="M1.600 2.400l3.400 3.600l-3.400 3.600" fill="none" stroke="#111" stroke-width="1.200"/><path d="M3 6h7" stroke="#111" stroke-width="0.900"/><path d="M10.600 3.400c-3-1-4.200 0.600-4 2.600c0.200 2 2 3 4 2" fill="#c8c8ee" stroke="#22226a" stroke-width="0.900"/></svg>
<svg style="left:500px;top:39px" width="12" height="12" viewBox="0 0 12 12" ><circle cx="5" cy="4" r="3.400" fill="#f7c9c4"/><path d="M3.600 1.600v5.600M3.600 2.200l3.200 1.600l-3.200 1.600" fill="none" stroke="#c11" stroke-width="1.200"/><path d="M7.400 2.400v8.600M6 10.800h3" stroke="#111" stroke-width="1.200"/></svg>
<svg style="left:516.4px;top:39px" width="12" height="12" viewBox="0 0 12 12" ><path d="M2.400 1.400h7.200M2.400 10.600h7.200M6 1.400v9.200M4 4l2-2l2 2M4 8l2 2l2-2" fill="none" stroke="#c4c1b6" stroke-width="1.100"/></svg>
<svg style="left:532.7px;top:39px" width="12" height="12" viewBox="0 0 12 12" ><path d="M2.400 11v-9.400h8.600" fill="none" stroke="#c4c1b6" stroke-width="1.100"/></svg>
<svg style="left:548px;top:39px" width="12" height="12" viewBox="0 0 12 12" ><path d="M2 11c0-5 3-8.600 8.600-9.200" fill="none" stroke="#c4c1b6" stroke-width="1.300"/></svg>
<svg style="left:565.4px;top:39px" width="12" height="12" viewBox="0 0 12 12" ><path d="M1.400 4.400h9.200v6h-9.200z" fill="none" stroke="#c4c1b6" stroke-width="1"/><path d="M3 4.400l1.600-2.400h2.800l1.600 2.400" fill="none" stroke="#c4c1b6" stroke-width="0.900"/></svg>
<svg style="left:581px;top:39px" width="12" height="12" viewBox="0 0 12 12" ><path d="M1 6l5-4.600l5 4.600l-1.600 0v4.600h-6.800v-4.600z" fill="#a09d93"/></svg>
<div style="left:598.1px;top:36px;width:0.8px;height:18px;background:#d3d0c0"></div>
<div style="left:598.9px;top:36px;width:0.7px;height:18px;background:#f8f7f1"></div>
<div style="left:602.8px;top:35px;width:14.6px;height:20.4px;background:#fdfdfb;border:0.8px solid #b5b2a2;border-radius:2px;box-shadow:0.4px 0.6px 0.6px rgba(90,90,80,.45)"></div>
<svg style="left:603.9px;top:38.5px" width="13" height="13" viewBox="0 0 13 13" ><rect x="4.400" y="1.400" width="6" height="5.600" fill="#fff" stroke="#1a1a60" stroke-width="0.900"/><rect x="1.600" y="4" width="6" height="5.600" fill="none" stroke="#111" stroke-width="0.900"/><path d="M1.600 9.600v1.600M7.600 9.600v1.600M4.600 2.800h3" stroke="#111" stroke-width="0.900"/></svg>
<svg style="left:620px;top:39px" width="12" height="12" viewBox="0 0 12 12" ><ellipse cx="5.400" cy="9.200" rx="4.400" ry="1.800" fill="#f8dcd8" stroke="#c43a30" stroke-width="0.800"/><path d="M4.400 8.800l1-2.600l3.600-4.600l1.600 1.200l-3.400 4.600z" fill="#111"/></svg>
<div style="left:649.4px;top:37px;width:1.4px;height:16px;background:repeating-linear-gradient(#b9b5a4 0 1px,#f6f5ee 1px 2.2px)"></div>
<svg style="left:656.4px;top:38.8px" width="12.4" height="12.4" viewBox="0 0 12.4 12.4" ><rect x="0.800" y="1.200" width="10.800" height="9.200" fill="#f2f2fa" stroke="#15153c" stroke-width="1.200"/><path d="M3 3.600h3v2.400h3v2.800h-6z" fill="#fff" stroke="#111" stroke-width="0.800"/></svg>
<svg style="left:677.1px;top:43.4px" width="5" height="3" viewBox="0 0 5 3" ><path d="M0 0h5l-2.5 2.8z" fill="#111"/></svg>
<div style="left:685.8px;top:35px;width:31px;height:20.4px;background:linear-gradient(90deg,#fff 0%,#fff 55%,#d9d6c8 100%);border:0.8px solid #b5b2a2;border-radius:2px;box-shadow:0.4px 0.6px 0.6px rgba(90,90,80,.45)"></div>
<svg style="left:689.8px;top:38.8px" width="12.4" height="12.4" viewBox="0 0 12.4 12.4" ><rect x="0.800" y="1.200" width="10.800" height="9.200" fill="#f2f2fa" stroke="#15153c" stroke-width="1.200"/><rect x="1.400" y="1.800" width="9.600" height="8" fill="#1c1c3c"/><path d="M3 4h3.400v4h-3.400z" fill="#fff"/><path d="M7.400 3.600l2 0l-1.600 4.600z" fill="#fff"/></svg>
<svg style="left:709.8px;top:43.4px" width="5" height="3" viewBox="0 0 5 3" ><path d="M0 0h5l-2.5 2.8z" fill="#111"/></svg>
<svg style="left:722px;top:38.8px" width="12.4" height="12.4" viewBox="0 0 12.4 12.4" ><rect x="0.800" y="1.200" width="10.800" height="9.200" fill="#f2f2fa" stroke="#15153c" stroke-width="1.200"/><rect x="1.400" y="1.800" width="9.600" height="2" fill="#1c1c3c"/><rect x="5" y="5.200" width="4.600" height="4" fill="#fff" stroke="#111" stroke-width="0.800"/></svg>
<svg style="left:742.5px;top:43.4px" width="5" height="3" viewBox="0 0 5 3" ><path d="M0 0h5l-2.5 2.8z" fill="#111"/></svg>
<div style="left:751.7px;top:36px;width:0.8px;height:18px;background:#d3d0c0"></div>
<div style="left:752.5px;top:36px;width:0.7px;height:18px;background:#f8f7f1"></div>
<span class="t" style="left:756.9px;top:41px;font-size:7.9px;line-height:9.9px;letter-spacing:-0.08px;color:#222;">Перейти</span>
<svg style="left:794px;top:43.4px" width="5" height="3" viewBox="0 0 5 3" ><path d="M0 0h5l-2.5 2.8z" fill="#111"/></svg>
<div style="left:803px;top:36px;width:0.8px;height:18px;background:#d3d0c0"></div>
<div style="left:803.8px;top:36px;width:0.7px;height:18px;background:#f8f7f1"></div>
<div style="left:807.6px;top:35px;width:17.8px;height:20.4px;background:#fdfdfb;border:0.8px solid #b5b2a2;border-radius:2px;box-shadow:0.4px 0.6px 0.6px rgba(90,90,80,.45)"></div>
<svg style="left:809.9px;top:38.7px" width="12.6" height="12.6" viewBox="0 0 12.6 12.6" ><ellipse cx="6" cy="6" rx="5" ry="3.800" fill="#d8d8f0" stroke="#1c1c5c" stroke-width="1.300"/><ellipse cx="6" cy="6" rx="2.600" ry="3.600" fill="none" stroke="#1c1c5c" stroke-width="1" transform="rotate(35 6 6)"/><path d="M7 5l3.200-1.400l-1 3.200z" fill="#111"/></svg>
<svg style="left:828.3px;top:39px" width="12" height="12" viewBox="0 0 12 12" ><circle cx="5.600" cy="1.800" r="1.300" fill="#111"/><path d="M5.600 3l0.400 3.600l2 3.800M6 6.600l-2.400 4M3.400 5.400l2.400-1.800l2.400 2" fill="none" stroke="#111" stroke-width="1.400" stroke-linecap="round" stroke-linejoin="round"/></svg>
<svg style="left:7.6px;top:61.6px" width="12" height="12" viewBox="0 0 12 12" ><path d="M4 1h4.400l0.600 6l-1.800 2.400h-2l-1.800-2.400z" fill="#111"/><path d="M6.200 9.400v2" stroke="#111" stroke-width="0.900"/><path d="M5 2v4.600" stroke="#666" stroke-width="0.800"/></svg>
<svg style="left:26.2px;top:61.6px" width="12" height="12" viewBox="0 0 12 12" ><path d="M1.400 7.800v-3.200c1.600-2.400 3-2.400 4.600 0c1.600-2.400 3-2.400 4.600 0v3.200z" fill="#f2f2fc" stroke="#15157c" stroke-width="0.800"/><path d="M1 10h10" stroke="#15157c" stroke-width="0.900" stroke-dasharray="1.600 1"/></svg>
<svg style="left:45.4px;top:61.6px" width="12" height="12" viewBox="0 0 12 12" ><path d="M1.200 9.800l3.600-7.800h5.800l-3.800 4l4 3.800z" fill="#b9b9ea" stroke="#15157c" stroke-width="1"/><path d="M3 8.600l3-5M4.800 9.200l3-5M2.600 6.200l4 3" stroke="#15157c" stroke-width="0.700"/></svg>
<svg style="left:64.5px;top:61.6px" width="12" height="12" viewBox="0 0 12 12" ><rect x="1" y="1.400" width="10.400" height="9.600" fill="#b9bdd0" stroke="#2a2a5a" stroke-width="0.900"/><rect x="1.400" y="1.600" width="9.600" height="2" fill="#2a2a5a"/><path d="M2.400 6.600l2-1.600l2 1.600l2-1.600l2 1.600M2 8.800h8.400" fill="none" stroke="#1c1c4c" stroke-width="0.800"/></svg>
<svg style="left:83.9px;top:62px" width="12" height="12" viewBox="0 0 12 12" ><rect x="5" y="0.600" width="2" height="4.600" fill="#111"/><path d="M3 5h6l0.600 1.400v4.600h-7.200v-4.600z" fill="#1f9c8c" stroke="#0c4a44" stroke-width="0.700"/><rect x="3.600" y="7.400" width="4.800" height="1.400" fill="#8fe0d2"/></svg>
<svg style="left:103.4px;top:61.6px" width="12" height="12" viewBox="0 0 12 12" ><path d="M1.400 1.600h5.600l3.600 3v6h-9.200z" fill="#e2e2f6" stroke="#15157c" stroke-width="1.100"/><path d="M3.400 4.400h2.400v2.400h2.800v2.200h-5.200z" fill="#fff" stroke="#15157c" stroke-width="0.700"/></svg>
<svg style="left:121.8px;top:61.6px" width="12" height="12" viewBox="0 0 12 12" ><ellipse cx="6" cy="9.400" rx="4.800" ry="2" fill="#fbe0da" stroke="#d0564a" stroke-width="0.800"/><path d="M4.600 1l4.400 0.400l-1.600 3.400l1.200 0.400l-3 4l0.400-3l-1.600-0.400z" fill="#1a0a0a"/><path d="M2 2.400l2 1M2 5.400l1.800-0.400" stroke="#c22" stroke-width="0.900"/></svg>
<svg style="left:141.7px;top:61.4px" width="12.4" height="12.4" viewBox="0 0 12.4 12.4" ><path d="M1.200 1.600h9.800v2.600h-2.800v3.800h2.800v2.800h-9.800v-2.800h2.800v-3.800h-2.800z" fill="#d0ae58" stroke="#2a2208" stroke-width="0.900"/><path d="M6 4.400v3.400" stroke="#2a2208" stroke-width="1.200"/><path d="M8 8.400l2 1.600" stroke="#111" stroke-width="1"/></svg>
<div style="left:163.8px;top:60px;width:1.4px;height:16px;background:repeating-linear-gradient(#b9b5a4 0 1px,#f6f5ee 1px 2.2px)"></div>
<div style="left:167.2px;top:57.6px;width:51.2px;height:20.6px;background:#fdfdfb;border:0.8px solid #b5b2a2;border-radius:2px;box-shadow:0.4px 0.6px 0.6px rgba(90,90,80,.45)"></div>
<svg style="left:170px;top:61.4px" width="12.4" height="12.4" viewBox="0 0 12.4 12.4" ><rect x="0.800" y="1.200" width="10.800" height="9.200" fill="#f2f2fa" stroke="#15153c" stroke-width="1.200"/><rect x="1.400" y="1.800" width="9.600" height="8" fill="#1c1c3c"/><path d="M3 4h3.400v4h-3.400z" fill="#fff"/><path d="M7.400 3.600l2 0l-1.600 4.600z" fill="#fff"/></svg>
<span class="t" style="left:184.4px;top:63.6px;font-size:7.9px;line-height:9.9px;letter-spacing:-0.16px;color:#222;">3D-окно</span>
<svg style="left:225.8px;top:61.4px" width="12.4" height="12.4" viewBox="0 0 12.4 12.4" ><path d="M1.400 4l3-2.600h6v6l-3 3h-6z" fill="#111"/><path d="M2.200 4.800h4.400v4.800h-4.400z" fill="#e8e8e8" stroke="#111" stroke-width="0.500"/><path d="M7.400 4.400l2.400-2.200v5l-2.400 2.400z" fill="#3a3a3a"/></svg>
<div style="left:243.6px;top:57.6px;width:19px;height:20.6px;background:#fdfdfb;border:0.8px solid #b5b2a2;border-radius:2px;box-shadow:0.4px 0.6px 0.6px rgba(90,90,80,.45)"></div>
<svg style="left:246.5px;top:61.3px" width="12.6" height="12.6" viewBox="0 0 12.6 12.6" ><path d="M2.200 5l5.400-3.200c1.400-0.400 2.800 1.800 2 3.200l-5.400 3.200c-1.400 0.400-2.800-1.800-2-3.200z" fill="#1c1c8c" stroke="#0a0a30" stroke-width="0.600"/><ellipse cx="3.200" cy="6.600" rx="1.400" ry="1.900" fill="#8c8cd0" stroke="#0a0a30" stroke-width="0.500" transform="rotate(-30 3.200 6.600)"/><path d="M6.200 7.600l-2 3.800M6.200 7.600l2.400 3.800M6.200 7.600v3.600" stroke="#111" stroke-width="0.900"/></svg>
<svg style="left:267px;top:61.6px" width="12" height="12" viewBox="0 0 12 12" ><path d="M5.400 1v6l4.800 1.600" fill="none" stroke="#1c1c9c" stroke-width="1.100"/><ellipse cx="5" cy="8.400" rx="4" ry="2.200" fill="#c6c6f2" stroke="#1c1c9c" stroke-width="0.800"/><circle cx="10" cy="8.200" r="1.100" fill="#111"/><circle cx="2" cy="10" r="1.100" fill="#111"/><circle cx="5.400" cy="2.600" r="0.900" fill="#111"/></svg>
<svg style="left:287.5px;top:66px" width="5" height="3" viewBox="0 0 5 3" ><path d="M0 0h5l-2.5 2.8z" fill="#111"/></svg>
<div style="left:298.3px;top:59px;width:0.8px;height:18px;background:#d3d0c0"></div>
<div style="left:299.1px;top:59px;width:0.7px;height:18px;background:#f8f7f1"></div>
<svg style="left:303px;top:61.6px" width="12" height="12" viewBox="0 0 12 12" ><circle cx="5.600" cy="1.800" r="1.300" fill="#0c0c3c"/><path d="M5.600 3l0.400 3.600l2 3.800M6 6.600l-2.400 4M3.400 5.400l2.400-1.800l2.400 2" fill="none" stroke="#0c0c3c" stroke-width="1.400" stroke-linecap="round" stroke-linejoin="round"/></svg>
<div style="left:320.6px;top:57.6px;width:18.8px;height:20.6px;background:#fdfdfb;border:0.8px solid #b5b2a2;border-radius:2px;box-shadow:0.4px 0.6px 0.6px rgba(90,90,80,.45)"></div>
<svg style="left:323.5px;top:61.3px" width="12.6" height="12.6" viewBox="0 0 12.6 12.6" ><ellipse cx="6" cy="6" rx="5" ry="3.800" fill="#d8d8f0" stroke="#1c1c5c" stroke-width="1.300"/><ellipse cx="6" cy="6" rx="2.600" ry="3.600" fill="none" stroke="#1c1c5c" stroke-width="1" transform="rotate(35 6 6)"/><path d="M7 5l3.200-1.400l-1 3.200z" fill="#111"/></svg>
<div style="left:341.9px;top:59px;width:0.8px;height:18px;background:#d3d0c0"></div>
<div style="left:342.7px;top:59px;width:0.7px;height:18px;background:#f8f7f1"></div>
<svg style="left:347.4px;top:61.6px" width="12" height="12" viewBox="0 0 12 12" ><circle cx="6" cy="6" r="3.400" fill="none" stroke="#222" stroke-width="0.900"/><path d="M0.600 6h10.800M6 0.600v10.800" stroke="#111" stroke-width="0.900"/><path d="M4.400 2.200v7.600M7.600 2.200v7.600" stroke="#444" stroke-width="0.500"/></svg>
<svg style="left:367px;top:62px" width="12" height="12" viewBox="0 0 12 12" ><path d="M1 6l5-4.800l5 4.800" fill="none" stroke="#111" stroke-width="1.500"/><path d="M2.200 5.600v5.200h7.600v-5.200" fill="#fff" stroke="#111" stroke-width="1.100"/><rect x="4.800" y="7" width="2.400" height="3.800" fill="#fff" stroke="#111" stroke-width="0.800"/></svg>
<svg style="left:386px;top:61.6px" width="12" height="12" viewBox="0 0 12 12" ><path d="M1 4.600h4M1 6.800h3M7.400 6.400h3.800M7.400 8.600h3" stroke="#2a6a6a" stroke-width="0.900"/><circle cx="5.600" cy="2.600" r="1.200" fill="#111"/><path d="M5.600 3.600l0.600 3.400l1.600 3.600M6 7l-2 3.600M3.600 5.400l2.200-1.400l2 1.600" fill="none" stroke="#111" stroke-width="1.300"/></svg>
<svg style="left:405.4px;top:61.4px" width="12.4" height="12.4" viewBox="0 0 12.4 12.4" ><path d="M2 2.600l1 1.600M4.400 1.400l0.600 2M7.200 1.400l-0.400 2M9.800 2.600l-1 1.600" stroke="#1c4cac" stroke-width="0.900"/><path d="M1.600 6l3.400-1.600l5 1.200v4l-3.600 2l-4.800-1.600z" fill="#111"/><path d="M2.400 6.600l3.600 1v3l-3.600-1.200z" fill="#dcdce8"/></svg>
<div style="left:425.1px;top:59px;width:0.8px;height:18px;background:#d3d0c0"></div>
<div style="left:425.9px;top:59px;width:0.7px;height:18px;background:#f8f7f1"></div>
<svg style="left:430.3px;top:61.6px" width="12" height="12" viewBox="0 0 12 12" ><path d="M4 1.600h3.600l2.800 2.600v4.600h-6.400z" fill="#c6c6ee" stroke="#15157c" stroke-width="1"/><path d="M1.600 3.800h3.800l2.600 2.400v4.800h-6.400z" fill="#dcdcf6" stroke="#15157c" stroke-width="1.100"/><path d="M3.200 6h2.200v2.600h1.400" fill="none" stroke="#15157c" stroke-width="0.800"/></svg>
<svg style="left:449.3px;top:61.6px" width="12" height="12" viewBox="0 0 12 12" ><path d="M4 1.600h3.600l2.800 2.600v4.600h-6.400z" fill="#f2f0e6" stroke="#a09d93" stroke-width="0.900"/><path d="M1.600 3.800h3.800l2.600 2.400v4.800h-6.400z" fill="#f2f0e6" stroke="#a09d93" stroke-width="0.900"/></svg>
<div style="left:467.4px;top:57.6px;width:19.2px;height:20.6px;background:#fdfdfb;border:0.8px solid #b5b2a2;border-radius:2px;box-shadow:0.4px 0.6px 0.6px rgba(90,90,80,.45)"></div>
<svg style="left:469.6px;top:61.6px" width="12.4" height="12.4" viewBox="0 0 12.4 12.4" ><path d="M4 1.600h3.600l2.800 2.600v4.600h-6.400z" fill="#22b8e0" stroke="#0a5a8a" stroke-width="1"/><path d="M1.600 3.800h3.800l2.600 2.400v4.800h-6.400z" fill="#2cc4ea" stroke="#0a5a8a" stroke-width="1.100"/><path d="M3.200 6h2.200v2.600h1.400" fill="none" stroke="#0a4a7a" stroke-width="0.800"/></svg>
<svg style="left:496.5px;top:61.6px" width="12" height="12" viewBox="0 0 12 12" ><path d="M1 10l3-3.600l2 2l3.600-5.800" fill="none" stroke="#7a9a7a" stroke-width="1.200"/><path d="M1 10.600h10M8.600 2v8" stroke="#9aa09a" stroke-width="0.900"/><path d="M3 5l5 5" stroke="#8aa88a" stroke-width="0.900"/></svg>
<svg style="left:517px;top:66px" width="5" height="3" viewBox="0 0 5 3" ><path d="M0 0h5l-2.5 2.8z" fill="#111"/></svg>
<svg style="left:526.3px;top:61.6px" width="12" height="12" viewBox="0 0 12 12" ><rect x="4.400" y="0.800" width="3.200" height="3.200" fill="#111"/><rect x="5.200" y="1.600" width="1.400" height="1.200" fill="#ccc"/><path d="M2 5h8" stroke="#222" stroke-width="1"/><path d="M3 6.400h6l-2.400 3h-1.200z" fill="#777" stroke="#222" stroke-width="0.700"/><path d="M6 9.400v1.800" stroke="#111" stroke-width="1"/></svg>
<svg style="left:545.6px;top:61.4px" width="12.4" height="12.4" viewBox="0 0 12.4 12.4" ><path d="M1 2.200l9.400 1.400v7l-9.400-1.600z" fill="#d4d4f4" stroke="#15157c" stroke-width="1.100"/><path d="M4 5l4 3.600M8 5l-4 3.400" stroke="#15157c" stroke-width="0.900"/><circle cx="4" cy="5" r="0.800" fill="#15157c"/></svg>
<svg style="left:565.4px;top:61.6px" width="12" height="12" viewBox="0 0 12 12" ><path d="M3.400 2.200l6.600 7.600M10 2.200l-6.600 7.600" stroke="#1c1cac" stroke-width="1.600"/><path d="M1 5h4M1 7.400h3" stroke="#1c1cac" stroke-width="1"/></svg>
<svg style="left:584.1px;top:61.4px" width="12.4" height="12.4" viewBox="0 0 12.4 12.4" ><rect x="1" y="1.400" width="10.200" height="9.600" fill="#eeeef4" stroke="#333" stroke-width="1.100"/><rect x="3" y="7.400" width="6" height="2" fill="#555"/><path d="M3.400 3.600h2v2.600h-2M7 3.600h1.400l0.800 1.300l-0.800 1.300h-1.400z" fill="none" stroke="#555" stroke-width="0.700"/></svg>
<div style="left:603.8px;top:59px;width:0.8px;height:18px;background:#d3d0c0"></div>
<div style="left:604.6px;top:59px;width:0.7px;height:18px;background:#f8f7f1"></div>
<svg style="left:609.6px;top:62px" width="12" height="12" viewBox="0 0 12 12" ><rect x="5" y="0.600" width="2" height="4.600" fill="#111"/><path d="M3 5h6l0.600 1.400v4.600h-7.200v-4.600z" fill="#1f9c8c" stroke="#0c4a44" stroke-width="0.700"/><rect x="3.600" y="7.400" width="4.800" height="1.400" fill="#8fe0d2"/></svg>
<div style="left:629px;top:59px;width:0.8px;height:18px;background:#d3d0c0"></div>
<div style="left:629.8px;top:59px;width:0.7px;height:18px;background:#f8f7f1"></div>
<svg style="left:634.5px;top:61.4px" width="12.4" height="12.4" viewBox="0 0 12.4 12.4" ><rect x="0.800" y="1" width="10.800" height="10.400" fill="#dcdce8" stroke="#15153c" stroke-width="1.200"/><rect x="1.400" y="1.600" width="9.600" height="2.400" fill="#15153c"/><rect x="2.600" y="5" width="7" height="2" fill="#15153c"/><rect x="2.600" y="8" width="7" height="2" fill="#555"/></svg>
<svg style="left:654.1px;top:62px" width="12.4" height="12.4" viewBox="0 0 12.4 12.4" ><path d="M0.800 3.800h2.400l1-1.600h3.600l1 1.600h2.600v6.600h-10.600z" fill="#111"/><circle cx="6" cy="6.800" r="2" fill="#f4f4f4"/><rect x="1.600" y="2.400" width="1.600" height="1.200" fill="#111"/></svg>
<svg style="left:673.3px;top:61.6px" width="12" height="12" viewBox="0 0 12 12" ><path d="M1.400 6.200c2-2.400 4-2.400 5 0c1.400-3 3-3.600 4.400-2.400v5.600h-7z" fill="#d8b866" stroke="#3a2a08" stroke-width="0.800"/><path d="M1 8h6M3 10.600h5" stroke="#3a2a08" stroke-width="1"/><circle cx="8.600" cy="3" r="1.300" fill="#e8cc7a" stroke="#3a2a08" stroke-width="0.600"/></svg>
<svg style="left:692px;top:61.4px" width="12.4" height="12.4" viewBox="0 0 12.4 12.4" ><rect x="0.600" y="0.800" width="11.200" height="6.400" fill="#2fe0d0"/><rect x="0.600" y="7.200" width="11.200" height="4.200" fill="#1fd85a"/><path d="M6 1.600v5.400M0.800 7.400h10.600" stroke="#0a6a3a" stroke-width="1.300"/><path d="M7 10.400h4" stroke="#0a3a1a" stroke-width="1"/></svg>
<svg style="left:10.2px;top:81.9px" width="12.4" height="12.4" viewBox="0 0 12.4 12.4" ><path d="M1.400 1.200h9.400v3h-5.800v6.800h-3.600z" fill="#dedef4" stroke="#1c1c4c" stroke-width="1"/><path d="M1.800 5l3.400-3.400M1.800 8l6.400-6.400M2.400 10.400l2.600-2.600" stroke="#1c1c4c" stroke-width="0.700"/></svg>
<svg style="left:28.8px;top:81.9px" width="12.4" height="12.4" viewBox="0 0 12.4 12.4" ><rect x="0.400" y="2.200" width="11.600" height="7.200" fill="#c9c6b6" stroke="#aaa798" stroke-width="0.800"/></svg>
<svg style="left:48.2px;top:81.9px" width="12.4" height="12.4" viewBox="0 0 12.4 12.4" ><path d="M1 10.400l3.600-8h3.200l3.600 8z" fill="#e6e6fa" stroke="#2a2a8c" stroke-width="1.100"/><path d="M1.600 9h9.200" stroke="#2a2a8c" stroke-width="1.200"/></svg>
<svg style="left:68.2px;top:81.9px" width="12.4" height="12.4" viewBox="0 0 12.4 12.4" ><rect x="1" y="2" width="10.400" height="8.400" fill="#cfcfcf"/><rect x="1" y="2" width="10.400" height="2.400" fill="#050505"/><rect x="1" y="8" width="10.400" height="2.400" fill="#050505"/><path d="M2 7.400l1.600-2M5 7.400l1.600-2M8 7.400l1.600-2" stroke="#555" stroke-width="0.700"/></svg>
<svg style="left:86.8px;top:81.9px" width="12.4" height="12.4" viewBox="0 0 12.4 12.4" ><path d="M1 3.600h10M1 8.600h10" stroke="#a8a59a" stroke-width="1.400"/><path d="M1 6h10" stroke="#b8b5aa" stroke-width="1.200" stroke-dasharray="2 1"/></svg>
<svg style="left:106.4px;top:81.9px" width="12.4" height="12.4" viewBox="0 0 12.4 12.4" ><path d="M1 10.400l2.600-6.800h6l-2.600 3.200l4 3.600z" fill="#b4b4b4" stroke="#0a0a0a" stroke-width="1.200"/></svg>
<svg style="left:125.2px;top:81.9px" width="12.4" height="12.4" viewBox="0 0 12.4 12.4" ><rect x="1" y="1" width="10.400" height="10.400" fill="#eeeefa" stroke="#666" stroke-width="0.700" stroke-dasharray="1.400 1"/><path d="M3 6.200l3-2.800l3 2.800l-3 2.800z" fill="#c2c2f0" stroke="#2a2a9c" stroke-width="0.900"/><circle cx="6" cy="6.200" r="1" fill="#2a2a9c"/></svg>
<svg style="left:144px;top:81.9px" width="12.4" height="12.4" viewBox="0 0 12.4 12.4" ><rect x="1" y="1.400" width="10" height="9.600" fill="#a29f96"/></svg>
<svg style="left:164.6px;top:81.9px" width="12.4" height="12.4" viewBox="0 0 12.4 12.4" ><rect x="1" y="1" width="10.400" height="10.400" fill="#eeeefa" stroke="#666" stroke-width="0.700" stroke-dasharray="1.400 1"/><rect x="3.400" y="5.400" width="5.400" height="4" fill="#c2c2f0" stroke="#2a2a8c" stroke-width="0.900"/><path d="M4.400 5.400v-1.200c0.400-1.600 2.800-1.600 3.200 0v1.200" fill="none" stroke="#2a2a8c" stroke-width="0.900"/></svg>
<svg style="left:182.6px;top:81.9px" width="12.4" height="12.4" viewBox="0 0 12.4 12.4" ><rect x="1" y="1.400" width="10.400" height="9.600" fill="#ececfa" stroke="#3a3a9c" stroke-width="1.200"/><rect x="1.600" y="2" width="9.200" height="2.200" fill="#8c8cd0"/><rect x="6" y="6.200" width="4" height="3.200" fill="#fff" stroke="#5a5ab0" stroke-width="0.700"/></svg>
<div style="left:202.5px;top:82px;width:0.8px;height:13px;background:#d3d0c0"></div>
<div style="left:203.3px;top:82px;width:0.7px;height:13px;background:#f8f7f1"></div>
<svg style="left:207.8px;top:81.9px" width="12.4" height="12.4" viewBox="0 0 12.4 12.4" ><path d="M1.400 2.600h9M1.400 9.400h9" stroke="#a09d93" stroke-width="1" stroke-dasharray="2 1.400"/><path d="M2 2.600v1.800M10 7.600v1.800M2 7.600v1.800" stroke="#a09d93" stroke-width="1"/></svg>
<svg style="left:227px;top:81.9px" width="12.4" height="12.4" viewBox="0 0 12.4 12.4" ><path d="M6 1.400l4.600 4.600l-4.600 4.600l-4.600-4.600z" fill="#c8c5ba"/><circle cx="6" cy="6" r="3.200" fill="none" stroke="#a09d93" stroke-width="0.800" stroke-dasharray="1.200 1"/></svg>
<svg style="left:246px;top:82.6px" width="13" height="11" viewBox="0 0 13 11" ><path d="M0.600 1v9M12.400 1v9" stroke="#a09d93" stroke-width="0.900" stroke-dasharray="1.600 1"/><text x="2" y="8.200" font-family="Liberation Sans,sans-serif" font-size="7" fill="#8e8b82">Ab</text></svg>
<svg style="left:266px;top:81.9px" width="12.4" height="12.4" viewBox="0 0 12.4 12.4" ><rect x="2" y="2" width="8.400" height="8.400" fill="#a6a39a"/><path d="M0.800 0.800l2 2M11.600 0.800l-2 2M0.800 11.600l2-2M11.600 11.600l-2-2" stroke="#8e8b82" stroke-width="1"/></svg>
<svg style="left:286.2px;top:81.9px" width="12.4" height="12.4" viewBox="0 0 12.4 12.4" ><path d="M4.600 1l2.400 4.400l-2 5.800M7 5.400l2 5.600M5.600 3.400l3.800-1.800" fill="none" stroke="#a09d93" stroke-width="1"/><circle cx="8.400" cy="2" r="1" fill="#a09d93"/></svg>
<div style="left:304.5px;top:82px;width:0.8px;height:13px;background:#d3d0c0"></div>
<div style="left:305.3px;top:82px;width:0.7px;height:13px;background:#f8f7f1"></div>
<svg style="left:309.6px;top:81.9px" width="12.4" height="12.4" viewBox="0 0 12.4 12.4" ><circle cx="6" cy="7" r="5.200" fill="#fbeae6"/><path d="M1 6.400l5-5l5 5" fill="none" stroke="#c62a2a" stroke-width="1.500"/><path d="M2.600 6v4.800h6.800v-4.800" fill="none" stroke="#c62a2a" stroke-width="1.100"/></svg>
<div style="left:330px;top:82px;width:0.8px;height:13px;background:#d3d0c0"></div>
<div style="left:330.8px;top:82px;width:0.7px;height:13px;background:#f8f7f1"></div>
<svg style="left:335.4px;top:81.9px" width="12.4" height="12.4" viewBox="0 0 12.4 12.4" ><rect x="0.800" y="1.200" width="10.600" height="7.800" rx="0.600" fill="#9a9ad0" stroke="#1c1c4c" stroke-width="1.100"/><path d="M3 4h3.600v2.400h3" fill="none" stroke="#fff" stroke-width="1"/><path d="M3.600 10.800h5.200" stroke="#1c1c4c" stroke-width="1.300"/></svg>
<div style="left:0px;top:97.8px;width:67.6px;height:569px;background:#ece9d8"></div>
<div style="left:0px;top:107px;width:1.3px;height:559px;background:#b4b1a4"></div>
<div style="left:64.4px;top:107px;width:3.2px;height:559px;background:#f4f2ea"></div>
<div style="left:0.6px;top:450.2px;width:64px;height:0.9px;background:#f8f7f0"></div>
<div style="left:0.6px;top:449.4px;width:64px;height:0.8px;background:#d4d1c2"></div>
<div style="left:0px;top:96.9px;width:65.2px;height:10px;background:#0b50d8"></div>
<span class="t" style="left:2.2px;top:97.4px;font-size:7.6px;line-height:9.6px;font-weight:bold;letter-spacing:-0.06px;color:#fff;">ArchiCAD</span>
<svg style="left:57.4px;top:99.2px" width="5" height="5.6" viewBox="0 0 5 5.6" ><path d="M0.400 0.400l4.200 4.800M4.600 0.400l-4.200 4.800" stroke="#fff" stroke-width="1.200"/></svg>
<div style="left:2.2px;top:108.8px;width:21.4px;height:15.6px;background:#fff;box-shadow:0.5px 0.5px 0 #cfccbd"></div>
<svg style="left:7.4px;top:109.4px" width="12" height="12" viewBox="0 0 12 12" ><path d="M3.600 0.800v8.400l2-2l1.600 3.600l1.400-0.600l-1.600-3.400h2.800z" fill="#4a4a6a" stroke="#1c1c3c" stroke-width="0.600"/></svg>
<svg style="left:29.4px;top:108.8px" width="12.4" height="12.4" viewBox="0 0 12.4 12.4" ><rect x="1" y="1.800" width="10.400" height="8.400" fill="none" stroke="#3a3a3a" stroke-width="1.200" stroke-dasharray="2.200 1.200"/></svg>
<svg style="left:5.56px;top:126.16px" width="14.88" height="14.88" viewBox="0 0 12.4 12.4" ><path d="M1.400 3.600l3-1.600l7.400 3.600v4.800l-3 1.400l-7.400-3.600z" fill="#3a3a90" stroke="#0c0c30" stroke-width="0.600"/><path d="M1.400 3.600l7.400 3.600v4.600l-7.400-3.600z" fill="#7a7ac8"/><path d="M4.400 0.400l1.200 2" stroke="#222" stroke-width="0.900"/></svg>
<svg style="left:28.16px;top:126.16px" width="14.88" height="14.88" viewBox="0 0 12.4 12.4" ><path d="M1.400 3l3.600-1.600l3.400 1.400v4.800l-3.400 1.600l-3.600-1.400z" fill="#f0f0f4" stroke="#b0b0b8" stroke-width="0.600"/><path d="M5.600 4.600l5.600 2.400v4l-2.600 1l-3-1.400z" fill="#3a3a78" stroke="#0c0c30" stroke-width="0.600"/></svg>
<svg style="left:5.56px;top:142.56px" width="14.88" height="14.88" viewBox="0 0 12.4 12.4" ><path d="M4 2.200c0.400-1.600 3.800-1.600 4.200 0v8c-0.400 1.600-3.800 1.600-4.200 0z" fill="#5a5ab0" stroke="#1c1c4c" stroke-width="0.700"/><ellipse cx="6.100" cy="2.200" rx="2" ry="0.900" fill="#e8e8f8"/></svg>
<svg style="left:28.16px;top:142.56px" width="14.88" height="14.88" viewBox="0 0 12.4 12.4" ><path d="M0.800 8.400l8.800-6l2 1.400v1.800l-8.800 6l-2-1.400z" fill="#1c1c1c"/><path d="M1.400 8.600l8.400-5.600l1 0.800l-8.400 5.600z" fill="#e4e4e4"/></svg>
<svg style="left:5.56px;top:159.66px" width="14.88" height="14.88" viewBox="0 0 12.4 12.4" ><rect x="1.200" y="1" width="9.800" height="9.800" fill="#0c0c1c"/><rect x="2.600" y="2.400" width="3" height="3" fill="#f4f4f8"/><rect x="6.600" y="2.400" width="3" height="3" fill="#f4f4f8"/><rect x="2.600" y="6.400" width="3" height="3" fill="#f4f4f8"/><rect x="6.600" y="6.400" width="3" height="3" fill="#f4f4f8"/><path d="M0.400 11.400h11.400" stroke="#111" stroke-width="0.900"/></svg>
<svg style="left:28.16px;top:159.66px" width="14.88" height="14.88" viewBox="0 0 12.4 12.4" ><rect x="2.400" y="0.800" width="8" height="10.400" fill="#141430"/><rect x="3.600" y="2" width="5" height="9" fill="#4a4aa8"/><path d="M9 2v9" stroke="#e8e8f4" stroke-width="0.900"/><path d="M0 11.400h12.200" stroke="#222" stroke-width="0.900"/><circle cx="4.800" cy="6.800" r="0.600" fill="#111"/></svg>
<svg style="left:5.56px;top:176.16px" width="14.88" height="14.88" viewBox="0 0 12.4 12.4" ><path d="M2.400 1.200v9.800M2.400 6.400h6.400v4.600M2.400 1.600h5v4.800M4 1.600v4.600M5.600 1.600v4.600" fill="none" stroke="#141428" stroke-width="1.100"/><path d="M2.400 7.600h6.400" stroke="#141428" stroke-width="1.600"/></svg>
<svg style="left:28.16px;top:176.16px" width="14.88" height="14.88" viewBox="0 0 12.4 12.4" ><circle cx="6" cy="4.200" r="3" fill="#f0f0f6" stroke="#555" stroke-width="0.800"/><path d="M4.800 7.400h2.400v2h-2.400z" fill="#555"/><path d="M5.600 9.400h0.800v1.600h-0.800z" fill="#222"/><path d="M4.800 3.600c1-1 2-0.600 2.400 0.400" fill="none" stroke="#333" stroke-width="0.700"/></svg>
<svg style="left:5.56px;top:193.56px" width="14.88" height="14.88" viewBox="0 0 12.4 12.4" ><path d="M0.800 7.600l6.400-4.800l4.400 1.800v2l-6.400 4.800l-4.400-1.800z" fill="#2a2a6a" stroke="#0c0c30" stroke-width="0.500"/><path d="M2.600 6.600l6-4.400M4.200 8.400l6.400-4.800M2.200 9l6.400-4.800" stroke="#dcdcf0" stroke-width="1"/></svg>
<svg style="left:28.16px;top:193.56px" width="14.88" height="14.88" viewBox="0 0 12.4 12.4" ><path d="M0.600 5.200l5.200-3.200l5.800 3.600v1.800l-4.200 2.600l-6.800-3.400z" fill="#1c1c2c"/><path d="M1.600 5.200l4.200-2.400l2.200 1.400l-2.400 1.600l3.400 1.600l-1.600 1z" fill="#f2f2f6"/></svg>
<svg style="left:5.56px;top:210.56px" width="14.88" height="14.88" viewBox="0 0 12.4 12.4" ><path d="M0.600 4.400l6-2.600l5.200 2l-2.400 5.600l-6.400 1.800z" fill="#2a2a60" stroke="#0c0c24" stroke-width="0.600"/><path d="M2.400 5.200l4.400-1.800l2.800 1.200l-1.400 3.200l-4.400 1.200z" fill="#b8b8e4"/><path d="M1 6.600l5.600-1.200l1.600-2.400M5.600 9.400l1-4" stroke="#0c0c24" stroke-width="1.200" fill="none"/></svg>
<svg style="left:28.16px;top:210.56px" width="14.88" height="14.88" viewBox="0 0 12.4 12.4" ><path d="M3 1.600l6.400 2l-1.600 7.600l-7-3.400z" fill="#4848b0" stroke="#1c1c50" stroke-width="0.700"/><path d="M9.400 3.600l2.200 5.400l-3.800 2.200z" fill="#9a9aa8"/></svg>
<svg style="left:5.56px;top:228.36px" width="14.88" height="14.88" viewBox="0 0 12.4 12.4" ><path d="M0.600 2.200l5 7l5.800-6.200l-2 7.400l-3.800-1.200l-3 1.600z" fill="#4a4aa8" stroke="#14143c" stroke-width="0.800"/><path d="M5.600 9.200l4-5" stroke="#e4e4f6" stroke-width="0.800"/></svg>
<svg style="left:28.16px;top:228.36px" width="14.88" height="14.88" viewBox="0 0 12.4 12.4" ><path d="M0.800 6.400l6.600-4.400l4.200 2.600v3l-6.400 3.800l-4.400-2.200z" fill="#3a3a88" stroke="#14143c" stroke-width="0.600"/><path d="M3.400 5l4.200 2.400M5.400 3.800l4.200 2.400M2.800 7.400l6.400-4M4.800 8.600l6.400-4" stroke="#e0e0f4" stroke-width="0.700"/></svg>
<svg style="left:5.56px;top:245.56px" width="14.88" height="14.88" viewBox="0 0 12.4 12.4" ><path d="M3 1.600l7.800 1.200l-2.200 8l-7.600-1.600z" fill="#d8d8f4" stroke="#2a2a78" stroke-width="0.900"/><path d="M5.600 2l-2.200 7.800M8.200 2.400l-2.200 8M2.200 4.600l7.800 1.400M1.600 7.200l7.800 1.400" stroke="#2a2a78" stroke-width="0.800"/></svg>
<svg style="left:28.16px;top:245.56px" width="14.88" height="14.88" viewBox="0 0 12.4 12.4" ><path d="M1.400 7h9.200M1.400 5v4M10.600 5v4" stroke="#a3a097" stroke-width="1" fill="none"/><path d="M5 4.200h2" stroke="#a3a097" stroke-width="0.900"/><path d="M1 7l1.600-1v2zM11 7l-1.600-1v2z" fill="#a3a097"/></svg>
<svg style="left:5.56px;top:261.86px" width="14.88" height="14.88" viewBox="0 0 12.4 12.4" ><path d="M1.400 5.400l4.400 1.400M5.800 6.800v4M5.800 6.800l3-3" stroke="#a3a097" stroke-width="0.900" fill="none" stroke-dasharray="1.400 0.800"/><path d="M8.400 1.400h2.400M9.600 1.400v3" stroke="#a3a097" stroke-width="0.800"/><circle cx="4" cy="9" r="1.200" fill="none" stroke="#a3a097" stroke-width="0.700"/></svg>
<svg style="left:28.16px;top:261.86px" width="14.88" height="14.88" viewBox="0 0 12.4 12.4" ><circle cx="4.800" cy="7" r="3.200" fill="#a3a097"/><path d="M4.800 7l3-3M4.800 7h-3" stroke="#ece9d8" stroke-width="0.900"/><path d="M8.600 1.400h2.400M9.800 1.400v2.800" stroke="#a3a097" stroke-width="0.800"/></svg>
<svg style="left:5.56px;top:278.56px" width="14.88" height="14.88" viewBox="0 0 12.4 12.4" ><path d="M0.800 9.600l3.600-3.200l4 1.400l-2.400 2.600z" fill="#c2bfb4"/><path d="M5.400 2.400l1.600 2.400M8 1.800v2.600M10.800 2.200l-1.600 2.400" stroke="#a3a097" stroke-width="0.900"/></svg>
<svg style="left:28.16px;top:278.56px" width="14.88" height="14.88" viewBox="0 0 12.4 12.4" ><path d="M1.600 11l4.400-10l4.400 10M3.200 7.600h5.600" fill="none" stroke="#a3a097" stroke-width="1.300"/></svg>
<svg style="left:5.56px;top:296.56px" width="14.88" height="14.88" viewBox="0 0 12.4 12.4" ><path d="M1 8.600l3-3.200h2.200" fill="none" stroke="#a3a097" stroke-width="0.900"/><path d="M1 8.600l0.400-2M1 8.600l2-0.200" stroke="#a3a097" stroke-width="0.900"/><text x="5.800" y="8.400" font-family="Liberation Sans,sans-serif" font-size="5.600" font-weight="bold" fill="#a3a097">A1</text></svg>
<svg style="left:28.16px;top:296.56px" width="14.88" height="14.88" viewBox="0 0 12.4 12.4" ><path d="M0.800 2h3.600l1 1.400h6v8h-10.600z" fill="#1c1c24"/><path d="M2.400 4.400h2.600l1.600 1.600l2.400-1.600v2.400l-1 1v2.600h-5.600z" fill="#f4f4f8"/><path d="M4.400 7.200l2.400 1" stroke="#333" stroke-width="0.800"/></svg>
<svg style="left:5.56px;top:313.56px" width="14.88" height="14.88" viewBox="0 0 12.4 12.4" ><path d="M1 10.200l2.600-7.200h6.600l-3 3.600l4.200 3.600z" fill="#c0bdc8" stroke="#a3a097" stroke-width="0.700"/><path d="M2.400 9.400l3-5M4.400 9.800l3-5M3 6l4 3.400" stroke="#9a97a8" stroke-width="0.600"/></svg>
<svg style="left:28.16px;top:313.56px" width="14.88" height="14.88" viewBox="0 0 12.4 12.4" ><path d="M1.600 10.600l8.400-9" stroke="#a3a097" stroke-width="1.100"/></svg>
<svg style="left:5.56px;top:330.56px" width="14.88" height="14.88" viewBox="0 0 12.4 12.4" ><circle cx="6" cy="6" r="4.600" fill="none" stroke="#a3a097" stroke-width="1.100"/></svg>
<svg style="left:28.16px;top:330.56px" width="14.88" height="14.88" viewBox="0 0 12.4 12.4" ><path d="M1.200 10.400v-4.800c1.600-2.800 5-3.400 8.400-3.200l-3 3.400l4.400 4.600z" fill="none" stroke="#a3a097" stroke-width="1.100"/></svg>
<svg style="left:5.56px;top:347.76px" width="14.88" height="14.88" viewBox="0 0 12.4 12.4" ><path d="M0.800 9.600c1-5 3.400-7.600 5-4c0.800 2.400 2.400 2.800 5.400 0.600" fill="none" stroke="#a3a097" stroke-width="1.200"/></svg>
<svg style="left:28.16px;top:347.76px" width="14.88" height="14.88" viewBox="0 0 12.4 12.4" ><rect x="0.600" y="1" width="11" height="10" fill="#e8e8f2" stroke="#a3a097" stroke-width="0.900"/><path d="M1 10.600l4.400-5.800l3 3.400l1.400-1.400l1.600 2v1.800z" fill="#a4a2c0"/><circle cx="8.800" cy="3.400" r="1" fill="#c4c2cc"/></svg>
<svg style="left:5.56px;top:365.06px" width="14.88" height="14.88" viewBox="0 0 12.4 12.4" ><path d="M0.600 1h7.600l3.400 3v7.400h-11z" fill="#f2f0e8" stroke="#a3a097" stroke-width="0.900"/><path d="M2.400 4.400h3.200v2.400h3.400v3h-6.600z" fill="none" stroke="#a3a097" stroke-width="1"/></svg>
<svg style="left:28.16px;top:365.06px" width="14.88" height="14.88" viewBox="0 0 12.4 12.4" ><path d="M6 1.800v8.400M1.800 6h8.400M3 3l6 6M9 3l-6 6" stroke="#a3a097" stroke-width="0.800"/><circle cx="6" cy="6" r="1.200" fill="#a3a097"/></svg>
<svg style="left:5.56px;top:382.36px" width="14.88" height="14.88" viewBox="0 0 12.4 12.4" ><path d="M0.400 4.600h5v3.200h5.600" fill="none" stroke="#a3a097" stroke-width="1" stroke-dasharray="2.400 0.600"/><circle cx="2" cy="4.200" r="1.100" fill="#a3a097"/><circle cx="9.400" cy="8" r="1.100" fill="#a3a097"/></svg>
<svg style="left:28.16px;top:382.36px" width="14.88" height="14.88" viewBox="0 0 12.4 12.4" ><path d="M0.400 8h11.400" stroke="#a3a097" stroke-width="0.900" stroke-dasharray="2.600 0.800"/><path d="M4.400 8l1.600-2.600l1.600 2.600z" fill="#a3a097"/><path d="M6 3v1.600M10.400 5v1.600" stroke="#a3a097" stroke-width="0.700"/></svg>
<svg style="left:5.56px;top:399.56px" width="14.88" height="14.88" viewBox="0 0 12.4 12.4" ><path d="M6 1v10M1 6h10" stroke="#a3a097" stroke-width="0.800"/><path d="M6 3.200l2.600 2.800l-2.600 2.800l-2.600-2.800z" fill="#dcd9ce" stroke="#a3a097" stroke-width="0.900"/></svg>
<svg style="left:28.16px;top:399.56px" width="14.88" height="14.88" viewBox="0 0 12.4 12.4" ><path d="M3.600 1v10M5.400 1.600v8.800" stroke="#8e8b82" stroke-width="1.100"/><path d="M5.400 3c3-1.400 5.200 0 5.200 2.200h-5.200M5.400 5.200h4.200v3.600h-4.200" fill="none" stroke="#a3a097" stroke-width="1"/></svg>
<svg style="left:5.56px;top:416.56px" width="14.88" height="14.88" viewBox="0 0 12.4 12.4" ><path d="M0.800 11v-6l2.400-3.200l2.400 2.600h2.600l2.600 2.400v4.200z" fill="#e6e3d8" stroke="#a3a097" stroke-width="1"/><path d="M2.600 9l2.400-5" stroke="#8e8b82" stroke-width="1.300"/></svg>
<svg style="left:28.16px;top:416.56px" width="14.88" height="14.88" viewBox="0 0 12.4 12.4" ><circle cx="5" cy="3.400" r="2" fill="none" stroke="#a3a097" stroke-width="1"/><path d="M5 5.400v5.600M5 7.400l-2.400 3M5 7.400l2.600 3M7 3h3.600v3.200h-3" fill="none" stroke="#a3a097" stroke-width="0.900"/></svg>
<svg style="left:5.56px;top:433.56px" width="14.88" height="14.88" viewBox="0 0 12.4 12.4" ><circle cx="6" cy="3.600" r="2.800" fill="#f6f6f8" stroke="#222" stroke-width="0.900"/><path d="M6 2.200v2.200" stroke="#222" stroke-width="0.900"/><path d="M6 6.400v5" stroke="#333" stroke-width="0.900" stroke-dasharray="1.600 0.800"/></svg>
<svg style="left:28.16px;top:433.56px" width="14.88" height="14.88" viewBox="0 0 12.4 12.4" ><path d="M2.600 3.600l3.400-2.600v9.600l-3.400-1z" fill="#1c1c34"/><path d="M6 2.600l4.600 1v7l-4.600-0.600z" fill="#7a7ac4" stroke="#1c1c34" stroke-width="0.600"/><path d="M6.600 6l3.400 0.600M8.200 3.400v7" stroke="#dcdcf4" stroke-width="0.700"/><path d="M1.600 10.600l9.400 1" stroke="#111" stroke-width="1.100"/></svg>
<div style="left:68.3px;top:96.9px;width:10.4px;height:30.7px;background:#0b50d8"></div>
<svg style="left:71px;top:99.2px" width="5" height="5.6" viewBox="0 0 5 5.6" ><path d="M0.400 0.400l4.200 4.800M4.600 0.400l-4.200 4.800" stroke="#fff" stroke-width="1.200"/></svg>
<svg style="left:68.8px;top:119.8px" width="7" height="6.4" viewBox="0 0 7 6.4" ><path d="M0.400 0.900h5.600l-5 2.300l5 2.300h-5.600" fill="none" stroke="#e8f4ff" stroke-width="1.500"/></svg>
<div style="left:78.7px;top:97.8px;width:115.6px;height:27px;background:#ece9d8;border-right:0.9px solid #c9c6b6;border-bottom:0.9px solid #c9c6b6"></div>
<div style="left:78.7px;top:125.4px;width:116px;height:0.8px;background:#fbfaf5"></div>
<svg style="left:86.8px;top:109.8px" width="12.4" height="12.4" viewBox="0 0 12.4 12.4" ><path d="M1.400 3.800h9.800v5.600h-9.800z" fill="none" stroke="#555" stroke-width="0.600" stroke-dasharray="1.200 0.800"/><path d="M2 9.400l3-4.600l5.200-1.400" fill="none" stroke="#111" stroke-width="1"/><circle cx="2.200" cy="9.200" r="1.200" fill="#111"/><circle cx="5" cy="5" r="1.200" fill="#111"/><circle cx="9.800" cy="3.600" r="1" fill="#111"/></svg>
<svg style="left:104.4px;top:118.6px" width="3" height="4" viewBox="0 0 3 4" ><path d="M0 0l2.800 2l-2.800 2z" fill="#111"/></svg>
<svg style="left:115.4px;top:109.4px" width="12.4" height="12.4" viewBox="0 0 12.4 12.4" ><rect x="1.200" y="2.400" width="9" height="7" fill="#f6f5ee" stroke="#333" stroke-width="0.900" stroke-dasharray="1.800 1"/><path d="M9 1.200l2.400 1.800l-2.400 1.600z" fill="#111"/></svg>
<svg style="left:132.6px;top:118.6px" width="3" height="4" viewBox="0 0 3 4" ><path d="M0 0l2.800 2l-2.800 2z" fill="#111"/></svg>
<div style="left:137px;top:110px;width:27.2px;height:12.8px;background:#dcdad0;border:0.900px solid #55534c;border-radius:2.400px"></div>
<svg style="left:144.4px;top:110.2px" width="12.4" height="12.4" viewBox="0 0 12.4 12.4" ><path d="M1.600 6.200l4.400-4.200l4.400 4.200l-4.400 4.200z" fill="#6a6a6a" stroke="#222" stroke-width="0.600"/><path d="M6 2l4.400 4.200l-4.400 1.600z" fill="#2a2a2a"/><circle cx="8.600" cy="7.600" r="2.400" fill="#f6f6f6" stroke="#333" stroke-width="0.700"/></svg>
<div style="left:170.4px;top:104.8px;width:22px;height:15.8px;background:#e6e3d6;border:0.800px solid #d6d3c4"></div>
<svg style="left:175.4px;top:106.6px" width="12" height="12" viewBox="0 0 12 12" ><path d="M3.600 0.800v8.400l2-2l1.600 3.600l1.400-0.600l-1.600-3.400h2.800z" fill="#55557a" stroke="#2a2a4a" stroke-width="0.600"/></svg>
<div style="left:795px;top:97.8px;width:119px;height:569.2px;background:#ece9d8"></div>
<div style="left:798.2px;top:131.1px;width:114.8px;height:9.9px;background:#0b50d8"></div>
<span class="t" style="left:800.4px;top:131.7px;font-size:7.6px;line-height:9.6px;font-weight:bold;letter-spacing:0.5px;color:#fff;">Навигатор - Карта п...</span>
<svg style="left:905.4px;top:133.8px" width="5" height="5.6" viewBox="0 0 5 5.6" ><path d="M0.400 0.400l4.200 4.800M4.600 0.400l-4.200 4.800" stroke="#fff" stroke-width="1.200"/></svg>
<div style="left:799.3px;top:145px;width:21.6px;height:15.8px;background:#e9e7dc;border:1px solid #6a685f;border-radius:2.400px"></div>
<svg style="left:802.1px;top:146.3px" width="13" height="13" viewBox="0 0 13 13" ><path d="M1.400 1h5l2 2v7.600h-7z" fill="#fff" stroke="#2a2a5a" stroke-width="0.900"/><path d="M4 4.400h5.400M4 6.200h6.400M4 8h5.400" stroke="#2a2a8c" stroke-width="1"/><path d="M9.400 4.400l2.400 1.800l-2.400 1.800z" fill="#2a2a8c"/></svg>
<svg style="left:816.6px;top:155.4px" width="3" height="4" viewBox="0 0 3 4" ><path d="M0 0l2.800 2l-2.800 2z" fill="#111"/></svg>
<div style="left:825.8px;top:144.6px;width:20.6px;height:16.4px;background:#fff;border:0.800px solid #dcd9cc;border-radius:1.600px"></div>
<svg style="left:829.3px;top:146.5px" width="13" height="13" viewBox="0 0 13 13" ><path d="M1 6l5-4.600l5 4.600" fill="none" stroke="#3a2410" stroke-width="1.300"/><path d="M2.200 5.800l3.800-3.400l3.800 3.400v5h-7.600z" fill="#e8a266" stroke="#3a2410" stroke-width="0.900"/><path d="M8.200 3.400l2.600 1v5.200" fill="none" stroke="#3a2410" stroke-width="0.800"/></svg>
<svg style="left:851.1px;top:146.5px" width="13" height="13" viewBox="0 0 13 13" ><path d="M1.200 3h3.600v3h5.800v4.600h-9.400z" fill="#e4cc84" stroke="#6a5420" stroke-width="0.900"/><path d="M1.200 3l1.200-1.400h3.400v3h5.600l-0.800 1.400" fill="#f0dea0" stroke="#6a5420" stroke-width="0.700"/></svg>
<svg style="left:873.3px;top:146.5px" width="13" height="13" viewBox="0 0 13 13" ><rect x="1" y="1.800" width="10.400" height="8.800" fill="#f4f0dc" stroke="#2a2418" stroke-width="1.200"/><rect x="6.400" y="5" width="3.600" height="3" fill="#d8c890" stroke="#2a2418" stroke-width="0.800"/><path d="M6.400 9.400h3.600" stroke="#2a2418" stroke-width="0.800"/></svg>
<svg style="left:894.7px;top:146.5px" width="13" height="13" viewBox="0 0 13 13" ><circle cx="5" cy="4.600" r="3.400" fill="#e4e4f8" stroke="#1c1c6c" stroke-width="1"/><rect x="5.400" y="5.400" width="5.600" height="5.400" rx="1" fill="#c8c8ee" stroke="#1c1c6c" stroke-width="1"/></svg>
<div style="left:798.2px;top:162.6px;width:115px;height:429.2px;background:#fff;border-top:0.900px solid #8e8c80;border-left:0.900px solid #8e8c80;border-bottom:0.800px solid #f4f3ec"></div>
<div style="left:901px;top:163.4px;width:11.4px;height:417px;background:#f7f7fd"></div>
<div style="left:901px;top:175px;width:10.4px;height:271px;background:linear-gradient(90deg,#c1d3fb,#d2e0fe 45%,#c3d5fc 80%,#b0c5f4);border-radius:1px"></div>
<svg style="left:900.8px;top:164px" width="10.6" height="10.6" viewBox="0 0 10.6 10.6" ><rect x="0.3" y="0.3" width="10" height="10" rx="1.4" fill="#c3d5fd" stroke="#e6eefe" stroke-width="0.6"/><path d="M2.4 6.6 L5.3 3.8 L8.2 6.6" fill="none" stroke="#4d6185" stroke-width="1.7"/></svg>
<svg style="left:900.8px;top:566.2px" width="10.6" height="10.6" viewBox="0 0 10.6 10.6" ><rect x="0.3" y="0.3" width="10" height="10" rx="1.4" fill="#c3d5fd" stroke="#e6eefe" stroke-width="0.6"/><path d="M2.4 4 L5.3 6.8 L8.2 4" fill="none" stroke="#4d6185" stroke-width="1.7"/></svg>
<svg style="left:903.4px;top:306.6px" width="6" height="5" viewBox="0 0 6 5" ><path d="M0 0.600h5.600M0 2.400h5.600M0 4.200h5.600" stroke="#eef3ff" stroke-width="0.700"/></svg>
<div style="left:799px;top:579.8px;width:102px;height:10.6px;background:#f7f7fd"></div>
<div style="left:812px;top:580px;width:25px;height:10.2px;background:linear-gradient(#c1d3fb,#d2e0fe 45%,#c3d5fc 80%,#b0c5f4);border-radius:1px"></div>
<svg style="left:801px;top:579.8px" width="10.6" height="10.6" viewBox="0 0 10.6 10.6" ><rect x="0.3" y="0.3" width="10" height="10" rx="1.4" fill="#c3d5fd" stroke="#e6eefe" stroke-width="0.6"/><path d="M6.6 2.4 L3.8 5.3 L6.6 8.2" fill="none" stroke="#4d6185" stroke-width="1.7"/></svg>
<svg style="left:888.4px;top:579.8px" width="10.6" height="10.6" viewBox="0 0 10.6 10.6" ><rect x="0.3" y="0.3" width="10" height="10" rx="1.4" fill="#c3d5fd" stroke="#e6eefe" stroke-width="0.6"/><path d="M4 2.4 L6.8 5.3 L4 8.2" fill="none" stroke="#4d6185" stroke-width="1.7"/></svg>
<div style="left:900.6px;top:579.6px;width:11.8px;height:11px;background:#ece9d8"></div>
<svg style="left:0px;top:0px" width="914" height="731" viewBox="0 0 914 731" ><path d="M807.6 169.5V174.07" stroke="#b8b8b8" stroke-width="0.700" stroke-dasharray="0.700 0.700"/><path d="M821.6 175.22V578.69" stroke="#b8b8b8" stroke-width="0.700" stroke-dasharray="0.700 0.700"/><path d="M835.1 186.65V238.08" stroke="#b8b8b8" stroke-width="0.700" stroke-dasharray="0.700 0.700"/><path d="M835.1 255.22V272.37" stroke="#b8b8b8" stroke-width="0.700" stroke-dasharray="0.700 0.700"/><path d="M835.1 289.51V329.52" stroke="#b8b8b8" stroke-width="0.700" stroke-dasharray="0.700 0.700"/><path d="M835.1 392.38V409.53" stroke="#b8b8b8" stroke-width="0.700" stroke-dasharray="0.700 0.700"/><path d="M835.1 426.68V500.97" stroke="#b8b8b8" stroke-width="0.700" stroke-dasharray="0.700 0.700"/><path d="M835.1 552.4V583.27" stroke="#b8b8b8" stroke-width="0.700" stroke-dasharray="0.700 0.700"/><path d="M848.5 438.11V489.54" stroke="#b8b8b8" stroke-width="0.700" stroke-dasharray="0.700 0.700"/><path d="M848.5 506.69V535.26" stroke="#b8b8b8" stroke-width="0.700" stroke-dasharray="0.700 0.700"/></svg>
<div style="left:799px;top:163.4px;width:100.8px;height:416.4px;overflow:hidden">
<svg style="left:5.2px;top:2.7px" width="6.8" height="6.8" viewBox="0 0 6.8 6.8" ><rect x="0.400" y="0.400" width="6" height="6" fill="#fff" stroke="#8c9cb4" stroke-width="0.800"/><path d="M1.800 3.400h3.200" stroke="#222" stroke-width="0.900"/></svg>
<svg style="left:15.9px;top:0.6px" width="11.6" height="11.6" viewBox="0 0 11.6 11.6" ><path d="M1 6l5-4.600l5 4.600" fill="none" stroke="#3a2410" stroke-width="1.300"/><path d="M2.200 5.800l3.800-3.400l3.800 3.400v5h-7.600z" fill="#e8a266" stroke="#3a2410" stroke-width="0.900"/><path d="M8.200 3.400l2.600 1v5.200" fill="none" stroke="#3a2410" stroke-width="0.800"/></svg>
<span class="t" style="left:30.4px;top:1.1px;font-size:7.75px;line-height:9.75px;color:#111;">Наименование проекта</span>
<svg style="left:19.2px;top:14.13px" width="6.8" height="6.8" viewBox="0 0 6.8 6.8" ><rect x="0.400" y="0.400" width="6" height="6" fill="#fff" stroke="#8c9cb4" stroke-width="0.800"/><path d="M1.800 3.400h3.200" stroke="#222" stroke-width="0.900"/></svg>
<svg style="left:30.58px;top:12.01px" width="11.04" height="11.04" viewBox="0 0 12 12" ><rect x="0.900" y="1.600" width="10.200" height="8.800" fill="#f4f4fa" stroke="#1a1a4a" stroke-width="1.200"/><path d="M3.400 3.800h2.400v2h2.800v2.600h-5.200z" fill="#e8e8f4" stroke="#1a1a1a" stroke-width="0.900"/></svg>
<span class="t" style="left:43.8px;top:12.53px;font-size:7.75px;line-height:9.75px;color:#111;">Этажи</span>
<svg style="left:43.5px;top:22.96px" width="12" height="12" viewBox="0 0 12 12" ><path d="M1 2.400h4.200v2.600h5.800v4.800h-10z" fill="#e0955c" stroke="#4a2a10" stroke-width="0.900"/></svg>
<span class="t" style="left:58px;top:23.96px;font-size:7.75px;line-height:9.75px;color:#111;">4. Кровля</span>
<svg style="left:43.5px;top:34.39px" width="12" height="12" viewBox="0 0 12 12" ><path d="M1 2.400h4.200v2.600h5.800v4.800h-10z" fill="#e0955c" stroke="#4a2a10" stroke-width="0.900"/></svg>
<span class="t" style="left:58px;top:35.39px;font-size:7.75px;line-height:9.75px;color:#111;">3. 3-й этаж</span>
<svg style="left:43.5px;top:45.82px" width="12" height="12" viewBox="0 0 12 12" ><path d="M1 2.400h4.200v2.600h5.800v4.800h-10z" fill="#e0955c" stroke="#4a2a10" stroke-width="0.900"/></svg>
<span class="t" style="left:58px;top:46.82px;font-size:7.75px;line-height:9.75px;color:#111;">2. 2-й этаж</span>
<svg style="left:43.5px;top:57.25px" width="12" height="12" viewBox="0 0 12 12" ><path d="M1 2.400h4.200v2.600h5.800v4.800h-10z" fill="#e0955c" stroke="#4a2a10" stroke-width="0.900"/></svg>
<span class="t" style="left:58px;top:58.25px;font-size:7.75px;line-height:9.75px;color:#111;">1. 1-й этаж</span>
<svg style="left:43.5px;top:68.68px" width="12" height="12" viewBox="0 0 12 12" ><path d="M1 2.400h4.200v2.600h5.800v4.800h-10z" fill="#e0955c" stroke="#4a2a10" stroke-width="0.900"/></svg>
<span class="t" style="left:58px;top:69.68px;font-size:7.75px;line-height:9.75px;color:#111;">-1. Подземный этаж</span>
<svg style="left:19.2px;top:82.71px" width="6.8" height="6.8" viewBox="0 0 6.8 6.8" ><rect x="0.400" y="0.400" width="6" height="6" fill="#fff" stroke="#8c9cb4" stroke-width="0.800"/><path d="M1.800 3.400h3.200" stroke="#222" stroke-width="0.900"/></svg>
<svg style="left:30.58px;top:80.59px" width="11.04" height="11.04" viewBox="0 0 12 12" ><rect x="0.900" y="1.600" width="10.200" height="8.800" fill="#f4f4fa" stroke="#1a1a4a" stroke-width="1.200"/><path d="M4 9v-2.400c0-2.600 4-2.600 4 0v2.400" fill="none" stroke="#111" stroke-width="1"/></svg>
<span class="t" style="left:43.8px;top:81.11px;font-size:7.75px;line-height:9.75px;color:#111;">Разрезы</span>
<svg style="left:43.5px;top:91.54px" width="12" height="12" viewBox="0 0 12 12" ><path d="M0.800 5.600l5.200-4.400l5.200 4.400" fill="none" stroke="#6a5a2a" stroke-width="1.200"/><path d="M2.200 5.400l3.800-3l3.800 3v5.400h-7.600z" fill="#f2e6b4" stroke="#6a5a2a" stroke-width="1"/><rect x="4.400" y="6" width="3.200" height="3.400" fill="#fffbe6"/></svg>
<span class="t" style="left:58px;top:92.54px;font-size:7.75px;line-height:9.75px;color:#111;">Р-1 Разрез 1</span>
<svg style="left:43.5px;top:102.97px" width="12" height="12" viewBox="0 0 12 12" ><path d="M0.800 5.600l5.200-4.400l5.200 4.400" fill="none" stroke="#6a5a2a" stroke-width="1.200"/><path d="M2.200 5.400l3.800-3l3.800 3v5.400h-7.600z" fill="#f2e6b4" stroke="#6a5a2a" stroke-width="1"/><rect x="4.400" y="6" width="3.200" height="3.400" fill="#fffbe6"/></svg>
<span class="t" style="left:58px;top:103.97px;font-size:7.75px;line-height:9.75px;color:#111;">Р-2 Разрез 2</span>
<svg style="left:19.2px;top:117px" width="6.8" height="6.8" viewBox="0 0 6.8 6.8" ><rect x="0.400" y="0.400" width="6" height="6" fill="#fff" stroke="#8c9cb4" stroke-width="0.800"/><path d="M1.800 3.400h3.200" stroke="#222" stroke-width="0.900"/></svg>
<svg style="left:30.58px;top:114.88px" width="11.04" height="11.04" viewBox="0 0 12 12" ><rect x="0.900" y="1.600" width="10.200" height="8.800" fill="#f4f4fa" stroke="#1a1a4a" stroke-width="1.200"/><path d="M3.400 6.400l2.600-2.400l2.600 2.400M4.200 6.200v2.800h3.600v-2.800" fill="none" stroke="#1a1a6a" stroke-width="1"/></svg>
<span class="t" style="left:43.8px;top:115.4px;font-size:7.75px;line-height:9.75px;color:#111;">Фасады</span>
<svg style="left:43.5px;top:125.83px" width="12" height="12" viewBox="0 0 12 12" ><path d="M0.800 5.600l5.200-4.400l5.200 4.400" fill="none" stroke="#5a3a18" stroke-width="1.200"/><path d="M2.200 5.400l3.800-3l3.800 3v5.400h-7.600z" fill="#dc9454" stroke="#5a3a18" stroke-width="1"/><rect x="5" y="5.600" width="2" height="2" fill="#f8e4c0"/></svg>
<span class="t" style="left:58px;top:126.83px;font-size:7.75px;line-height:9.75px;color:#111;">Ф-1 Фасад 1</span>
<svg style="left:43.5px;top:137.26px" width="12" height="12" viewBox="0 0 12 12" ><path d="M0.800 5.600l5.200-4.400l5.200 4.400" fill="none" stroke="#5a3a18" stroke-width="1.200"/><path d="M2.200 5.400l3.800-3l3.800 3v5.400h-7.600z" fill="#dc9454" stroke="#5a3a18" stroke-width="1"/><rect x="5" y="5.600" width="2" height="2" fill="#f8e4c0"/></svg>
<span class="t" style="left:58px;top:138.26px;font-size:7.75px;line-height:9.75px;color:#111;">Ф-2 Фасад А</span>
<svg style="left:43.5px;top:148.69px" width="12" height="12" viewBox="0 0 12 12" ><path d="M0.800 5.600l5.200-4.400l5.200 4.400" fill="none" stroke="#5a3a18" stroke-width="1.200"/><path d="M2.200 5.400l3.800-3l3.800 3v5.400h-7.600z" fill="#dc9454" stroke="#5a3a18" stroke-width="1"/><rect x="5" y="5.600" width="2" height="2" fill="#f8e4c0"/></svg>
<span class="t" style="left:58px;top:149.69px;font-size:7.75px;line-height:9.75px;color:#111;">Ф-3 Фасад 2</span>
<svg style="left:43.5px;top:160.12px" width="12" height="12" viewBox="0 0 12 12" ><path d="M0.800 5.600l5.200-4.400l5.200 4.400" fill="none" stroke="#5a3a18" stroke-width="1.200"/><path d="M2.200 5.400l3.800-3l3.800 3v5.400h-7.600z" fill="#dc9454" stroke="#5a3a18" stroke-width="1"/><rect x="5" y="5.600" width="2" height="2" fill="#f8e4c0"/></svg>
<span class="t" style="left:58px;top:161.12px;font-size:7.75px;line-height:9.75px;color:#111;">Ф-4 Фасад Б</span>
<svg style="left:30.58px;top:172.03px" width="11.04" height="11.04" viewBox="0 0 12 12" ><rect x="0.900" y="1.600" width="10.200" height="8.800" fill="#f4f4fa" stroke="#1a1a4a" stroke-width="1.200"/><rect x="2.400" y="4.200" width="7.200" height="4.400" fill="#777"/><path d="M4.600 4.200v4.400M7.200 4.200v4.400" stroke="#222" stroke-width="0.800"/></svg>
<span class="t" style="left:43.8px;top:172.55px;font-size:7.75px;line-height:9.75px;color:#111;">Внутренние виды</span>
<svg style="left:30.58px;top:183.46px" width="11.04" height="11.04" viewBox="0 0 12 12" ><rect x="0.900" y="1.600" width="10.200" height="8.800" fill="#f4f4fa" stroke="#1a1a4a" stroke-width="1.200"/><path d="M3 8.800l2.600-4.400M3 8.800l1.800-0.400" stroke="#111" stroke-width="1.100"/></svg>
<span class="t" style="left:43.8px;top:183.98px;font-size:7.75px;line-height:9.75px;color:#111;">Рабочие листы</span>
<svg style="left:30.58px;top:194.89px" width="11.04" height="11.04" viewBox="0 0 12 12" ><rect x="0.900" y="1.600" width="10.200" height="8.800" fill="#f4f4fa" stroke="#1a1a4a" stroke-width="1.200"/><path d="M3.400 7.600h2.800v-2.600h2.400v4h-5.200z" fill="#333"/></svg>
<span class="t" style="left:43.8px;top:195.41px;font-size:7.75px;line-height:9.75px;color:#111;">Детали</span>
<svg style="left:30.58px;top:206.32px" width="11.04" height="11.04" viewBox="0 0 12 12" ><rect x="0.900" y="1.600" width="10.200" height="8.800" fill="#f4f4fa" stroke="#1a1a4a" stroke-width="1.200"/><path d="M2.600 3.800h3v2.400h-3zM6.800 4.400h2.600M6.800 6.400h2.600M6.800 8.400h2.600M4 6.400v2.800" fill="none" stroke="#111" stroke-width="0.900"/></svg>
<span class="t" style="left:43.8px;top:206.84px;font-size:7.75px;line-height:9.75px;color:#111;">3D-документы</span>
<svg style="left:19.2px;top:219.87px" width="6.8" height="6.8" viewBox="0 0 6.8 6.8" ><rect x="0.400" y="0.400" width="6" height="6" fill="#fff" stroke="#8c9cb4" stroke-width="0.800"/><path d="M1.800 3.400h3.200" stroke="#222" stroke-width="0.900"/></svg>
<svg style="left:30.58px;top:217.75px" width="11.04" height="11.04" viewBox="0 0 12 12" ><rect x="0.900" y="1.600" width="10.200" height="8.800" fill="#f4f4fa" stroke="#1a1a4a" stroke-width="1.200"/><ellipse cx="6" cy="6.200" rx="2.600" ry="2.400" fill="#8a8ab8" stroke="#111" stroke-width="0.900"/><path d="M6.200 5.200l2 1l-2 1.200z" fill="#111"/></svg>
<span class="t" style="left:43.8px;top:218.27px;font-size:7.75px;line-height:9.75px;color:#111;">3D</span>
<svg style="left:43.5px;top:228.7px" width="12" height="12" viewBox="0 0 12 12" ><rect x="0.600" y="3" width="7.600" height="5" rx="1.600" fill="#d88a5a" stroke="#2a1208" stroke-width="1.100"/><path d="M8.200 5.400l3.200-2.400v5.200z" fill="#1a0a04"/><path d="M4.400 8l-2 3.400M4.400 8l2.400 3.400" stroke="#5a6a3a" stroke-width="0.900"/></svg>
<div style="left:56.4px;top:229.1px;width:50px;height:11px;border:0.800px dotted #555;background:#fff"></div>
<span class="t" style="left:58px;top:229.7px;font-size:7.8px;line-height:9.8px;font-weight:bold;color:#000;">Общая перспектива</span>
<svg style="left:43.5px;top:240.13px" width="12" height="12" viewBox="0 0 12 12" ><path d="M1.400 4.400l4-2.600l5.200 1.800v5l-4 2.800l-5.200-2z" fill="#e8a06a" stroke="#4a2a10" stroke-width="0.900"/><path d="M1.400 4.400l5.200 2l4-2.800M6.600 6.400v5" fill="none" stroke="#4a2a10" stroke-width="0.800"/><path d="M2.200 5.400l3.600 1.400v3.400l-3.600-1.400z" fill="#fbe8d4"/></svg>
<span class="t" style="left:58px;top:241.13px;font-size:7.75px;line-height:9.75px;color:#111;">Общая аксонометрия</span>
<svg style="left:19.2px;top:254.16px" width="6.8" height="6.8" viewBox="0 0 6.8 6.8" ><rect x="0.400" y="0.400" width="6" height="6" fill="#fff" stroke="#8c9cb4" stroke-width="0.800"/><path d="M1.800 3.400h3.200" stroke="#222" stroke-width="0.900"/></svg>
<svg style="left:30.58px;top:252.04px" width="11.04" height="11.04" viewBox="0 0 12 12" ><rect x="0.900" y="1.600" width="10.200" height="8.800" fill="#f4f4fa" stroke="#1a1a4a" stroke-width="1.200"/><rect x="1.600" y="2.200" width="8.800" height="2" fill="#1a1a4a"/><path d="M3.800 4.600v4.800M6 4.600v4.800M8.200 4.600v4.800" stroke="#1a1a4a" stroke-width="1.300"/></svg>
<span class="t" style="left:43.8px;top:252.56px;font-size:7.75px;line-height:9.75px;color:#111;">Каталоги</span>
<svg style="left:32.7px;top:265.59px" width="6.8" height="6.8" viewBox="0 0 6.8 6.8" ><rect x="0.400" y="0.400" width="6" height="6" fill="#fff" stroke="#8c9cb4" stroke-width="0.800"/><path d="M1.800 3.400h3.200" stroke="#222" stroke-width="0.900"/></svg>
<svg style="left:43.5px;top:262.99px" width="12" height="12" viewBox="0 0 12 12" ><rect x="1.400" y="0.800" width="8.600" height="8" fill="#bfe0ec" stroke="#3a7a9a" stroke-width="0.800"/><path d="M1.400 3.400h8.600M4.400 0.800v8M7.200 0.800v8" stroke="#3a7a9a" stroke-width="0.500"/><path d="M5 8h5.600v3.200h-5.600z" fill="#111"/><circle cx="6.400" cy="9.600" r="0.900" fill="#ddd"/><circle cx="9.200" cy="9.600" r="0.900" fill="#ddd"/></svg>
<span class="t" style="left:58px;top:263.99px;font-size:7.75px;line-height:9.75px;color:#111;">Элемент</span>
<svg style="left:56.3px;top:274.42px" width="12" height="12" viewBox="0 0 12 12" ><rect x="1.600" y="0.800" width="8.800" height="10.600" fill="#6f7f74" stroke="#3a4a40" stroke-width="0.600"/><path d="M1.600 3.600h8.800M1.600 6h8.800M1.600 8.600h8.800M4.600 0.800v10.600M7.600 0.800v10.600" stroke="#a8b8ac" stroke-width="0.500"/></svg>
<span class="t" style="left:71.1px;top:275.42px;font-size:7.75px;line-height:9.75px;color:#111;">Смета для</span>
<svg style="left:56.3px;top:285.85px" width="12" height="12" viewBox="0 0 12 12" ><rect x="1.600" y="0.800" width="8.800" height="10.600" fill="#6f7f74" stroke="#3a4a40" stroke-width="0.600"/><path d="M1.600 3.600h8.800M1.600 6h8.800M1.600 8.600h8.800M4.600 0.800v10.600M7.600 0.800v10.600" stroke="#a8b8ac" stroke-width="0.500"/></svg>
<span class="t" style="left:71.1px;top:286.85px;font-size:7.75px;line-height:9.75px;color:#111;">Смета об</span>
<svg style="left:56.3px;top:297.28px" width="12" height="12" viewBox="0 0 12 12" ><rect x="1.600" y="0.800" width="8.800" height="10.600" fill="#6f7f74" stroke="#3a4a40" stroke-width="0.600"/><path d="M1.600 3.600h8.800M1.600 6h8.800M1.600 8.600h8.800M4.600 0.800v10.600M7.600 0.800v10.600" stroke="#a8b8ac" stroke-width="0.500"/></svg>
<span class="t" style="left:71.1px;top:298.28px;font-size:7.75px;line-height:9.75px;color:#111;">Смета ок</span>
<svg style="left:56.3px;top:308.71px" width="12" height="12" viewBox="0 0 12 12" ><rect x="1.600" y="0.800" width="8.800" height="10.600" fill="#6f7f74" stroke="#3a4a40" stroke-width="0.600"/><path d="M1.600 3.600h8.800M1.600 6h8.800M1.600 8.600h8.800M4.600 0.800v10.600M7.600 0.800v10.600" stroke="#a8b8ac" stroke-width="0.500"/></svg>
<span class="t" style="left:71.1px;top:309.71px;font-size:7.75px;line-height:9.75px;color:#111;">Смета ст</span>
<svg style="left:56.3px;top:320.14px" width="12" height="12" viewBox="0 0 12 12" ><rect x="1.600" y="0.800" width="8.800" height="10.600" fill="#6f7f74" stroke="#3a4a40" stroke-width="0.600"/><path d="M1.600 3.600h8.800M1.600 6h8.800M1.600 8.600h8.800M4.600 0.800v10.600M7.600 0.800v10.600" stroke="#a8b8ac" stroke-width="0.500"/></svg>
<span class="t" style="left:71.1px;top:321.14px;font-size:7.75px;line-height:9.75px;color:#111;">Экспликация</span>
<svg style="left:32.7px;top:334.17px" width="6.8" height="6.8" viewBox="0 0 6.8 6.8" ><rect x="0.400" y="0.400" width="6" height="6" fill="#fff" stroke="#8c9cb4" stroke-width="0.800"/><path d="M1.800 3.400h3.200" stroke="#222" stroke-width="0.900"/></svg>
<svg style="left:43.5px;top:331.57px" width="12" height="12" viewBox="0 0 12 12" ><rect x="1.400" y="0.800" width="8.600" height="8" fill="#c8dcf4" stroke="#2a4a9a" stroke-width="0.900"/><path d="M2.400 3h6.400M2.400 5h6.400" stroke="#2a4a9a" stroke-width="0.700"/><path d="M2.800 7l3.600 2.400l-3.600 2z" fill="#c8202a"/><path d="M6.400 8.400h4.800v3h-4.800z" fill="#e8b048"/></svg>
<span class="t" style="left:58px;top:332.57px;font-size:7.75px;line-height:9.75px;color:#111;">Компонента</span>
<svg style="left:56.3px;top:343px" width="12" height="12" viewBox="0 0 12 12" ><rect x="1.600" y="0.800" width="8.800" height="10.600" fill="#6f7f74" stroke="#3a4a40" stroke-width="0.600"/><path d="M1.600 3.600h8.800M1.600 6h8.800M1.600 8.600h8.800M4.600 0.800v10.600M7.600 0.800v10.600" stroke="#a8b8ac" stroke-width="0.500"/></svg>
<span class="t" style="left:71.1px;top:344px;font-size:7.75px;line-height:9.75px;color:#111;">Все компоненты</span>
<svg style="left:56.3px;top:354.43px" width="12" height="12" viewBox="0 0 12 12" ><rect x="1.600" y="0.800" width="8.800" height="10.600" fill="#6f7f74" stroke="#3a4a40" stroke-width="0.600"/><path d="M1.600 3.600h8.800M1.600 6h8.800M1.600 8.600h8.800M4.600 0.800v10.600M7.600 0.800v10.600" stroke="#a8b8ac" stroke-width="0.500"/></svg>
<span class="t" style="left:71.1px;top:355.43px;font-size:7.75px;line-height:9.75px;color:#111;">Компоненты</span>
<svg style="left:56.3px;top:365.86px" width="12" height="12" viewBox="0 0 12 12" ><rect x="1.600" y="0.800" width="8.800" height="10.600" fill="#6f7f74" stroke="#3a4a40" stroke-width="0.600"/><path d="M1.600 3.600h8.800M1.600 6h8.800M1.600 8.600h8.800M4.600 0.800v10.600M7.600 0.800v10.600" stroke="#a8b8ac" stroke-width="0.500"/></svg>
<span class="t" style="left:71.1px;top:366.86px;font-size:7.75px;line-height:9.75px;color:#111;">Накладные</span>
<svg style="left:19.2px;top:379.89px" width="6.8" height="6.8" viewBox="0 0 6.8 6.8" ><rect x="0.400" y="0.400" width="6" height="6" fill="#fff" stroke="#8c9cb4" stroke-width="0.800"/><path d="M1.800 3.400h3.200" stroke="#222" stroke-width="0.900"/></svg>
<svg style="left:30.58px;top:377.77px" width="11.04" height="11.04" viewBox="0 0 12 12" ><rect x="0.900" y="1.600" width="10.200" height="8.800" fill="#f4f4fa" stroke="#1a1a4a" stroke-width="1.200"/><rect x="1.600" y="2.200" width="8.800" height="1.600" fill="#1a1a4a"/><path d="M2.800 7.800h6.400" stroke="#1a1a4a" stroke-width="1.600"/></svg>
<span class="t" style="left:43.8px;top:378.29px;font-size:7.75px;line-height:9.75px;color:#111;">Индексы проекта</span>
<svg style="left:44.22px;top:389.44px" width="10.56" height="10.56" viewBox="0 0 12 12" ><rect x="1.200" y="1" width="10" height="9.600" fill="#f6f6f6" stroke="#1a1a1a" stroke-width="1.200"/><rect x="1.200" y="1" width="10" height="2.200" fill="#1a1a1a"/><rect x="6.600" y="4.600" width="3.600" height="5" fill="#2a2a2a"/><rect x="0.400" y="6.400" width="4.600" height="4.800" fill="#5a7ad0" stroke="#2a3a8c" stroke-width="0.600"/></svg>
<span class="t" style="left:58px;top:389.72px;font-size:7.75px;line-height:9.75px;color:#111;">Индекс листов</span>
<svg style="left:44.22px;top:400.87px" width="10.56" height="10.56" viewBox="0 0 12 12" ><rect x="1.200" y="1" width="10" height="9.600" fill="#f6f6f6" stroke="#1a1a1a" stroke-width="1.200"/><rect x="1.200" y="1" width="10" height="2.200" fill="#1a1a1a"/><rect x="6.600" y="4.600" width="3.600" height="5" fill="#2a2a2a"/><rect x="0.400" y="6.400" width="4.600" height="4.800" fill="#5a7ad0" stroke="#2a3a8c" stroke-width="0.600"/></svg>
<span class="t" style="left:58px;top:401.15px;font-size:7.75px;line-height:9.75px;color:#111;">П-АР Содержание</span>
<svg style="left:44.22px;top:412.3px" width="10.56" height="10.56" viewBox="0 0 12 12" ><rect x="1.200" y="1" width="10" height="9.600" fill="#f6f6f6" stroke="#1a1a1a" stroke-width="1.200"/><rect x="1.200" y="1" width="10" height="2.200" fill="#1a1a1a"/><rect x="6.600" y="4.600" width="3.600" height="5" fill="#2a2a2a"/><rect x="0.400" y="6.400" width="4.600" height="4.800" fill="#5a7ad0" stroke="#2a3a8c" stroke-width="0.600"/></svg>
<span class="t" style="left:58px;top:412.58px;font-size:7.75px;line-height:9.75px;color:#111;">П-КР Содержание</span>
</div>
<div style="left:882.6px;top:597.8px;width:12.6px;height:12.6px;background:#f1efe6;border:0.700px solid #dedbd0"></div>
<svg style="left:883px;top:598px" width="12" height="12" viewBox="0 0 12 12" ><path d="M1.400 3h6l1.400-1.600h2v9.400h-9.400z" fill="#a19e96"/></svg>
<div style="left:898.8px;top:597.8px;width:13.4px;height:12.6px;background:#f1efe6;border:0.700px solid #dedbd0"></div>
<svg style="left:901.6px;top:600.4px" width="8" height="8" viewBox="0 0 8 8" ><path d="M0.800 0.800l6.400 6.400M7.200 0.800l-6.400 6.400" stroke="#8e8b84" stroke-width="1.400"/></svg>
<div style="left:800px;top:617.4px;width:114px;height:10.8px;background:linear-gradient(90deg,#f6f5ef,#f3f1ea 70%,#ece9d8)"></div>
<svg style="left:808px;top:620.6px" width="6" height="4" viewBox="0 0 6 4" ><path d="M0 0h5.600l-2.800 3.400z" fill="#111"/></svg>
<span class="t" style="left:820.7px;top:617.8px;font-size:7.8px;line-height:9.8px;letter-spacing:-0.12px;color:#222;">Спецификации</span>
<svg style="left:799px;top:635.4px" width="8" height="7" viewBox="0 0 8 7" ><circle cx="2.600" cy="3.400" r="1.800" fill="none" stroke="#111" stroke-width="1"/><path d="M4.400 3.400h1.600M7 0.800v5M2.600 5.200v1.600" stroke="#111" stroke-width="1"/></svg>
<div style="left:808.5px;top:633.5px;width:23px;height:12.4px;background:#ece9d8;border:0.800px solid #d9d6c8;border-top-color:#c5c2b4"></div>
<div style="left:833px;top:633.5px;width:81px;height:12.4px;background:#f3f1e8;border:0.800px solid #d9d6c8;border-top-color:#c5c2b4"></div>
<span class="t" style="left:834.6px;top:634.8px;font-size:7.6px;line-height:9.6px;letter-spacing:-0.1px;color:#222;">Общая перспектива</span>
<div style="left:809.2px;top:648.5px;width:93.4px;height:13.8px;background:linear-gradient(#fff,#f6f5f0 70%,#e4e1d6);border:1px solid #3a3a34;border-radius:2.400px"></div>
<span class="t" style="left:832.8px;top:650.4px;font-size:7.8px;line-height:9.8px;letter-spacing:-0.19px;color:#222;">Параметры...</span>
<div style="left:70.7px;top:656.4px;width:16.4px;height:9.8px;background:#fbfbf8;border:0.900px solid #3a3a36;border-radius:2.400px"></div>
<svg style="left:72.9px;top:657.4px" width="12" height="8" viewBox="0 0 12 8" ><path d="M1.400 1.600v4M1 3h1M4.400 5.400h5.600M6 2.400v4.200M8 3v3.400" stroke="#111" stroke-width="0.900"/><circle cx="3" cy="5" r="0.700" fill="#111"/></svg>
<div style="left:87.4px;top:656.4px;width:16.4px;height:9.8px;background:#fbfbf8;border:0.900px solid #3a3a36;border-radius:2.400px"></div>
<svg style="left:89.6px;top:657.4px" width="12" height="8" viewBox="0 0 12 8" ><rect x="1.600" y="1" width="5.600" height="5" fill="#fff" stroke="#111" stroke-width="0.900"/><circle cx="7.600" cy="3.600" r="2.200" fill="#e8e8f4" stroke="#111" stroke-width="0.800"/><path d="M9 5.200l2 2" stroke="#111" stroke-width="1.100"/></svg>
<div style="left:104.2px;top:656.4px;width:16.4px;height:9.8px;background:#fbfbf8;border:0.900px solid #3a3a36;border-radius:2.400px"></div>
<svg style="left:106.4px;top:657.4px" width="12" height="8" viewBox="0 0 12 8" ><path d="M1 5.600l4-2.400l2 1.400l4-2.800" fill="none" stroke="#111" stroke-width="1.200"/><path d="M1.400 2.400h2M8 6h3" stroke="#111" stroke-width="0.800"/><circle cx="6" cy="4" r="1.200" fill="#111"/></svg>
<div style="left:121.2px;top:656.4px;width:16.4px;height:9.8px;background:#fbfbf8;border:0.900px solid #3a3a36;border-radius:2.400px"></div>
<svg style="left:123.4px;top:657.4px" width="12" height="8" viewBox="0 0 12 8" ><circle cx="3.800" cy="3.400" r="2.600" fill="#eef" stroke="#111" stroke-width="0.900"/><path d="M5.600 5.200l2 2" stroke="#111" stroke-width="1.100"/><path d="M9.600 0.800v3.600M8 2.600h3.200M8 6h3.200" stroke="#111" stroke-width="0.900"/></svg>
<div style="left:138.4px;top:656.4px;width:16.4px;height:9.8px;background:#fbfbf8;border:0.900px solid #3a3a36;border-radius:2.400px"></div>
<svg style="left:140.6px;top:657.4px" width="12" height="8" viewBox="0 0 12 8" ><circle cx="5" cy="3.400" r="2.800" fill="#eef" stroke="#111" stroke-width="1"/><path d="M3.400 3.400h3.200M5 1.800v3.200" stroke="#111" stroke-width="0.900"/><path d="M7 5.400l2.800 2.200" stroke="#111" stroke-width="1.300"/></svg>
<div style="left:155.4px;top:656.4px;width:16.4px;height:9.8px;background:#fbfbf8;border:0.900px solid #3a3a36;border-radius:2.400px"></div>
<svg style="left:157.6px;top:657.4px" width="12" height="8" viewBox="0 0 12 8" ><circle cx="5" cy="3.400" r="2.800" fill="#eef" stroke="#111" stroke-width="1"/><path d="M3.400 3.400h3.200" stroke="#111" stroke-width="0.900"/><path d="M7 5.400l2.800 2.200" stroke="#111" stroke-width="1.300"/></svg>
<div style="left:172.6px;top:656.4px;width:16.4px;height:9.8px;background:#fbfbf8;border:0.900px solid #3a3a36;border-radius:2.400px"></div>
<svg style="left:174.8px;top:657.4px" width="12" height="8" viewBox="0 0 12 8" ><path d="M3 6.600v-3.600c0.600-1 1.400-1 1.600 0v-1.200c0.400-1 1.400-1 1.600 0v1c0.400-0.800 1.400-0.800 1.600 0.200v1c0.600-0.600 1.400-0.400 1.400 0.600v2.600" fill="#fff" stroke="#111" stroke-width="0.800"/></svg>
<div style="left:189.8px;top:656.4px;width:16.4px;height:9.8px;background:#d3ddf3;border:0.900px solid #3a3a36;border-radius:2.400px"></div>
<svg style="left:192px;top:657.4px" width="12" height="8" viewBox="0 0 12 8" ><ellipse cx="6" cy="3.800" rx="4.400" ry="2.800" fill="#b8c8ec" stroke="#3a4a7a" stroke-width="0.900"/><ellipse cx="6" cy="3.800" rx="2" ry="2.600" fill="none" stroke="#3a4a7a" stroke-width="0.800"/></svg>
<div style="left:206.8px;top:656.4px;width:16.4px;height:9.8px;background:#fbfbf8;border:0.900px solid #3a3a36;border-radius:2.400px"></div>
<svg style="left:209px;top:657.4px" width="12" height="8" viewBox="0 0 12 8" ><circle cx="6" cy="1.400" r="1" fill="#111"/><path d="M6 2.400l0.200 2.400l1.400 2.600M6.200 4.800l-1.800 2.600M4.200 3.600l1.800-1l1.800 1.400" fill="none" stroke="#111" stroke-width="1.100"/></svg>
<div style="left:223.8px;top:656.4px;width:16.4px;height:9.8px;background:#fbfbf8;border:0.900px solid #3a3a36;border-radius:2.400px"></div>
<svg style="left:226px;top:657.4px" width="12" height="8" viewBox="0 0 12 8" ><path d="M1.600 1.200h2M1.600 1.200v2M10.400 1.200h-2M10.400 1.200v2M1.600 6.800h2M1.600 6.800v-2M10.400 6.800h-2M10.400 6.800v-2" stroke="#111" stroke-width="1"/><circle cx="6" cy="4" r="2" fill="#e8e8f4" stroke="#111" stroke-width="0.900"/></svg>
<div style="left:240.8px;top:656.4px;width:16.4px;height:9.8px;background:#fbfbf8;border:0.900px solid #3a3a36;border-radius:2.400px"></div>
<svg style="left:243px;top:657.4px" width="12" height="8" viewBox="0 0 12 8" ><path d="M0.600 3.600l2.600-2.200v1.400h2v1.600h-2v1.400z" fill="#111"/><circle cx="7.600" cy="3.400" r="2.600" fill="#eef" stroke="#111" stroke-width="0.900"/><path d="M9.400 5.200l2 2.200" stroke="#111" stroke-width="1.200"/></svg>
<svg style="left:260.6px;top:657.4px" width="12" height="8" viewBox="0 0 12 8" ><circle cx="4" cy="3.600" r="2.800" fill="#b4b1a8"/><path d="M6 5.600l2 2" stroke="#a19e96" stroke-width="1.200"/><path d="M8 3.600h3.400M10 2.200l1.600 1.400l-1.600 1.400" stroke="#a19e96" stroke-width="0.900" fill="none"/></svg>
<div style="left:0px;top:666.8px;width:914px;height:24.6px;background:#ece9d8"></div>
<div style="left:0px;top:666.6px;width:796px;height:0.8px;background:#fbfaf6"></div>
<div style="left:72.6px;top:670.4px;width:16.6px;height:17.6px;background:#fbfbf8;border:0.900px solid #4a4a44;border-radius:2.400px"></div>
<svg style="left:75px;top:673.2px" width="12" height="12" viewBox="0 0 12 12" ><path d="M3 2.600l2.200 2.400l-2.200 0.400l2.200 1.200l-2.200 2.400M9 2.600l-2.200 2.400l2.200 0.400l-2.200 1.200l2.200 2.400" fill="none" stroke="#111" stroke-width="1.300"/><circle cx="6" cy="6" r="1.200" fill="#111"/></svg>
<div style="left:93.2px;top:670.4px;width:18px;height:17.6px;background:repeating-conic-gradient(#fff 0 25%,#d4d4cc 0 50%) 0 0/2px 2px;border:0.900px solid #4a4a44;border-radius:2.400px"></div>
<svg style="left:96.2px;top:673.4px" width="12" height="12" viewBox="0 0 12 12" ><path d="M1.400 9l9-5" stroke="#111" stroke-width="1.600"/><path d="M0.800 9.400l3-0.400l-1.400-2zM11.200 3.600l-3 0.400l1.400 2z" fill="#111"/></svg>
<svg style="left:119.5px;top:672.7px" width="13" height="13" viewBox="0 0 13 13" ><path d="M2.600 2.400l7 3.200l-2.600 5M2.600 2.400l-1.200 6.600l5.600 1.600" fill="none" stroke="#c9c6ba" stroke-width="0.900" stroke-dasharray="1.400 0.900"/><circle cx="2.600" cy="2.400" r="1" fill="#c4c1b6"/><circle cx="9.600" cy="5.600" r="1" fill="#c4c1b6"/></svg>
<svg style="left:144.2px;top:675.2px" width="8" height="8" viewBox="0 0 8 8" ><path d="M4 0.400v7.200M0.400 4h7.200" stroke="#222" stroke-width="0.900"/></svg>
<svg style="left:156.6px;top:682.4px" width="3" height="4" viewBox="0 0 3 4" ><path d="M0 0l2.800 2l-2.800 2z" fill="#111"/></svg>
<div style="left:163.3px;top:669px;width:0.8px;height:21px;background:#d3d0c0"></div>
<div style="left:164.1px;top:669px;width:0.7px;height:21px;background:#f8f7f1"></div>
<div style="left:168.3px;top:670.4px;width:9px;height:17.8px;background:#f4f3ee;border:0.900px solid #55534c;border-radius:2.400px"></div>
<svg style="left:169.5px;top:674.8px" width="7" height="9" viewBox="0 0 7 9" ><path d="M3.400 0.800l2.800 5.200h-5.600z" fill="none" stroke="#111" stroke-width="1.300"/><path d="M0.400 8h6.200" stroke="#111" stroke-width="1.200"/></svg>
<div style="left:195.6px;top:669.8px;width:67px;height:9.4px;background:#fff;border-top:0.700px solid #d8d5c8"></div>
<div style="left:195.6px;top:680.2px;width:67px;height:9.4px;background:#fff;border-top:0.700px solid #d8d5c8"></div>
<span class="t" style="left:182.6px;top:670.2px;font-size:7.2px;line-height:9.2px;font-weight:bold;color:#222;">Δx:</span>
<span class="t" style="left:197.4px;top:670px;font-size:7.6px;line-height:9.6px;letter-spacing:0px;color:#111;">-3865,3</span>
<span class="t" style="left:182.6px;top:680.6px;font-size:7.2px;line-height:9.2px;font-weight:bold;color:#222;">Δy:</span>
<span class="t" style="left:197.4px;top:680.4px;font-size:7.6px;line-height:9.6px;letter-spacing:0.02px;color:#111;">64990,9</span>
<div style="left:264.8px;top:669px;width:0.8px;height:21px;background:#d3d0c0"></div>
<div style="left:265.6px;top:669px;width:0.7px;height:21px;background:#f8f7f1"></div>
<div style="left:270.2px;top:670.4px;width:9px;height:17.8px;background:#f4f3ee;border:0.900px solid #55534c;border-radius:2.400px"></div>
<svg style="left:271.4px;top:674.8px" width="7" height="9" viewBox="0 0 7 9" ><path d="M3.400 0.800l2.800 5.200h-5.600z" fill="none" stroke="#111" stroke-width="1.300"/><path d="M0.400 8h6.200" stroke="#111" stroke-width="1.200"/></svg>
<div style="left:297px;top:669.8px;width:67.4px;height:9.4px;background:#fff;border-top:0.700px solid #d8d5c8"></div>
<div style="left:297px;top:680.2px;width:67.4px;height:9.4px;background:#fff;border-top:0.700px solid #d8d5c8"></div>
<span class="t" style="left:284.4px;top:670.2px;font-size:7.2px;line-height:9.2px;font-weight:bold;color:#222;">Δr:</span>
<span class="t" style="left:298.9px;top:670px;font-size:7.6px;line-height:9.6px;letter-spacing:0.02px;color:#111;">65105,7</span>
<span class="t" style="left:290.4px;top:680.6px;font-size:7.2px;line-height:9.2px;font-weight:bold;color:#222;">a:</span>
<span class="t" style="left:298.9px;top:680.4px;font-size:7.6px;line-height:9.6px;letter-spacing:0.07px;color:#111;">93,40°</span>
<div style="left:366.4px;top:669px;width:0.8px;height:21px;background:#d3d0c0"></div>
<div style="left:367.2px;top:669px;width:0.7px;height:21px;background:#f8f7f1"></div>
<svg style="left:375.9px;top:672.9px" width="13" height="13" viewBox="0 0 13 13" ><path d="M2 2l8 8M10 2l-8 8" stroke="#a6a39a" stroke-width="1.700"/><circle cx="6" cy="6" r="2.200" fill="#a6a39a"/><path d="M9.600 9.200l1.400 2l-2.200-0.400z" fill="#8e8b84"/></svg>
<div style="left:411px;top:669.8px;width:68px;height:9.4px;background:#fff;border-top:0.700px solid #d8d5c8"></div>
<span class="t" style="left:398.4px;top:670.2px;font-size:7.2px;line-height:9.2px;font-weight:bold;color:#222;">Δz:</span>
<span class="t" style="left:413px;top:670px;font-size:7.6px;line-height:9.6px;color:#111;">0,0</span>
<span class="t" style="left:398.4px;top:680.4px;font-size:7.2px;line-height:9.2px;font-weight:bold;letter-spacing:-0.1px;color:#222;">отн. Проектный нуль</span>
<div style="left:498px;top:680.6px;width:7.6px;height:7.6px;background:#f6f5f0;border:0.900px solid #222;border-radius:1px"></div>
<svg style="left:500.6px;top:682.4px" width="3" height="4" viewBox="0 0 3 4" ><path d="M0 0l2.800 2l-2.800 2z" fill="#111"/></svg>
<div style="left:514px;top:670px;width:1.4px;height:19px;background:repeating-linear-gradient(#b9b5a4 0 1px,#f6f5ee 1px 2.2px)"></div>
<div style="left:520.2px;top:670.4px;width:20.2px;height:17.6px;background:#e4e2d8;border:0.900px solid #3a3a36;border-radius:2.400px"></div>
<svg style="left:523.8px;top:672.8px" width="12.4" height="12.4" viewBox="0 0 12.4 12.4" ><path d="M1 3h9.600l-5 5.600z" fill="#fff" stroke="#111" stroke-width="1"/><path d="M8 5.600v5l1.400-1.200l1 2l0.800-0.400l-1-2h1.800z" fill="#111"/></svg>
<div style="left:541.6px;top:670.4px;width:8.4px;height:17.6px;background:#f6f5f0;border:0.900px solid #3a3a36;border-radius:2.400px"></div>
<svg style="left:544.6px;top:677.2px" width="3" height="4" viewBox="0 0 3 4" ><path d="M0 0l2.800 2l-2.800 2z" fill="#111"/></svg>
<div style="left:554.2px;top:670.4px;width:17.6px;height:17.6px;background:#f1efe6;border:0.900px solid #d4d1c4;border-radius:2.400px"></div>
<svg style="left:557px;top:673.2px" width="12" height="12" viewBox="0 0 12 12" ><path d="M2 10l8-8" stroke="#b4b1a8" stroke-width="1.100"/><circle cx="2.400" cy="9.600" r="1" fill="#b4b1a8"/><circle cx="9.600" cy="2.400" r="1" fill="#b4b1a8"/></svg>
<div style="left:575.1px;top:669px;width:0.8px;height:21px;background:#d3d0c0"></div>
<div style="left:575.9px;top:669px;width:0.7px;height:21px;background:#f8f7f1"></div>
<svg style="left:582.2px;top:672.4px" width="12" height="12" viewBox="0 0 12 12" ><path d="M2 6l3 3.400M5 9.400l5.600-6.800" fill="none" stroke="#111" stroke-width="1.500"/></svg>
<svg style="left:596.6px;top:682.4px" width="3" height="4" viewBox="0 0 3 4" ><path d="M0 0l2.800 2l-2.800 2z" fill="#111"/></svg>
<svg style="left:608.6px;top:673px" width="12" height="12" viewBox="0 0 12 12" ><path d="M5 1v6l-3.600 2.400M5 7l5 2" fill="none" stroke="#c4c1b6" stroke-width="1"/><path d="M3.800 2.600l1.200-1.800l1.200 1.800z" fill="#c4c1b6"/></svg>
<svg style="left:622.6px;top:682.4px" width="3" height="4" viewBox="0 0 3 4" ><path d="M0 0l2.800 2l-2.800 2z" fill="#c4c1b6"/></svg>
<svg style="left:631.1px;top:672.8px" width="12.4" height="12.4" viewBox="0 0 12.4 12.4" ><rect x="4.400" y="1" width="6.400" height="5.600" fill="#fff" stroke="#111" stroke-width="0.900"/><path d="M2 4.400h6.400v5.600h-6.400z" fill="none" stroke="#111" stroke-width="0.900"/><circle cx="2" cy="4.400" r="1.200" fill="#fff" stroke="#111" stroke-width="0.700"/><circle cx="8.400" cy="4.400" r="1.200" fill="#fff" stroke="#111" stroke-width="0.700"/><circle cx="2" cy="10" r="1.200" fill="#fff" stroke="#111" stroke-width="0.700"/><circle cx="8.400" cy="10" r="1.200" fill="#fff" stroke="#111" stroke-width="0.700"/></svg>
<svg style="left:646px;top:682.4px" width="3" height="4" viewBox="0 0 3 4" ><path d="M0 0l2.800 2l-2.800 2z" fill="#111"/></svg>
<div style="left:652.4px;top:670.4px;width:19px;height:17.6px;background:#f4f3ee;border:0.900px solid #3a3a36;border-radius:2.400px"></div>
<svg style="left:655.8px;top:673px" width="12.4" height="12.4" viewBox="0 0 12.4 12.4" ><rect x="1" y="1" width="10" height="10" fill="none" stroke="#555" stroke-width="0.600" stroke-dasharray="1 1"/><circle cx="5.400" cy="5.400" r="3" fill="#eef" stroke="#111" stroke-width="1"/><path d="M7.600 7.600l3 3" stroke="#111" stroke-width="1.500"/></svg>
<div style="left:673.8px;top:669px;width:0.8px;height:21px;background:#d3d0c0"></div>
<div style="left:674.6px;top:669px;width:0.7px;height:21px;background:#f8f7f1"></div>
<svg style="left:681.7px;top:673.4px" width="12" height="12" viewBox="0 0 12 12" ><path d="M1.600 2.400l8 7M9 2l-6.600 7.600" stroke="#111" stroke-width="1.400"/></svg>
<svg style="left:693.6px;top:682.4px" width="3" height="4" viewBox="0 0 3 4" ><path d="M0 0l2.800 2l-2.800 2z" fill="#111"/></svg>
<span class="t" style="left:699.5px;top:671px;font-size:7.3px;line-height:9.3px;font-weight:bold;letter-spacing:-0.09px;color:#222;">Середина</span>
<span class="t" style="left:701.4px;top:680.4px;font-size:6.6px;line-height:8.6px;color:#b4b1a8;">2</span>
<div style="left:748.4px;top:670.8px;width:7.6px;height:7.6px;background:#f6f5f0;border:0.900px solid #222;border-radius:1px"></div>
<svg style="left:751px;top:672.6px" width="3" height="4" viewBox="0 0 3 4" ><path d="M0 0l2.800 2l-2.800 2z" fill="#111"/></svg>
<div style="left:759.1px;top:669px;width:0.8px;height:21px;background:#d3d0c0"></div>
<div style="left:759.9px;top:669px;width:0.7px;height:21px;background:#f8f7f1"></div>
<div style="left:764.6px;top:672.6px;width:44.2px;height:13.4px;background:#f3f1ea;border:0.800px solid #d0cdbf;border-radius:2px"></div>
<span class="t" style="left:780.4px;top:675px;font-size:7.8px;line-height:9.8px;color:#b0ada2;">OK</span>
<div style="left:818.3px;top:672.6px;width:44.6px;height:13.4px;background:#f3f1ea;border:0.800px solid #d0cdbf;border-radius:2px"></div>
<span class="t" style="left:823.4px;top:675px;font-size:7.8px;line-height:9.8px;letter-spacing:-0.15px;color:#b0ada2;">Отменить</span>
<div style="left:0px;top:691.4px;width:914px;height:15.6px;background:#ece9d8;border-top:0.900px solid #d6d3c4"></div>
<div style="left:0px;top:692.3px;width:914px;height:0.7px;background:#fbfaf6"></div>
<span class="t" style="left:1.6px;top:695.2px;font-size:7.8px;line-height:9.8px;letter-spacing:0.02px;color:#1a1a1a;">Щелкните элемент или начертите область выбора.</span>
<svg style="left:760.6px;top:696px" width="11" height="7" viewBox="0 0 11 7" ><rect x="0.600" y="0.800" width="9.600" height="5" rx="1" fill="#c4c2b8" stroke="#55534c" stroke-width="0.900"/><path d="M1.600 4.800h7.600" stroke="#77756c" stroke-width="0.900"/></svg>
<span class="t" style="left:776.6px;top:694.8px;font-size:7.8px;line-height:9.8px;letter-spacing:-0.14px;color:#111;">C: 6.10 ГБ</span>
<svg style="left:831.4px;top:694.8px" width="9" height="9" viewBox="0 0 9 9" ><rect x="0.800" y="0.800" width="7.400" height="7.400" rx="2" fill="#9a988e" stroke="#2a2a26" stroke-width="1.100"/></svg>
<span class="t" style="left:848px;top:694.8px;font-size:7.8px;line-height:9.8px;letter-spacing:-0.27px;color:#111;">726.6 МБ</span>
<div style="left:0px;top:705.6px;width:914px;height:1.2px;background:#e4e8ee"></div>
<div style="left:0px;top:706.6px;width:914px;height:24.4px;background:linear-gradient(#3a6ad0 0%,#2f7ae8 6%,#3a8cf2 12%,#3686ee 20%,#2a68e0 27%,#2456de 40%,#2660de 88%,#1c48bc 96%,#1a40b0 100%)"></div>
<div style="left:0px;top:708.2px;width:67.2px;height:22.8px;background:linear-gradient(#6cc06c 0%,#3f9f3f 16%,#379a37 50%,#2e8a2e 85%,#256f25 100%);border-radius:0 7px 7px 0;box-shadow:1px 0 2px rgba(0,0,30,.5)"></div>
<svg style="left:7px;top:712.6px" width="15" height="15" viewBox="0 0 15 15" ><path d="M1 2.600c2-1 3.600-0.600 5.200 0.200l-1 4.200c-1.600-0.800-3.200-1-5-0.200z" fill="#e8582a"/><path d="M7 3c1.800 0.800 3.400 1 5.400 0l-1 4.200c-2 0.800-3.600 0.600-5.400-0.200z" fill="#7ac043"/><path d="M0 7.800c2-1 3.400-0.600 5 0.200l-1 4.200c-1.600-0.800-3.200-1-5-0.200z" fill="#3a8ee8"/><path d="M5.800 8.400c1.800 0.800 3.400 1 5.400 0l-1 4.200c-2 0.800-3.600 0.600-5.400-0.200z" fill="#f4c12c"/></svg>
<span class="t" style="left:25px;top:712.8px;font-size:11.2px;line-height:13.2px;font-weight:bold;letter-spacing:0.82px;color:#fff;font-style:italic;text-shadow:0.800px 0.800px 1px #1a4a1a;">пуск</span>
<div style="left:80.4px;top:711px;width:1.4px;height:16px;background:repeating-linear-gradient(#1a48b8 0 1px,#5a8cf0 1px 2.200px)"></div>
<svg style="left:83.4px;top:714.2px" width="12" height="12" viewBox="0 0 12 12" ><circle cx="6" cy="6" r="5.200" fill="#d02a3a" stroke="#7a1a2a" stroke-width="0.800"/><path d="M5.400 3.400h1.400v5.200h-1.400z" fill="#f8d8dc"/></svg>
<svg style="left:100.3px;top:714.2px" width="12" height="12" viewBox="0 0 12 12" ><circle cx="6" cy="6" r="5.400" fill="#1a1a1a"/><circle cx="6" cy="6" r="3.800" fill="#e8922a"/><path d="M4 7l2-3l2 3z" fill="#f8e040"/></svg>
<svg style="left:116.7px;top:714.2px" width="12" height="12" viewBox="0 0 12 12" ><rect x="1.400" y="3.400" width="9.400" height="7.200" fill="#e8eef8" stroke="#4a6aa8" stroke-width="0.800"/><path d="M3.400 1v4M8.600 1v4" stroke="#c8d4ec" stroke-width="1.400"/><path d="M3 6.600h2.400v2.400h-2.400zM6.600 6.600h2.400v2.400h-2.400z" fill="#3a5ab8"/></svg>
<svg style="left:133.3px;top:714.2px" width="12" height="12" viewBox="0 0 12 12" ><circle cx="6" cy="6" r="5.200" fill="#f4f0ec" stroke="#a8382a" stroke-width="0.900"/><path d="M1 6a5 5 0 0 1 10 0z" fill="#d8442a"/><path d="M3 8.400h6" stroke="#e8a02a" stroke-width="1.600"/></svg>
<svg style="left:149.7px;top:714.2px" width="12" height="12" viewBox="0 0 12 12" ><circle cx="6" cy="6.400" r="4.200" fill="none" stroke="#6ac0f8" stroke-width="2"/><path d="M2.400 6.400h7.400" stroke="#6ac0f8" stroke-width="1.600"/><path d="M1 5c2-4 8-5 10-2" fill="none" stroke="#f8d84a" stroke-width="1"/></svg>
<span class="t" style="left:174.4px;top:711.6px;font-size:7.6px;line-height:9.6px;font-weight:bold;color:#b8d0f8;">»</span>
<div style="left:193.8px;top:711.4px;width:111.8px;height:17.8px;background:linear-gradient(#5a94f4 0%,#3c7eee 12%,#3678ea 60%,#2e6adc 100%);border-radius:2.400px;box-shadow:inset 0 0 0 0.700px #6aa0f8"></div>
<svg style="left:198.8px;top:714.2px" width="12" height="12" viewBox="0 0 12 12" ><circle cx="6" cy="6" r="5.200" fill="#c8202a" stroke="#6a1018" stroke-width="0.800"/><ellipse cx="6" cy="6" rx="1.800" ry="3.400" fill="#f4c8c8"/></svg>
<span class="t" style="left:214.3px;top:716px;font-size:7.8px;line-height:9.8px;letter-spacing:0.08px;color:#fff;">ArchiCad_Урок_Под...</span>
<div style="left:308px;top:711.4px;width:111px;height:17.8px;background:linear-gradient(#5a94f4 0%,#3c7eee 12%,#3678ea 60%,#2e6adc 100%);border-radius:2.400px;box-shadow:inset 0 0 0 0.700px #6aa0f8"></div>
<svg style="left:313px;top:714.2px" width="12" height="12" viewBox="0 0 12 12" ><path d="M1.400 3.600l4.600-2.400l4.600 2.400v5l-4.600 2.600l-4.600-2.600z" fill="#4ab83a" stroke="#1a6a1a" stroke-width="0.800"/><path d="M3.400 5l2.400 1.400l2.800-1.600" fill="none" stroke="#c8f0a8" stroke-width="1.200"/></svg>
<span class="t" style="left:328.6px;top:716px;font-size:7.8px;line-height:9.8px;letter-spacing:-0.35px;color:#fff;">СТАТЬИ ДЛЯ САЙТА</span>
<div style="left:422px;top:711.4px;width:111.4px;height:17.8px;background:linear-gradient(#5a94f4 0%,#3c7eee 12%,#3678ea 60%,#2e6adc 100%);border-radius:2.400px;box-shadow:inset 0 0 0 0.700px #6aa0f8"></div>
<svg style="left:427px;top:714.2px" width="12" height="12" viewBox="0 0 12 12" ><path d="M2 1.400h5.600l2.600 2.600v7h-8.200z" fill="#eef4fc" stroke="#5a7ab8" stroke-width="0.800"/><path d="M3.600 5h5M3.600 7h5M3.600 9h3" stroke="#4a9ad8" stroke-width="0.900"/></svg>
<span class="t" style="left:443px;top:716px;font-size:7.8px;line-height:9.8px;letter-spacing:0.09px;color:#fff;">Архикад -программа...</span>
<div style="left:535.8px;top:711.4px;width:114px;height:17.8px;background:linear-gradient(#2456c4,#1c48b0 50%,#1a44a8);border-radius:2.400px;box-shadow:inset 0 0 0 0.700px #14389a"></div>
<svg style="left:540.8px;top:714.2px" width="12" height="12" viewBox="0 0 12 12" ><path d="M0.600 11.400l3.600-10h3.200l4 10z" fill="#8a8a8a"/><path d="M4.200 1.400h1.600l-2.200 10h-3z" fill="#2a2a2a"/><path d="M7.400 1.400l4 10h-3.200z" fill="#d8d8d8"/></svg>
<span class="t" style="left:557.9px;top:716px;font-size:7.8px;line-height:9.8px;letter-spacing:-0.12px;color:#fff;">Без имени - Graphiso...</span>
<span class="t" style="left:700.6px;top:716.2px;font-size:8.4px;line-height:10.4px;color:#fff;">RL</span>
<div style="left:719.8px;top:706.6px;width:194.2px;height:24.4px;background:linear-gradient(#2a7ad0 0%,#3aa4f0 8%,#42b0f8 14%,#1e96ec 26%,#1a90e8 55%,#168ae0 88%,#1272c4 100%);border-left:1px solid #1a50b8;box-shadow:inset 1px 0 0 #58b8f8"></div>
<svg style="left:726.5px;top:714.4px" width="11" height="11" viewBox="0 0 11 11" ><rect x="1" y="1" width="6" height="5" fill="#d8e8f8" stroke="#2a4a8a" stroke-width="0.700"/><rect x="4" y="5" width="6" height="5" fill="#a8c8f0" stroke="#2a4a8a" stroke-width="0.700"/></svg>
<svg style="left:738.8px;top:714.4px" width="11" height="11" viewBox="0 0 11 11" ><circle cx="4" cy="4" r="2.600" fill="#d83a6a"/><circle cx="7.400" cy="6.600" r="2.800" fill="#3a2a6a"/></svg>
<svg style="left:752.5px;top:714.4px" width="11" height="11" viewBox="0 0 11 11" ><path d="M5.500 1l4.800 8.800h-9.600z" fill="#f4d42a" stroke="#6a5a0a" stroke-width="0.700"/><path d="M5.500 4v3.400M5.500 8.200v1" stroke="#111" stroke-width="1.100"/></svg>
<svg style="left:764.8px;top:714.4px" width="11" height="11" viewBox="0 0 11 11" ><rect x="1" y="2" width="8" height="6" fill="#3a7a5a" stroke="#1a3a2a" stroke-width="0.700"/><path d="M2 9.600l7-1.600" stroke="#c8d8e8" stroke-width="1.300"/></svg>
<svg style="left:777.7px;top:714.4px" width="11" height="11" viewBox="0 0 11 11" ><path d="M1.400 5.500l5-4.400v8.800z" fill="#c84a3a" stroke="#3a1a1a" stroke-width="0.800"/><path d="M8.400 2.400v6.400" stroke="#2a2a2a" stroke-width="1.300"/></svg>
<svg style="left:790.3px;top:714.4px" width="11" height="11" viewBox="0 0 11 11" ><path d="M1 2l4.500-1.400l4.500 1.400v4c0 2.400-2 4-4.500 4.800c-2.500-0.800-4.500-2.400-4.500-4.800z" fill="#8ad04a" stroke="#d8e8a8" stroke-width="0.800"/><path d="M3 5.400l2 2l3.400-3.800" fill="none" stroke="#f8f8d8" stroke-width="1.500"/></svg>
<svg style="left:803.1px;top:714.4px" width="11" height="11" viewBox="0 0 11 11" ><rect x="0" y="1.400" width="11" height="8" fill="#1ec41e"/></svg>
<svg style="left:816px;top:714.4px" width="11" height="11" viewBox="0 0 11 11" ><circle cx="5.500" cy="5.500" r="5" fill="#e8e02a"/></svg>
<svg style="left:829.2px;top:714.4px" width="11" height="11" viewBox="0 0 11 11" ><rect x="-1" y="0.400" width="13" height="3.400" fill="#f4f4f4"/><rect x="-1" y="3.800" width="13" height="3.400" fill="#2a4ab8"/><rect x="-1" y="7.200" width="13" height="3.400" fill="#c82a2a"/></svg>
<svg style="left:842.3px;top:714.4px" width="11" height="11" viewBox="0 0 11 11" ><circle cx="5.500" cy="5.500" r="5" fill="#1a6ac8" stroke="#e8f0f8" stroke-width="0.900"/><path d="M5.500 2.400v4.800M3.600 5.600l1.900 2l1.900-2" stroke="#fff" stroke-width="1.200" fill="none"/></svg>
<svg style="left:855.2px;top:714.4px" width="11" height="11" viewBox="0 0 11 11" ><circle cx="5.500" cy="5.500" r="5" fill="#2a8a4a" stroke="#e8f0e8" stroke-width="0.900"/><path d="M3 7.600l1.400-4.400l1.200 3l1.200-3l1.400 4.400" stroke="#fff" stroke-width="1" fill="none"/></svg>
<svg style="left:867.5px;top:714.4px" width="11" height="11" viewBox="0 0 11 11" ><rect x="0.600" y="1" width="9.600" height="9" fill="#e8e0e8"/><path d="M1 1l9 9M10 1l-5 5" stroke="#d82a4a" stroke-width="2"/></svg>
<span class="t" style="left:893.4px;top:713.4px;font-size:7.6px;line-height:9.6px;letter-spacing:-0.15px;color:#d8ecfc;">20:51</span>
<span style="left:804px;top:717.2px;font-family:'Liberation Mono',monospace;font-weight:bold;font-size:8.45px;line-height:12px;color:#fff;letter-spacing:0;text-shadow:0.700px 0.700px 0 #000,-0.600px 0.600px 0 #000,0.600px -0.600px 0 #000,-0.600px -0.600px 0 #000,1px 1px 1px #000">graphica-nova.ucoz.ru</span>
</div></div></div></body></html>
